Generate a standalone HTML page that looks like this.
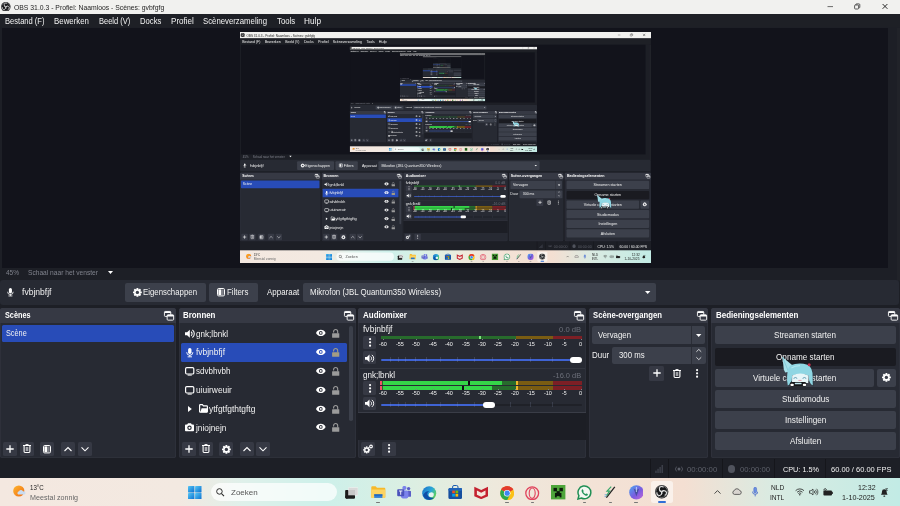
<!DOCTYPE html><html><head><meta charset="utf-8"><title>OBS</title><style>html,body{margin:0;padding:0;background:#1d1f26;overflow:hidden}body{width:900px;height:506px;position:relative;font-family:"Liberation Sans",sans-serif}.scr{position:absolute;left:0;top:0;width:900px;height:506px;overflow:hidden;will-change:transform}.nest{position:absolute;left:0;top:0;width:900px;height:506px;transform-origin:0 0;transform:scale(0.45667);overflow:hidden}.t{position:absolute;white-space:nowrap;line-height:1;transform-origin:0 50%;display:block;font-family:"Liberation Sans",sans-serif}</style></head><body><div class="scr"><div style="position:absolute;left:0px;top:0px;width:900px;height:506px;background:#1d1f26;"></div><div style="position:absolute;left:0px;top:0px;width:900px;height:13.6px;background:#f1f1ef;"></div><svg style="position:absolute;left:1.2px;top:1.8px;width:9.6px;height:9.6px" viewBox="-10 -10 20 20"><circle r="10" fill="#18181a"/><circle r="8.7" fill="none" stroke="#cfcfcf" stroke-width="0.7"/><circle cx="0" cy="-4.1" r="3.5" fill="none" stroke="#e4e4e4" stroke-width="1.5" stroke-dasharray="15.5 30" stroke-dashoffset="-2" transform="rotate(0)"/><circle cx="0" cy="-4.1" r="3.5" fill="none" stroke="#e4e4e4" stroke-width="1.5" stroke-dasharray="15.5 30" stroke-dashoffset="-2" transform="rotate(120)"/><circle cx="0" cy="-4.1" r="3.5" fill="none" stroke="#e4e4e4" stroke-width="1.5" stroke-dasharray="15.5 30" stroke-dashoffset="-2" transform="rotate(240)"/></svg><span class="t" style="left:13.80px;top:3.52px;font-size:7.9px;color:#1e1e1e;transform:scaleX(0.8648);">OBS 31.0.3 - Profiel: Naamloos - Scènes: gvbfgfg</span><svg style="position:absolute;left:826px;top:2px;width:64px;height:10px;overflow:visible" viewBox="0 0 64 10"><path d="M1.5 4.6 H7" stroke="#333" stroke-width="0.7"/><rect x="28.6" y="3" width="4" height="4" rx="0.8" fill="none" stroke="#333" stroke-width="0.8"/><path d="M29.8 3 V2.6 Q29.8 1.9 30.5 1.9 H33 Q33.8 1.9 33.8 2.7 V5.2 Q33.8 5.9 33.1 5.9" fill="none" stroke="#333" stroke-width="0.8"/><path d="M56.6 2 L61.4 6.8 M61.4 2 L56.6 6.8" stroke="#222" stroke-width="0.95"/></svg><div style="position:absolute;left:0px;top:13.6px;width:900px;height:13.9px;background:#1e2026;"></div><span class="t" style="left:5.00px;top:17.02px;font-size:8.6px;color:#f2f2f2;transform:scaleX(0.8796);">Bestand (F)</span><span class="t" style="left:54.00px;top:17.02px;font-size:8.6px;color:#f2f2f2;transform:scaleX(0.9158);">Bewerken</span><span class="t" style="left:98.70px;top:17.02px;font-size:8.6px;color:#f2f2f2;transform:scaleX(0.8736);">Beeld (V)</span><span class="t" style="left:139.70px;top:17.02px;font-size:8.6px;color:#f2f2f2;transform:scaleX(0.8916);">Docks</span><span class="t" style="left:170.60px;top:17.02px;font-size:8.6px;color:#f2f2f2;transform:scaleX(0.9401);">Profiel</span><span class="t" style="left:202.50px;top:17.02px;font-size:8.6px;color:#f2f2f2;transform:scaleX(0.9052);">Scèneverzameling</span><span class="t" style="left:276.50px;top:17.02px;font-size:8.6px;color:#f2f2f2;transform:scaleX(0.9022);">Tools</span><span class="t" style="left:304.00px;top:17.02px;font-size:8.6px;color:#f2f2f2;transform:scaleX(0.9611);">Hulp</span><div style="position:absolute;left:2px;top:27.5px;width:886px;height:240px;background:#12131b;"></div><div style="position:absolute;left:897.4px;top:27.5px;width:2.6px;height:253px;background:#212329;"></div><div style="position:absolute;left:240px;top:32px;width:411px;height:231px;overflow:hidden;background:#15161d"><div class="nest"><div style="position:absolute;left:0px;top:0px;width:900px;height:506px;background:#1d1f26;"></div><div style="position:absolute;left:0px;top:0px;width:900px;height:13.6px;background:#f1f1ef;"></div><svg style="position:absolute;left:1.2px;top:1.8px;width:9.6px;height:9.6px" viewBox="-10 -10 20 20"><circle r="10" fill="#18181a"/><circle r="8.7" fill="none" stroke="#cfcfcf" stroke-width="0.7"/><circle cx="0" cy="-4.1" r="3.5" fill="none" stroke="#e4e4e4" stroke-width="1.5" stroke-dasharray="15.5 30" stroke-dashoffset="-2" transform="rotate(0)"/><circle cx="0" cy="-4.1" r="3.5" fill="none" stroke="#e4e4e4" stroke-width="1.5" stroke-dasharray="15.5 30" stroke-dashoffset="-2" transform="rotate(120)"/><circle cx="0" cy="-4.1" r="3.5" fill="none" stroke="#e4e4e4" stroke-width="1.5" stroke-dasharray="15.5 30" stroke-dashoffset="-2" transform="rotate(240)"/></svg><span class="t" style="left:13.80px;top:3.52px;font-size:7.9px;color:#1e1e1e;transform:scaleX(0.8648);">OBS 31.0.3 - Profiel: Naamloos - Scènes: gvbfgfg</span><svg style="position:absolute;left:826px;top:2px;width:64px;height:10px;overflow:visible" viewBox="0 0 64 10"><path d="M1.5 4.6 H7" stroke="#333" stroke-width="0.7"/><rect x="28.6" y="3" width="4" height="4" rx="0.8" fill="none" stroke="#333" stroke-width="0.8"/><path d="M29.8 3 V2.6 Q29.8 1.9 30.5 1.9 H33 Q33.8 1.9 33.8 2.7 V5.2 Q33.8 5.9 33.1 5.9" fill="none" stroke="#333" stroke-width="0.8"/><path d="M56.6 2 L61.4 6.8 M61.4 2 L56.6 6.8" stroke="#222" stroke-width="0.95"/></svg><div style="position:absolute;left:0px;top:13.6px;width:900px;height:13.9px;background:#1e2026;"></div><span class="t" style="left:5.00px;top:17.02px;font-size:8.6px;color:#f2f2f2;transform:scaleX(0.8796);">Bestand (F)</span><span class="t" style="left:54.00px;top:17.02px;font-size:8.6px;color:#f2f2f2;transform:scaleX(0.9158);">Bewerken</span><span class="t" style="left:98.70px;top:17.02px;font-size:8.6px;color:#f2f2f2;transform:scaleX(0.8736);">Beeld (V)</span><span class="t" style="left:139.70px;top:17.02px;font-size:8.6px;color:#f2f2f2;transform:scaleX(0.8916);">Docks</span><span class="t" style="left:170.60px;top:17.02px;font-size:8.6px;color:#f2f2f2;transform:scaleX(0.9401);">Profiel</span><span class="t" style="left:202.50px;top:17.02px;font-size:8.6px;color:#f2f2f2;transform:scaleX(0.9052);">Scèneverzameling</span><span class="t" style="left:276.50px;top:17.02px;font-size:8.6px;color:#f2f2f2;transform:scaleX(0.9022);">Tools</span><span class="t" style="left:304.00px;top:17.02px;font-size:8.6px;color:#f2f2f2;transform:scaleX(0.9611);">Hulp</span><div style="position:absolute;left:2px;top:27.5px;width:886px;height:240px;background:#12131b;"></div><div style="position:absolute;left:897.4px;top:27.5px;width:2.6px;height:253px;background:#212329;"></div><div style="position:absolute;left:240px;top:32px;width:411px;height:231px;overflow:hidden;background:#15161d"><div class="nest"><div style="position:absolute;left:0px;top:0px;width:900px;height:506px;background:#1d1f26;"></div><div style="position:absolute;left:0px;top:0px;width:900px;height:13.6px;background:#f1f1ef;"></div><svg style="position:absolute;left:1.2px;top:1.8px;width:9.6px;height:9.6px" viewBox="-10 -10 20 20"><circle r="10" fill="#18181a"/><circle r="8.7" fill="none" stroke="#cfcfcf" stroke-width="0.7"/><circle cx="0" cy="-4.1" r="3.5" fill="none" stroke="#e4e4e4" stroke-width="1.5" stroke-dasharray="15.5 30" stroke-dashoffset="-2" transform="rotate(0)"/><circle cx="0" cy="-4.1" r="3.5" fill="none" stroke="#e4e4e4" stroke-width="1.5" stroke-dasharray="15.5 30" stroke-dashoffset="-2" transform="rotate(120)"/><circle cx="0" cy="-4.1" r="3.5" fill="none" stroke="#e4e4e4" stroke-width="1.5" stroke-dasharray="15.5 30" stroke-dashoffset="-2" transform="rotate(240)"/></svg><span class="t" style="left:13.80px;top:3.52px;font-size:7.9px;color:#1e1e1e;transform:scaleX(0.8648);">OBS 31.0.3 - Profiel: Naamloos - Scènes: gvbfgfg</span><svg style="position:absolute;left:826px;top:2px;width:64px;height:10px;overflow:visible" viewBox="0 0 64 10"><path d="M1.5 4.6 H7" stroke="#333" stroke-width="0.7"/><rect x="28.6" y="3" width="4" height="4" rx="0.8" fill="none" stroke="#333" stroke-width="0.8"/><path d="M29.8 3 V2.6 Q29.8 1.9 30.5 1.9 H33 Q33.8 1.9 33.8 2.7 V5.2 Q33.8 5.9 33.1 5.9" fill="none" stroke="#333" stroke-width="0.8"/><path d="M56.6 2 L61.4 6.8 M61.4 2 L56.6 6.8" stroke="#222" stroke-width="0.95"/></svg><div style="position:absolute;left:0px;top:13.6px;width:900px;height:13.9px;background:#1e2026;"></div><span class="t" style="left:5.00px;top:17.02px;font-size:8.6px;color:#f2f2f2;transform:scaleX(0.8796);">Bestand (F)</span><span class="t" style="left:54.00px;top:17.02px;font-size:8.6px;color:#f2f2f2;transform:scaleX(0.9158);">Bewerken</span><span class="t" style="left:98.70px;top:17.02px;font-size:8.6px;color:#f2f2f2;transform:scaleX(0.8736);">Beeld (V)</span><span class="t" style="left:139.70px;top:17.02px;font-size:8.6px;color:#f2f2f2;transform:scaleX(0.8916);">Docks</span><span class="t" style="left:170.60px;top:17.02px;font-size:8.6px;color:#f2f2f2;transform:scaleX(0.9401);">Profiel</span><span class="t" style="left:202.50px;top:17.02px;font-size:8.6px;color:#f2f2f2;transform:scaleX(0.9052);">Scèneverzameling</span><span class="t" style="left:276.50px;top:17.02px;font-size:8.6px;color:#f2f2f2;transform:scaleX(0.9022);">Tools</span><span class="t" style="left:304.00px;top:17.02px;font-size:8.6px;color:#f2f2f2;transform:scaleX(0.9611);">Hulp</span><div style="position:absolute;left:2px;top:27.5px;width:886px;height:240px;background:#12131b;"></div><div style="position:absolute;left:897.4px;top:27.5px;width:2.6px;height:253px;background:#212329;"></div><div style="position:absolute;left:240px;top:32px;width:411px;height:231px;overflow:hidden;background:#15161d"><div class="nest"><div style="position:absolute;left:0px;top:0px;width:900px;height:506px;background:#1d1f26;"></div><div style="position:absolute;left:0px;top:0px;width:900px;height:13.6px;background:#f1f1ef;"></div><svg style="position:absolute;left:1.2px;top:1.8px;width:9.6px;height:9.6px" viewBox="-10 -10 20 20"><circle r="10" fill="#18181a"/><circle r="8.7" fill="none" stroke="#cfcfcf" stroke-width="0.7"/><circle cx="0" cy="-4.1" r="3.5" fill="none" stroke="#e4e4e4" stroke-width="1.5" stroke-dasharray="15.5 30" stroke-dashoffset="-2" transform="rotate(0)"/><circle cx="0" cy="-4.1" r="3.5" fill="none" stroke="#e4e4e4" stroke-width="1.5" stroke-dasharray="15.5 30" stroke-dashoffset="-2" transform="rotate(120)"/><circle cx="0" cy="-4.1" r="3.5" fill="none" stroke="#e4e4e4" stroke-width="1.5" stroke-dasharray="15.5 30" stroke-dashoffset="-2" transform="rotate(240)"/></svg><span class="t" style="left:13.80px;top:3.52px;font-size:7.9px;color:#1e1e1e;transform:scaleX(0.8648);">OBS 31.0.3 - Profiel: Naamloos - Scènes: gvbfgfg</span><svg style="position:absolute;left:826px;top:2px;width:64px;height:10px;overflow:visible" viewBox="0 0 64 10"><path d="M1.5 4.6 H7" stroke="#333" stroke-width="0.7"/><rect x="28.6" y="3" width="4" height="4" rx="0.8" fill="none" stroke="#333" stroke-width="0.8"/><path d="M29.8 3 V2.6 Q29.8 1.9 30.5 1.9 H33 Q33.8 1.9 33.8 2.7 V5.2 Q33.8 5.9 33.1 5.9" fill="none" stroke="#333" stroke-width="0.8"/><path d="M56.6 2 L61.4 6.8 M61.4 2 L56.6 6.8" stroke="#222" stroke-width="0.95"/></svg><div style="position:absolute;left:0px;top:13.6px;width:900px;height:13.9px;background:#1e2026;"></div><span class="t" style="left:5.00px;top:17.02px;font-size:8.6px;color:#f2f2f2;transform:scaleX(0.8796);">Bestand (F)</span><span class="t" style="left:54.00px;top:17.02px;font-size:8.6px;color:#f2f2f2;transform:scaleX(0.9158);">Bewerken</span><span class="t" style="left:98.70px;top:17.02px;font-size:8.6px;color:#f2f2f2;transform:scaleX(0.8736);">Beeld (V)</span><span class="t" style="left:139.70px;top:17.02px;font-size:8.6px;color:#f2f2f2;transform:scaleX(0.8916);">Docks</span><span class="t" style="left:170.60px;top:17.02px;font-size:8.6px;color:#f2f2f2;transform:scaleX(0.9401);">Profiel</span><span class="t" style="left:202.50px;top:17.02px;font-size:8.6px;color:#f2f2f2;transform:scaleX(0.9052);">Scèneverzameling</span><span class="t" style="left:276.50px;top:17.02px;font-size:8.6px;color:#f2f2f2;transform:scaleX(0.9022);">Tools</span><span class="t" style="left:304.00px;top:17.02px;font-size:8.6px;color:#f2f2f2;transform:scaleX(0.9611);">Hulp</span><div style="position:absolute;left:2px;top:27.5px;width:886px;height:240px;background:#12131b;"></div><div style="position:absolute;left:897.4px;top:27.5px;width:2.6px;height:253px;background:#212329;"></div><div style="position:absolute;left:240px;top:32px;width:411px;height:231px;overflow:hidden;background:#15161d"><div class="nest"><div style="position:absolute;left:0px;top:0px;width:900px;height:506px;background:#1d1f26;"></div><div style="position:absolute;left:0px;top:0px;width:900px;height:13.6px;background:#f1f1ef;"></div><div style="position:absolute;left:0px;top:13.6px;width:900px;height:13.9px;background:#1e2026;"></div><div style="position:absolute;left:5px;top:18px;width:315px;height:6px;background:#8a8c92;"></div><div style="position:absolute;left:2px;top:27.5px;width:886px;height:240px;background:#12131b;"></div><div style="position:absolute;left:240px;top:32px;width:411px;height:231px;overflow:hidden;background:#15161d"><div class="nest"><div style="position:absolute;left:0px;top:0px;width:900px;height:506px;background:#1d1f26;"></div><div style="position:absolute;left:0px;top:0px;width:900px;height:13.6px;background:#f1f1ef;"></div><div style="position:absolute;left:0px;top:13.6px;width:900px;height:13.9px;background:#1e2026;"></div><div style="position:absolute;left:5px;top:18px;width:315px;height:6px;background:#8a8c92;"></div><div style="position:absolute;left:2px;top:27.5px;width:886px;height:240px;background:#12131b;"></div><div style="position:absolute;left:240px;top:32px;width:411px;height:231px;overflow:hidden;background:#15161d"></div><div style="position:absolute;left:0px;top:280px;width:898.6px;height:25px;background:#272a33;border-radius:3px;"></div><div style="position:absolute;left:125px;top:282.8px;width:81px;height:19px;background:#3c404b;border-radius:2px;"></div><div style="position:absolute;left:209.3px;top:282.8px;width:48.4px;height:19px;background:#3c404b;border-radius:2px;"></div><div style="position:absolute;left:302.7px;top:282.8px;width:353px;height:19px;background:#3c404b;border-radius:2px;"></div><div style="position:absolute;left:0px;top:308px;width:176px;height:150.4px;background:#272a33;border-radius:2.5px;"></div><div style="position:absolute;left:0px;top:308px;width:176px;height:14.8px;background:#363944;"></div><div style="position:absolute;left:179px;top:308px;width:176.5px;height:150.4px;background:#272a33;border-radius:2.5px;"></div><div style="position:absolute;left:179px;top:308px;width:176.5px;height:14.8px;background:#363944;"></div><div style="position:absolute;left:358.3px;top:308px;width:227.7px;height:150.4px;background:#272a33;border-radius:2.5px;"></div><div style="position:absolute;left:358.3px;top:308px;width:227.7px;height:14.8px;background:#363944;"></div><div style="position:absolute;left:589.3px;top:308px;width:118.90000000000009px;height:150.4px;background:#272a33;border-radius:2.5px;"></div><div style="position:absolute;left:589.3px;top:308px;width:118.90000000000009px;height:14.8px;background:#363944;"></div><div style="position:absolute;left:710.7px;top:308px;width:187.29999999999995px;height:150.4px;background:#272a33;border-radius:2.5px;"></div><div style="position:absolute;left:710.7px;top:308px;width:187.29999999999995px;height:14.8px;background:#363944;"></div><div style="position:absolute;left:2px;top:324.6px;width:172px;height:17.2px;background:#284cb8;"></div><div style="position:absolute;left:180.7px;top:342.9px;width:166.5px;height:18.8px;background:#284cb8;"></div><div style="position:absolute;left:185px;top:330.5px;width:40px;height:6px;background:#b8bac0;"></div><div style="position:absolute;left:316px;top:330.5px;width:9px;height:6px;background:#d0d0d0;"></div><div style="position:absolute;left:331px;top:329.5px;width:8px;height:8px;background:#8a8a8a;"></div><div style="position:absolute;left:185px;top:349.3px;width:40px;height:6px;background:#b8bac0;"></div><div style="position:absolute;left:316px;top:349.3px;width:9px;height:6px;background:#d0d0d0;"></div><div style="position:absolute;left:331px;top:348.3px;width:8px;height:8px;background:#8a8a8a;"></div><div style="position:absolute;left:185px;top:368.1px;width:40px;height:6px;background:#b8bac0;"></div><div style="position:absolute;left:316px;top:368.1px;width:9px;height:6px;background:#d0d0d0;"></div><div style="position:absolute;left:331px;top:367.1px;width:8px;height:8px;background:#8a8a8a;"></div><div style="position:absolute;left:185px;top:387px;width:40px;height:6px;background:#b8bac0;"></div><div style="position:absolute;left:316px;top:387px;width:9px;height:6px;background:#d0d0d0;"></div><div style="position:absolute;left:331px;top:386px;width:8px;height:8px;background:#8a8a8a;"></div><div style="position:absolute;left:185px;top:405.8px;width:40px;height:6px;background:#b8bac0;"></div><div style="position:absolute;left:316px;top:405.8px;width:9px;height:6px;background:#d0d0d0;"></div><div style="position:absolute;left:331px;top:404.8px;width:8px;height:8px;background:#8a8a8a;"></div><div style="position:absolute;left:185px;top:424.5px;width:40px;height:6px;background:#b8bac0;"></div><div style="position:absolute;left:316px;top:424.5px;width:9px;height:6px;background:#d0d0d0;"></div><div style="position:absolute;left:331px;top:423.5px;width:8px;height:8px;background:#8a8a8a;"></div><div style="position:absolute;left:380.5px;top:336px;width:135.3px;height:3.4px;background:#276b2c;"></div><div style="position:absolute;left:515.8px;top:336px;width:37px;height:3.4px;background:#7a5c12;"></div><div style="position:absolute;left:552.8px;top:336px;width:29.2px;height:3.4px;background:#7c1f25;"></div><div style="position:absolute;left:380.5px;top:358.5px;width:195px;height:2px;background:#3f63d4;"></div><div style="position:absolute;left:570px;top:356.6px;width:12.2px;height:6.2px;background:#fff;border-radius:3px;"></div><div style="position:absolute;left:380.5px;top:380.5px;width:135.3px;height:9px;background:#276b2c;"></div><div style="position:absolute;left:515.8px;top:380.5px;width:37px;height:9px;background:#7a5c12;"></div><div style="position:absolute;left:552.8px;top:380.5px;width:29.2px;height:9px;background:#7c1f25;"></div><div style="position:absolute;left:383px;top:380.5px;width:115px;height:9px;background:#35d648;"></div><div style="position:absolute;left:380.5px;top:403.8px;width:105px;height:2px;background:#3f63d4;"></div><div style="position:absolute;left:482.8px;top:401.8px;width:11.8px;height:6.2px;background:#fff;border-radius:3px;"></div><div style="position:absolute;left:358.3px;top:412.6px;width:227.7px;height:27.6px;background:#1c1e25;"></div><div style="position:absolute;left:592.2px;top:326.2px;width:113.3px;height:17.8px;background:#3c404b;border-radius:2px;"></div><div style="position:absolute;left:612px;top:346.7px;width:93.5px;height:17.4px;background:#3c404b;border-radius:2px;"></div><div style="position:absolute;left:715px;top:326.2px;width:181px;height:18px;background:#3c404b;border-radius:2px;"></div><div style="position:absolute;left:715px;top:347.6px;width:181px;height:18px;background:#1a1b21;border-radius:2px;"></div><div style="position:absolute;left:715px;top:368.8px;width:181px;height:18px;background:#3c404b;border-radius:2px;"></div><div style="position:absolute;left:715px;top:390px;width:181px;height:18px;background:#3c404b;border-radius:2px;"></div><div style="position:absolute;left:715px;top:411.2px;width:181px;height:18px;background:#3c404b;border-radius:2px;"></div><div style="position:absolute;left:715px;top:432.4px;width:181px;height:18px;background:#3c404b;border-radius:2px;"></div><div style="position:absolute;left:0;top:477.5px;width:900px;height:28.5px;background:linear-gradient(90deg,#f4e8e0 0%,#f3e9e1 20%,#dff0ea 27%,#cdf0ea 36%,#dcefe2 46%,#eee9dc 55%,#f3e2d6 66%,#f4dfd2 76%,#d9ebe2 86%,#c2ebe5 100%)"></div><div style="position:absolute;left:188px;top:485.6px;width:13.6px;height:13.6px;background:#2a8ae0;"></div><div style="position:absolute;left:210.6px;top:483px;width:126.6px;height:18.2px;background:rgba(255,255,255,0.72);border-radius:9px;"></div><div style="position:absolute;left:345px;top:485.6px;width:14px;height:14px;background:#333;border-radius:5px;"></div><div style="position:absolute;left:371px;top:485.6px;width:14px;height:14px;background:#f7c33a;border-radius:5px;"></div><div style="position:absolute;left:397px;top:485.6px;width:14px;height:14px;background:#6a70d8;border-radius:5px;"></div><div style="position:absolute;left:422px;top:485.6px;width:14px;height:14px;background:#2a8ad0;border-radius:5px;"></div><div style="position:absolute;left:448px;top:485.6px;width:14px;height:14px;background:#1b64b9;border-radius:5px;"></div><div style="position:absolute;left:474px;top:485.6px;width:14px;height:14px;background:#c8202f;border-radius:5px;"></div><div style="position:absolute;left:500px;top:485.6px;width:14px;height:14px;background:#e8a030;border-radius:5px;"></div><div style="position:absolute;left:525px;top:485.6px;width:14px;height:14px;background:#e0435c;border-radius:5px;"></div><div style="position:absolute;left:551px;top:485.6px;width:14px;height:14px;background:#4ea53a;border-radius:5px;"></div><div style="position:absolute;left:577px;top:485.6px;width:14px;height:14px;background:#24955c;border-radius:5px;"></div><div style="position:absolute;left:604px;top:485.6px;width:14px;height:14px;background:#444;border-radius:5px;"></div><div style="position:absolute;left:629px;top:485.6px;width:14px;height:14px;background:#7a5be0;border-radius:5px;"></div><div style="position:absolute;left:655px;top:485.6px;width:14px;height:14px;background:#1b1b1d;border-radius:5px;"></div></div></div><div style="position:absolute;left:0px;top:280px;width:898.6px;height:25px;background:#272a33;border-radius:3px;"></div><div style="position:absolute;left:125px;top:282.8px;width:81px;height:19px;background:#3c404b;border-radius:2px;"></div><div style="position:absolute;left:209.3px;top:282.8px;width:48.4px;height:19px;background:#3c404b;border-radius:2px;"></div><div style="position:absolute;left:302.7px;top:282.8px;width:353px;height:19px;background:#3c404b;border-radius:2px;"></div><div style="position:absolute;left:0px;top:308px;width:176px;height:150.4px;background:#272a33;border-radius:2.5px;"></div><div style="position:absolute;left:0px;top:308px;width:176px;height:14.8px;background:#363944;"></div><div style="position:absolute;left:179px;top:308px;width:176.5px;height:150.4px;background:#272a33;border-radius:2.5px;"></div><div style="position:absolute;left:179px;top:308px;width:176.5px;height:14.8px;background:#363944;"></div><div style="position:absolute;left:358.3px;top:308px;width:227.7px;height:150.4px;background:#272a33;border-radius:2.5px;"></div><div style="position:absolute;left:358.3px;top:308px;width:227.7px;height:14.8px;background:#363944;"></div><div style="position:absolute;left:589.3px;top:308px;width:118.90000000000009px;height:150.4px;background:#272a33;border-radius:2.5px;"></div><div style="position:absolute;left:589.3px;top:308px;width:118.90000000000009px;height:14.8px;background:#363944;"></div><div style="position:absolute;left:710.7px;top:308px;width:187.29999999999995px;height:150.4px;background:#272a33;border-radius:2.5px;"></div><div style="position:absolute;left:710.7px;top:308px;width:187.29999999999995px;height:14.8px;background:#363944;"></div><div style="position:absolute;left:2px;top:324.6px;width:172px;height:17.2px;background:#284cb8;"></div><div style="position:absolute;left:180.7px;top:342.9px;width:166.5px;height:18.8px;background:#284cb8;"></div><div style="position:absolute;left:185px;top:330.5px;width:40px;height:6px;background:#b8bac0;"></div><div style="position:absolute;left:316px;top:330.5px;width:9px;height:6px;background:#d0d0d0;"></div><div style="position:absolute;left:331px;top:329.5px;width:8px;height:8px;background:#8a8a8a;"></div><div style="position:absolute;left:185px;top:349.3px;width:40px;height:6px;background:#b8bac0;"></div><div style="position:absolute;left:316px;top:349.3px;width:9px;height:6px;background:#d0d0d0;"></div><div style="position:absolute;left:331px;top:348.3px;width:8px;height:8px;background:#8a8a8a;"></div><div style="position:absolute;left:185px;top:368.1px;width:40px;height:6px;background:#b8bac0;"></div><div style="position:absolute;left:316px;top:368.1px;width:9px;height:6px;background:#d0d0d0;"></div><div style="position:absolute;left:331px;top:367.1px;width:8px;height:8px;background:#8a8a8a;"></div><div style="position:absolute;left:185px;top:387px;width:40px;height:6px;background:#b8bac0;"></div><div style="position:absolute;left:316px;top:387px;width:9px;height:6px;background:#d0d0d0;"></div><div style="position:absolute;left:331px;top:386px;width:8px;height:8px;background:#8a8a8a;"></div><div style="position:absolute;left:185px;top:405.8px;width:40px;height:6px;background:#b8bac0;"></div><div style="position:absolute;left:316px;top:405.8px;width:9px;height:6px;background:#d0d0d0;"></div><div style="position:absolute;left:331px;top:404.8px;width:8px;height:8px;background:#8a8a8a;"></div><div style="position:absolute;left:185px;top:424.5px;width:40px;height:6px;background:#b8bac0;"></div><div style="position:absolute;left:316px;top:424.5px;width:9px;height:6px;background:#d0d0d0;"></div><div style="position:absolute;left:331px;top:423.5px;width:8px;height:8px;background:#8a8a8a;"></div><div style="position:absolute;left:380.5px;top:336px;width:135.3px;height:3.4px;background:#276b2c;"></div><div style="position:absolute;left:515.8px;top:336px;width:37px;height:3.4px;background:#7a5c12;"></div><div style="position:absolute;left:552.8px;top:336px;width:29.2px;height:3.4px;background:#7c1f25;"></div><div style="position:absolute;left:380.5px;top:358.5px;width:195px;height:2px;background:#3f63d4;"></div><div style="position:absolute;left:570px;top:356.6px;width:12.2px;height:6.2px;background:#fff;border-radius:3px;"></div><div style="position:absolute;left:380.5px;top:380.5px;width:135.3px;height:9px;background:#276b2c;"></div><div style="position:absolute;left:515.8px;top:380.5px;width:37px;height:9px;background:#7a5c12;"></div><div style="position:absolute;left:552.8px;top:380.5px;width:29.2px;height:9px;background:#7c1f25;"></div><div style="position:absolute;left:383px;top:380.5px;width:115px;height:9px;background:#35d648;"></div><div style="position:absolute;left:380.5px;top:403.8px;width:105px;height:2px;background:#3f63d4;"></div><div style="position:absolute;left:482.8px;top:401.8px;width:11.8px;height:6.2px;background:#fff;border-radius:3px;"></div><div style="position:absolute;left:358.3px;top:412.6px;width:227.7px;height:27.6px;background:#1c1e25;"></div><div style="position:absolute;left:592.2px;top:326.2px;width:113.3px;height:17.8px;background:#3c404b;border-radius:2px;"></div><div style="position:absolute;left:612px;top:346.7px;width:93.5px;height:17.4px;background:#3c404b;border-radius:2px;"></div><div style="position:absolute;left:715px;top:326.2px;width:181px;height:18px;background:#3c404b;border-radius:2px;"></div><div style="position:absolute;left:715px;top:347.6px;width:181px;height:18px;background:#1a1b21;border-radius:2px;"></div><div style="position:absolute;left:715px;top:368.8px;width:181px;height:18px;background:#3c404b;border-radius:2px;"></div><div style="position:absolute;left:715px;top:390px;width:181px;height:18px;background:#3c404b;border-radius:2px;"></div><div style="position:absolute;left:715px;top:411.2px;width:181px;height:18px;background:#3c404b;border-radius:2px;"></div><div style="position:absolute;left:715px;top:432.4px;width:181px;height:18px;background:#3c404b;border-radius:2px;"></div><div style="position:absolute;left:0;top:477.5px;width:900px;height:28.5px;background:linear-gradient(90deg,#f4e8e0 0%,#f3e9e1 20%,#dff0ea 27%,#cdf0ea 36%,#dcefe2 46%,#eee9dc 55%,#f3e2d6 66%,#f4dfd2 76%,#d9ebe2 86%,#c2ebe5 100%)"></div><div style="position:absolute;left:188px;top:485.6px;width:13.6px;height:13.6px;background:#2a8ae0;"></div><div style="position:absolute;left:210.6px;top:483px;width:126.6px;height:18.2px;background:rgba(255,255,255,0.72);border-radius:9px;"></div><div style="position:absolute;left:345px;top:485.6px;width:14px;height:14px;background:#333;border-radius:5px;"></div><div style="position:absolute;left:371px;top:485.6px;width:14px;height:14px;background:#f7c33a;border-radius:5px;"></div><div style="position:absolute;left:397px;top:485.6px;width:14px;height:14px;background:#6a70d8;border-radius:5px;"></div><div style="position:absolute;left:422px;top:485.6px;width:14px;height:14px;background:#2a8ad0;border-radius:5px;"></div><div style="position:absolute;left:448px;top:485.6px;width:14px;height:14px;background:#1b64b9;border-radius:5px;"></div><div style="position:absolute;left:474px;top:485.6px;width:14px;height:14px;background:#c8202f;border-radius:5px;"></div><div style="position:absolute;left:500px;top:485.6px;width:14px;height:14px;background:#e8a030;border-radius:5px;"></div><div style="position:absolute;left:525px;top:485.6px;width:14px;height:14px;background:#e0435c;border-radius:5px;"></div><div style="position:absolute;left:551px;top:485.6px;width:14px;height:14px;background:#4ea53a;border-radius:5px;"></div><div style="position:absolute;left:577px;top:485.6px;width:14px;height:14px;background:#24955c;border-radius:5px;"></div><div style="position:absolute;left:604px;top:485.6px;width:14px;height:14px;background:#444;border-radius:5px;"></div><div style="position:absolute;left:629px;top:485.6px;width:14px;height:14px;background:#7a5be0;border-radius:5px;"></div><div style="position:absolute;left:655px;top:485.6px;width:14px;height:14px;background:#1b1b1d;border-radius:5px;"></div></div></div><span class="t" style="left:6.30px;top:268.83px;font-size:7.2px;color:#80838d;transform:scaleX(0.9034);">45%</span><span class="t" style="left:28.00px;top:268.83px;font-size:7.2px;color:#80838d;transform:scaleX(0.9220);">Schaal naar het venster</span><svg style="position:absolute;left:108px;top:270.9px;width:5px;height:3px;overflow:visible" viewBox="0 0 5 3" ><path d="M0 0 H5 L2.5 3 Z" fill="#fff"/></svg><div style="position:absolute;left:0px;top:280px;width:898.6px;height:25px;background:#272a33;border-radius:3px;"></div><svg style="position:absolute;left:7.2px;top:288px;width:6.84px;height:8.46px;overflow:visible" viewBox="0 0 7.6 9.4" ><rect x="2.1" y="0" width="3.4" height="6" rx="1.7" fill="#fff"/><path d="M0.7 4.2 A3.1 3.1 0 0 0 6.9 4.2" fill="none" stroke="#fff" stroke-width="0.9"/><rect x="3.3" y="7" width="1" height="1.6" fill="#fff"/><rect x="1.6" y="8.4" width="4.4" height="0.9" fill="#fff"/></svg><span class="t" style="left:22.00px;top:289.19px;font-size:8.2px;color:#f2f2f2;transform:scaleX(1.0454);">fvbjnbfjf</span><div style="position:absolute;left:125px;top:282.8px;width:81px;height:19px;background:#3c404b;border-radius:2px;"></div><svg style="position:absolute;left:132.6px;top:288px;width:8.8px;height:8.8px;overflow:visible" viewBox="0 0 10 10" ><g transform="translate(5 5)"><rect x="-1.1" y="-5" width="2.2" height="2.4" rx="0.4" transform="rotate(0)" fill="#fff"/><rect x="-1.1" y="-5" width="2.2" height="2.4" rx="0.4" transform="rotate(45)" fill="#fff"/><rect x="-1.1" y="-5" width="2.2" height="2.4" rx="0.4" transform="rotate(90)" fill="#fff"/><rect x="-1.1" y="-5" width="2.2" height="2.4" rx="0.4" transform="rotate(135)" fill="#fff"/><rect x="-1.1" y="-5" width="2.2" height="2.4" rx="0.4" transform="rotate(180)" fill="#fff"/><rect x="-1.1" y="-5" width="2.2" height="2.4" rx="0.4" transform="rotate(225)" fill="#fff"/><rect x="-1.1" y="-5" width="2.2" height="2.4" rx="0.4" transform="rotate(270)" fill="#fff"/><rect x="-1.1" y="-5" width="2.2" height="2.4" rx="0.4" transform="rotate(315)" fill="#fff"/><circle r="3.7" fill="#fff"/><circle r="1.9" fill="#3c404b"/></g></svg><span class="t" style="left:142.70px;top:288.99px;font-size:8.2px;color:#f2f2f2;transform:scaleX(0.9565);">Eigenschappen</span><div style="position:absolute;left:209.3px;top:282.8px;width:48.4px;height:19px;background:#3c404b;border-radius:2px;"></div><svg style="position:absolute;left:217.2px;top:288.3px;width:8px;height:8.4px;overflow:visible" viewBox="0 0 8 8.4" ><rect x="0.5" y="0.5" width="7" height="7.4" rx="1.2" fill="none" stroke="#fff" stroke-width="1"/><rect x="1.4" y="1.4" width="2.6" height="5.6" fill="#fff"/><rect x="4" y="1.4" width="2.6" height="5.6" fill="#fff" opacity="0.35"/></svg><span class="t" style="left:227.30px;top:288.99px;font-size:8.2px;color:#f2f2f2;transform:scaleX(0.9598);">Filters</span><span class="t" style="left:266.70px;top:288.99px;font-size:8.2px;color:#f2f2f2;transform:scaleX(0.9719);">Apparaat</span><div style="position:absolute;left:302.7px;top:282.8px;width:353px;height:19px;background:#3c404b;border-radius:2px;"></div><span class="t" style="left:309.50px;top:288.99px;font-size:8.2px;color:#f2f2f2;transform:scaleX(0.9618);">Mikrofon (JBL Quantum350 Wireless)</span><svg style="position:absolute;left:645.2px;top:291.4px;width:5.4px;height:3px;overflow:visible" viewBox="0 0 5.4 3" ><path d="M0 0 H5.4 L2.7 3 Z" fill="#fff"/></svg><div style="position:absolute;left:0px;top:308px;width:176px;height:150.4px;background:#272a33;border-radius:2.5px;box-shadow:inset 0 0 0 0.8px #30333d;"></div><div style="position:absolute;left:0px;top:308px;width:176px;height:14.8px;background:#363944;border-radius:2.5px;border-bottom-left-radius:0;border-bottom-right-radius:0;"></div><span class="t" style="left:4.50px;top:312.49px;font-size:8.2px;color:#fff;transform:scaleX(0.8889);font-weight:bold;">Scènes</span><svg style="position:absolute;left:164.4px;top:310.5px;width:10.1px;height:9.6px;overflow:visible" viewBox="0 0 10.1 9.6" ><rect x="0.45" y="0.45" width="6.3" height="5" rx="0.9" fill="none" stroke="#fff" stroke-width="0.9"/><rect x="0.45" y="0.45" width="6.3" height="1.5" rx="0.5" fill="#fff"/><rect x="3.15" y="3.85" width="6.5" height="5.3" rx="0.9" fill="#363944" stroke="#fff" stroke-width="0.9"/><rect x="3.15" y="3.85" width="6.5" height="1.6" rx="0.5" fill="#fff"/></svg><div style="position:absolute;left:179px;top:308px;width:176.5px;height:150.4px;background:#272a33;border-radius:2.5px;box-shadow:inset 0 0 0 0.8px #30333d;"></div><div style="position:absolute;left:179px;top:308px;width:176.5px;height:14.8px;background:#363944;border-radius:2.5px;border-bottom-left-radius:0;border-bottom-right-radius:0;"></div><span class="t" style="left:183.40px;top:312.49px;font-size:8.2px;color:#fff;transform:scaleX(0.9622);font-weight:bold;">Bronnen</span><svg style="position:absolute;left:343.9px;top:310.5px;width:10.1px;height:9.6px;overflow:visible" viewBox="0 0 10.1 9.6" ><rect x="0.45" y="0.45" width="6.3" height="5" rx="0.9" fill="none" stroke="#fff" stroke-width="0.9"/><rect x="0.45" y="0.45" width="6.3" height="1.5" rx="0.5" fill="#fff"/><rect x="3.15" y="3.85" width="6.5" height="5.3" rx="0.9" fill="#363944" stroke="#fff" stroke-width="0.9"/><rect x="3.15" y="3.85" width="6.5" height="1.6" rx="0.5" fill="#fff"/></svg><div style="position:absolute;left:358.3px;top:308px;width:227.7px;height:150.4px;background:#272a33;border-radius:2.5px;box-shadow:inset 0 0 0 0.8px #30333d;"></div><div style="position:absolute;left:358.3px;top:308px;width:227.7px;height:14.8px;background:#363944;border-radius:2.5px;border-bottom-left-radius:0;border-bottom-right-radius:0;"></div><span class="t" style="left:362.50px;top:312.49px;font-size:8.2px;color:#fff;transform:scaleX(0.9745);font-weight:bold;">Audiomixer</span><svg style="position:absolute;left:574.4px;top:310.5px;width:10.1px;height:9.6px;overflow:visible" viewBox="0 0 10.1 9.6" ><rect x="0.45" y="0.45" width="6.3" height="5" rx="0.9" fill="none" stroke="#fff" stroke-width="0.9"/><rect x="0.45" y="0.45" width="6.3" height="1.5" rx="0.5" fill="#fff"/><rect x="3.15" y="3.85" width="6.5" height="5.3" rx="0.9" fill="#363944" stroke="#fff" stroke-width="0.9"/><rect x="3.15" y="3.85" width="6.5" height="1.6" rx="0.5" fill="#fff"/></svg><div style="position:absolute;left:589.3px;top:308px;width:118.90000000000009px;height:150.4px;background:#272a33;border-radius:2.5px;box-shadow:inset 0 0 0 0.8px #30333d;"></div><div style="position:absolute;left:589.3px;top:308px;width:118.90000000000009px;height:14.8px;background:#363944;border-radius:2.5px;border-bottom-left-radius:0;border-bottom-right-radius:0;"></div><span class="t" style="left:593.30px;top:312.49px;font-size:8.2px;color:#fff;transform:scaleX(0.9404);font-weight:bold;">Scène-overgangen</span><svg style="position:absolute;left:696.6px;top:310.5px;width:10.1px;height:9.6px;overflow:visible" viewBox="0 0 10.1 9.6" ><rect x="0.45" y="0.45" width="6.3" height="5" rx="0.9" fill="none" stroke="#fff" stroke-width="0.9"/><rect x="0.45" y="0.45" width="6.3" height="1.5" rx="0.5" fill="#fff"/><rect x="3.15" y="3.85" width="6.5" height="5.3" rx="0.9" fill="#363944" stroke="#fff" stroke-width="0.9"/><rect x="3.15" y="3.85" width="6.5" height="1.6" rx="0.5" fill="#fff"/></svg><div style="position:absolute;left:710.7px;top:308px;width:189.29999999999995px;height:150.4px;background:#272a33;border-radius:2.5px;box-shadow:inset 0 0 0 0.8px #30333d;"></div><div style="position:absolute;left:710.7px;top:308px;width:189.29999999999995px;height:14.8px;background:#363944;border-radius:2.5px;border-bottom-left-radius:0;border-bottom-right-radius:0;"></div><span class="t" style="left:715.50px;top:312.49px;font-size:8.2px;color:#fff;transform:scaleX(0.9723);font-weight:bold;">Bedieningselementen</span><svg style="position:absolute;left:887.8px;top:310.5px;width:10.1px;height:9.6px;overflow:visible" viewBox="0 0 10.1 9.6" ><rect x="0.45" y="0.45" width="6.3" height="5" rx="0.9" fill="none" stroke="#fff" stroke-width="0.9"/><rect x="0.45" y="0.45" width="6.3" height="1.5" rx="0.5" fill="#fff"/><rect x="3.15" y="3.85" width="6.5" height="5.3" rx="0.9" fill="#363944" stroke="#fff" stroke-width="0.9"/><rect x="3.15" y="3.85" width="6.5" height="1.6" rx="0.5" fill="#fff"/></svg><div style="position:absolute;left:2px;top:324.6px;width:172px;height:17.2px;background:#284cb8;border-radius:1.5px;"></div><span class="t" style="left:6.30px;top:329.99px;font-size:8.2px;color:#f2f2f2;transform:scaleX(0.8915);">Scène</span><div style="position:absolute;left:3.1px;top:442px;width:14.2px;height:13.8px;background:#363944;border-radius:1.5px;"></div><div style="position:absolute;left:20.2px;top:442px;width:14.2px;height:13.8px;background:#363944;border-radius:1.5px;"></div><div style="position:absolute;left:40.1px;top:442px;width:14.2px;height:13.8px;background:#363944;border-radius:1.5px;"></div><div style="position:absolute;left:61px;top:442px;width:14.2px;height:13.8px;background:#363944;border-radius:1.5px;"></div><div style="position:absolute;left:77.8px;top:442px;width:14.2px;height:13.8px;background:#363944;border-radius:1.5px;"></div><svg style="position:absolute;left:6.2px;top:445px;width:8px;height:8px;overflow:visible" viewBox="0 0 8 8" ><path d="M4 0.3 V7.7 M0.3 4 H7.7" stroke="#fff" stroke-width="1.3" fill="none"/></svg><svg style="position:absolute;left:23.3px;top:444.4px;width:8px;height:9px;overflow:visible" viewBox="0 0 8 9" ><path d="M0 1.5 H8" stroke="#fff" stroke-width="1"/><path d="M2.8 1.3 V0.5 H5.2 V1.3" stroke="#fff" stroke-width="0.9" fill="none"/><path d="M1.1 2 V7.6 Q1.1 8.5 2 8.5 H6 Q6.9 8.5 6.9 7.6 V2" stroke="#fff" stroke-width="1.1" fill="none"/><rect x="2.7" y="3" width="2.6" height="4" fill="#fff" opacity="0.55"/></svg><svg style="position:absolute;left:43.3px;top:444.8px;width:8px;height:8.4px;overflow:visible" viewBox="0 0 8 8.4" ><rect x="0.5" y="0.5" width="7" height="7.4" rx="1.2" fill="none" stroke="#fff" stroke-width="1"/><rect x="1.4" y="1.4" width="2.6" height="5.6" fill="#fff"/><rect x="4" y="1.4" width="2.6" height="5.6" fill="#fff" opacity="0.35"/></svg><svg style="position:absolute;left:64.1px;top:446.8px;width:8px;height:4.4px;overflow:visible" viewBox="0 0 8 4.4" ><path d="M0.5 4 L4 0.6 L7.5 4" stroke="#fff" stroke-width="1.1" fill="none"/></svg><svg style="position:absolute;left:80.9px;top:447px;width:8px;height:4.4px;overflow:visible" viewBox="0 0 8 4.4" ><path d="M0.5 0.4 L4 3.8 L7.5 0.4" stroke="#fff" stroke-width="1.1" fill="none"/></svg><div style="position:absolute;left:180.7px;top:342.9px;width:166.5px;height:18.8px;background:#284cb8;border-radius:1.5px;"></div><svg style="position:absolute;left:185px;top:328.8px;width:9.975px;height:9.450000000000001px;overflow:visible" viewBox="0 0 9.5 9" ><path d="M0 3 H2 L4.6 0.6 V8.4 L2 6 H0 Z" fill="#fff"/><path d="M5.8 2.6 A2.4 2.4 0 0 1 5.8 6.4" fill="none" stroke="#fff" stroke-width="1"/><path d="M7 0.9 A4.4 4.4 0 0 1 7 8.1" fill="none" stroke="#fff" stroke-width="1"/></svg><span class="t" style="left:195.60px;top:330.69px;font-size:8.2px;color:#f2f2f2;transform:scaleX(0.9929);">gnk;lbnkl</span><svg style="position:absolute;left:315.6px;top:329.3px;width:9.6px;height:7.8px;overflow:visible" viewBox="0 0 9.6 7.8" ><path d="M0 3.9 C1.6 -0.2 8 -0.2 9.6 3.9 C8 8 1.6 8 0 3.9 Z" fill="#fff"/><circle cx="4.8" cy="3.9" r="1.85" fill="#272a33"/><circle cx="4.8" cy="3.9" r="0.95" fill="#fff"/></svg><svg style="position:absolute;left:331.6px;top:329.3px;width:7.4px;height:8.7px;overflow:visible" viewBox="0 0 7.4 8.7" ><path d="M1.6 3.4 V2.5 A2 2 0 0 1 5.7 2.5 V4.4" fill="none" stroke="#9b9b9b" stroke-width="1.1"/><rect x="0.1" y="4.3" width="7.2" height="4.4" rx="0.5" fill="#9b9b9b"/></svg><svg style="position:absolute;left:186.2px;top:347.5px;width:7.6px;height:9.4px;overflow:visible" viewBox="0 0 7.6 9.4" ><rect x="2.1" y="0" width="3.4" height="6" rx="1.7" fill="#fff"/><path d="M0.7 4.2 A3.1 3.1 0 0 0 6.9 4.2" fill="none" stroke="#fff" stroke-width="0.9"/><rect x="3.3" y="7" width="1" height="1.6" fill="#fff"/><rect x="1.6" y="8.4" width="4.4" height="0.9" fill="#fff"/></svg><span class="t" style="left:195.60px;top:349.49px;font-size:8.2px;color:#f2f2f2;transform:scaleX(1.0277);">fvbjnbfjf</span><svg style="position:absolute;left:315.6px;top:348.1px;width:9.6px;height:7.8px;overflow:visible" viewBox="0 0 9.6 7.8" ><path d="M0 3.9 C1.6 -0.2 8 -0.2 9.6 3.9 C8 8 1.6 8 0 3.9 Z" fill="#fff"/><circle cx="4.8" cy="3.9" r="1.85" fill="#284cb8"/><circle cx="4.8" cy="3.9" r="0.95" fill="#fff"/></svg><svg style="position:absolute;left:331.6px;top:348.1px;width:7.4px;height:8.7px;overflow:visible" viewBox="0 0 7.4 8.7" ><path d="M1.6 3.4 V2.5 A2 2 0 0 1 5.7 2.5 V4.4" fill="none" stroke="#a39c84" stroke-width="1.1"/><rect x="0.1" y="4.3" width="7.2" height="4.4" rx="0.5" fill="#a39c84"/></svg><svg style="position:absolute;left:185.2px;top:366.70000000000005px;width:9.4px;height:8.8px;overflow:visible" viewBox="0 0 9.4 8.8" ><rect x="0.6" y="0.6" width="8.2" height="6.4" rx="1.2" fill="none" stroke="#fff" stroke-width="1.2"/><rect x="2.6" y="7.6" width="4.2" height="1" fill="#fff"/></svg><span class="t" style="left:195.60px;top:368.29px;font-size:8.2px;color:#f2f2f2;transform:scaleX(0.9811);">sdvbhvbh</span><svg style="position:absolute;left:315.6px;top:366.90000000000003px;width:9.6px;height:7.8px;overflow:visible" viewBox="0 0 9.6 7.8" ><path d="M0 3.9 C1.6 -0.2 8 -0.2 9.6 3.9 C8 8 1.6 8 0 3.9 Z" fill="#fff"/><circle cx="4.8" cy="3.9" r="1.85" fill="#272a33"/><circle cx="4.8" cy="3.9" r="0.95" fill="#fff"/></svg><svg style="position:absolute;left:331.6px;top:366.90000000000003px;width:7.4px;height:8.7px;overflow:visible" viewBox="0 0 7.4 8.7" ><path d="M1.6 3.4 V2.5 A2 2 0 0 1 5.7 2.5 V4.4" fill="none" stroke="#9b9b9b" stroke-width="1.1"/><rect x="0.1" y="4.3" width="7.2" height="4.4" rx="0.5" fill="#9b9b9b"/></svg><svg style="position:absolute;left:185.2px;top:385.6px;width:9.4px;height:8.8px;overflow:visible" viewBox="0 0 9.4 8.8" ><rect x="0.6" y="0.6" width="8.2" height="6.4" rx="1.2" fill="none" stroke="#fff" stroke-width="1.2"/><rect x="2.6" y="7.6" width="4.2" height="1" fill="#fff"/></svg><span class="t" style="left:195.60px;top:387.19px;font-size:8.2px;color:#f2f2f2;transform:scaleX(1.0243);">uiuirweuir</span><svg style="position:absolute;left:315.6px;top:385.8px;width:9.6px;height:7.8px;overflow:visible" viewBox="0 0 9.6 7.8" ><path d="M0 3.9 C1.6 -0.2 8 -0.2 9.6 3.9 C8 8 1.6 8 0 3.9 Z" fill="#fff"/><circle cx="4.8" cy="3.9" r="1.85" fill="#272a33"/><circle cx="4.8" cy="3.9" r="0.95" fill="#fff"/></svg><svg style="position:absolute;left:331.6px;top:385.8px;width:7.4px;height:8.7px;overflow:visible" viewBox="0 0 7.4 8.7" ><path d="M1.6 3.4 V2.5 A2 2 0 0 1 5.7 2.5 V4.4" fill="none" stroke="#9b9b9b" stroke-width="1.1"/><rect x="0.1" y="4.3" width="7.2" height="4.4" rx="0.5" fill="#9b9b9b"/></svg><svg style="position:absolute;left:187.8px;top:405.8px;width:3.8px;height:6px;overflow:visible" viewBox="0 0 3.8 6" ><path d="M0 0 L3.8 3 L0 6 Z" fill="#fff"/></svg><svg style="position:absolute;left:199px;top:404.2px;width:9.4px;height:8.8px;overflow:visible" viewBox="0 0 9.4 8.8" ><path d="M0.6 1.4 Q0.6 0.6 1.4 0.6 H3.4 L4.4 1.8 H7.6 Q8.4 1.8 8.4 2.6 V7.4 Q8.4 8.2 7.6 8.2 H1.4 Q0.6 8.2 0.6 7.4 Z" fill="none" stroke="#fff" stroke-width="1.2"/><path d="M2.6 4.2 H9.2 L8 8.2 H1.4 Z" fill="#fff"/></svg><span class="t" style="left:209.00px;top:405.99px;font-size:8.2px;color:#f2f2f2;transform:scaleX(1.0297);">ytfgtfgthtgftg</span><svg style="position:absolute;left:315.6px;top:404.6px;width:9.6px;height:7.8px;overflow:visible" viewBox="0 0 9.6 7.8" ><path d="M0 3.9 C1.6 -0.2 8 -0.2 9.6 3.9 C8 8 1.6 8 0 3.9 Z" fill="#fff"/><circle cx="4.8" cy="3.9" r="1.85" fill="#272a33"/><circle cx="4.8" cy="3.9" r="0.95" fill="#fff"/></svg><svg style="position:absolute;left:331.6px;top:404.6px;width:7.4px;height:8.7px;overflow:visible" viewBox="0 0 7.4 8.7" ><path d="M1.6 3.4 V2.5 A2 2 0 0 1 5.7 2.5 V4.4" fill="none" stroke="#9b9b9b" stroke-width="1.1"/><rect x="0.1" y="4.3" width="7.2" height="4.4" rx="0.5" fill="#9b9b9b"/></svg><svg style="position:absolute;left:185.2px;top:423.1px;width:9px;height:8.4px;overflow:visible" viewBox="0 0 9 8.4" ><path d="M0 2.4 Q0 1.6 0.8 1.6 H2.2 L3 0.3 H6 L6.8 1.6 H8.2 Q9 1.6 9 2.4 V7.4 Q9 8.2 8.2 8.2 H0.8 Q0 8.2 0 7.4 Z" fill="#fff"/><circle cx="4.5" cy="4.8" r="2.2" fill="#272a33"/><circle cx="4.5" cy="4.8" r="1.1" fill="#fff"/></svg><span class="t" style="left:195.60px;top:424.69px;font-size:8.2px;color:#f2f2f2;transform:scaleX(1.0118);">jniojnejn</span><svg style="position:absolute;left:315.6px;top:423.3px;width:9.6px;height:7.8px;overflow:visible" viewBox="0 0 9.6 7.8" ><path d="M0 3.9 C1.6 -0.2 8 -0.2 9.6 3.9 C8 8 1.6 8 0 3.9 Z" fill="#fff"/><circle cx="4.8" cy="3.9" r="1.85" fill="#272a33"/><circle cx="4.8" cy="3.9" r="0.95" fill="#fff"/></svg><svg style="position:absolute;left:331.6px;top:423.3px;width:7.4px;height:8.7px;overflow:visible" viewBox="0 0 7.4 8.7" ><path d="M1.6 3.4 V2.5 A2 2 0 0 1 5.7 2.5 V4.4" fill="none" stroke="#9b9b9b" stroke-width="1.1"/><rect x="0.1" y="4.3" width="7.2" height="4.4" rx="0.5" fill="#9b9b9b"/></svg><div style="position:absolute;left:349px;top:325.5px;width:3.6px;height:95px;background:#3c404b;border-radius:1.8px;"></div><div style="position:absolute;left:182px;top:442px;width:14.2px;height:13.8px;background:#363944;border-radius:1.5px;"></div><div style="position:absolute;left:199px;top:442px;width:14.2px;height:13.8px;background:#363944;border-radius:1.5px;"></div><div style="position:absolute;left:219.3px;top:442px;width:14.2px;height:13.8px;background:#363944;border-radius:1.5px;"></div><div style="position:absolute;left:239.5px;top:442px;width:14.2px;height:13.8px;background:#363944;border-radius:1.5px;"></div><div style="position:absolute;left:256.2px;top:442px;width:14.2px;height:13.8px;background:#363944;border-radius:1.5px;"></div><svg style="position:absolute;left:185.1px;top:445px;width:8px;height:8px;overflow:visible" viewBox="0 0 8 8" ><path d="M4 0.3 V7.7 M0.3 4 H7.7" stroke="#fff" stroke-width="1.3" fill="none"/></svg><svg style="position:absolute;left:202.1px;top:444.4px;width:8px;height:9px;overflow:visible" viewBox="0 0 8 9" ><path d="M0 1.5 H8" stroke="#fff" stroke-width="1"/><path d="M2.8 1.3 V0.5 H5.2 V1.3" stroke="#fff" stroke-width="0.9" fill="none"/><path d="M1.1 2 V7.6 Q1.1 8.5 2 8.5 H6 Q6.9 8.5 6.9 7.6 V2" stroke="#fff" stroke-width="1.1" fill="none"/><rect x="2.7" y="3" width="2.6" height="4" fill="#fff" opacity="0.55"/></svg><svg style="position:absolute;left:222px;top:444.5px;width:8.8px;height:8.8px;overflow:visible" viewBox="0 0 10 10" ><g transform="translate(5 5)"><rect x="-1.1" y="-5" width="2.2" height="2.4" rx="0.4" transform="rotate(0)" fill="#fff"/><rect x="-1.1" y="-5" width="2.2" height="2.4" rx="0.4" transform="rotate(45)" fill="#fff"/><rect x="-1.1" y="-5" width="2.2" height="2.4" rx="0.4" transform="rotate(90)" fill="#fff"/><rect x="-1.1" y="-5" width="2.2" height="2.4" rx="0.4" transform="rotate(135)" fill="#fff"/><rect x="-1.1" y="-5" width="2.2" height="2.4" rx="0.4" transform="rotate(180)" fill="#fff"/><rect x="-1.1" y="-5" width="2.2" height="2.4" rx="0.4" transform="rotate(225)" fill="#fff"/><rect x="-1.1" y="-5" width="2.2" height="2.4" rx="0.4" transform="rotate(270)" fill="#fff"/><rect x="-1.1" y="-5" width="2.2" height="2.4" rx="0.4" transform="rotate(315)" fill="#fff"/><circle r="3.7" fill="#fff"/><circle r="1.9" fill="#363944"/></g></svg><svg style="position:absolute;left:242.6px;top:446.8px;width:8px;height:4.4px;overflow:visible" viewBox="0 0 8 4.4" ><path d="M0.5 4 L4 0.6 L7.5 4" stroke="#fff" stroke-width="1.1" fill="none"/></svg><svg style="position:absolute;left:259.3px;top:447px;width:8px;height:4.4px;overflow:visible" viewBox="0 0 8 4.4" ><path d="M0.5 0.4 L4 3.8 L7.5 0.4" stroke="#fff" stroke-width="1.1" fill="none"/></svg><span class="t" style="left:362.60px;top:326.19px;font-size:8.2px;color:#f2f2f2;transform:scaleX(1.0419);">fvbjnbfjf</span><span class="t" style="left:559.00px;top:325.97px;font-size:7.8px;color:#6d707b;transform:scaleX(0.9846);">0.0 dB</span><div style="position:absolute;left:380.5px;top:336px;width:135.3px;height:3.4px;background:#276b2c;"></div><div style="position:absolute;left:515.8px;top:336px;width:37px;height:3.4px;background:#7a5c12;"></div><div style="position:absolute;left:552.8px;top:336px;width:29.2px;height:3.4px;background:#7c1f25;"></div><div style="position:absolute;left:479.4px;top:336px;width:1.3px;height:3.4px;background:#7ee57e;"></div><span class="t" style="left:379.35px;top:340.62px;font-size:6.1px;color:#f0f0f0;transform:scaleX(0.8965);">-60</span><div style="position:absolute;left:383.35px;top:338.90000000000003px;width:0.5px;height:1.5px;background:#7d7f88;"></div><span class="t" style="left:395.78px;top:340.62px;font-size:6.1px;color:#f0f0f0;transform:scaleX(0.8965);">-55</span><div style="position:absolute;left:399.78000000000003px;top:338.90000000000003px;width:0.5px;height:1.5px;background:#7d7f88;"></div><span class="t" style="left:412.21px;top:340.62px;font-size:6.1px;color:#f0f0f0;transform:scaleX(0.8965);">-50</span><div style="position:absolute;left:416.21000000000004px;top:338.90000000000003px;width:0.5px;height:1.5px;background:#7d7f88;"></div><span class="t" style="left:428.64px;top:340.62px;font-size:6.1px;color:#f0f0f0;transform:scaleX(0.8965);">-45</span><div style="position:absolute;left:432.64000000000004px;top:338.90000000000003px;width:0.5px;height:1.5px;background:#7d7f88;"></div><span class="t" style="left:445.07px;top:340.62px;font-size:6.1px;color:#f0f0f0;transform:scaleX(0.8965);">-40</span><div style="position:absolute;left:449.07000000000005px;top:338.90000000000003px;width:0.5px;height:1.5px;background:#7d7f88;"></div><span class="t" style="left:461.50px;top:340.62px;font-size:6.1px;color:#f0f0f0;transform:scaleX(0.8965);">-35</span><div style="position:absolute;left:465.5px;top:338.90000000000003px;width:0.5px;height:1.5px;background:#7d7f88;"></div><span class="t" style="left:477.93px;top:340.62px;font-size:6.1px;color:#f0f0f0;transform:scaleX(0.8965);">-30</span><div style="position:absolute;left:481.93px;top:338.90000000000003px;width:0.5px;height:1.5px;background:#7d7f88;"></div><span class="t" style="left:494.36px;top:340.62px;font-size:6.1px;color:#f0f0f0;transform:scaleX(0.8965);">-25</span><div style="position:absolute;left:498.36px;top:338.90000000000003px;width:0.5px;height:1.5px;background:#7d7f88;"></div><span class="t" style="left:510.79px;top:340.62px;font-size:6.1px;color:#f0f0f0;transform:scaleX(0.8965);">-20</span><div style="position:absolute;left:514.79px;top:338.90000000000003px;width:0.5px;height:1.5px;background:#7d7f88;"></div><span class="t" style="left:527.22px;top:340.62px;font-size:6.1px;color:#f0f0f0;transform:scaleX(0.8965);">-15</span><div style="position:absolute;left:531.22px;top:338.90000000000003px;width:0.5px;height:1.5px;background:#7d7f88;"></div><span class="t" style="left:543.65px;top:340.62px;font-size:6.1px;color:#f0f0f0;transform:scaleX(0.8965);">-10</span><div style="position:absolute;left:547.6500000000001px;top:338.90000000000003px;width:0.5px;height:1.5px;background:#7d7f88;"></div><span class="t" style="left:561.73px;top:340.62px;font-size:6.1px;color:#f0f0f0;transform:scaleX(0.8484);">-5</span><div style="position:absolute;left:564.08px;top:338.90000000000003px;width:0.5px;height:1.5px;background:#7d7f88;"></div><span class="t" style="left:578.90px;top:340.62px;font-size:6.1px;color:#f0f0f0;transform:scaleX(0.9143);">0</span><div style="position:absolute;left:580.51px;top:338.90000000000003px;width:0.5px;height:1.5px;background:#7d7f88;"></div><div style="position:absolute;left:363px;top:336px;width:13.4px;height:13.4px;background:#363944;border-radius:1.5px;"></div><svg style="position:absolute;left:368.62px;top:338.17px;width:2.16px;height:8.76px;overflow:visible" viewBox="0 0 2.16 8.76" ><circle cx="1.08" cy="1.08" r="1.08" fill="#fff"/><circle cx="1.08" cy="4.38" r="1.08" fill="#fff"/><circle cx="1.08" cy="7.68" r="1.08" fill="#fff"/></svg><div style="position:absolute;left:363px;top:351.4px;width:13.4px;height:13px;background:#363944;border-radius:1.5px;"></div><svg style="position:absolute;left:365px;top:353.6px;width:9.31px;height:8.82px;overflow:visible" viewBox="0 0 9.5 9" ><path d="M0 3 H2 L4.6 0.6 V8.4 L2 6 H0 Z" fill="#fff"/><path d="M5.8 2.6 A2.4 2.4 0 0 1 5.8 6.4" fill="none" stroke="#fff" stroke-width="1"/><path d="M7 0.9 A4.4 4.4 0 0 1 7 8.1" fill="none" stroke="#fff" stroke-width="1"/></svg><div style="position:absolute;left:380.5px;top:358.5px;width:195px;height:2px;background:#3f63d4;border-radius:1px;"></div><div style="position:absolute;left:389.6px;top:356.9px;width:0.5px;height:5.2px;background:rgba(150,160,200,0.22);"></div><div style="position:absolute;left:397.5px;top:356.9px;width:0.5px;height:5.2px;background:rgba(150,160,200,0.22);"></div><div style="position:absolute;left:405.4px;top:356.9px;width:0.5px;height:5.2px;background:rgba(150,160,200,0.22);"></div><div style="position:absolute;left:414.8px;top:356.9px;width:0.5px;height:5.2px;background:rgba(150,160,200,0.22);"></div><div style="position:absolute;left:426px;top:356.9px;width:0.5px;height:5.2px;background:rgba(150,160,200,0.22);"></div><div style="position:absolute;left:439.7px;top:356.9px;width:0.5px;height:5.2px;background:rgba(150,160,200,0.22);"></div><div style="position:absolute;left:457px;top:356.9px;width:0.5px;height:5.2px;background:rgba(150,160,200,0.22);"></div><div style="position:absolute;left:474px;top:356.9px;width:0.5px;height:5.2px;background:rgba(150,160,200,0.22);"></div><div style="position:absolute;left:492px;top:356.9px;width:0.5px;height:5.2px;background:rgba(150,160,200,0.22);"></div><div style="position:absolute;left:510px;top:356.9px;width:0.5px;height:5.2px;background:rgba(150,160,200,0.22);"></div><div style="position:absolute;left:530px;top:356.9px;width:0.5px;height:5.2px;background:rgba(150,160,200,0.22);"></div><div style="position:absolute;left:552px;top:356.9px;width:0.5px;height:5.2px;background:rgba(150,160,200,0.22);"></div><div style="position:absolute;left:570px;top:356.6px;width:12.2px;height:6.2px;background:#fff;border-radius:3.1px;"></div><div style="position:absolute;left:360px;top:367.6px;width:224.5px;height:0.6px;background:#33363f;"></div><span class="t" style="left:362.60px;top:371.79px;font-size:8.2px;color:#f2f2f2;transform:scaleX(0.9899);">gnk;lbnkl</span><span class="t" style="left:553.00px;top:371.57px;font-size:7.8px;color:#6d707b;transform:scaleX(0.9564);">-16.0 dB</span><div style="position:absolute;left:380.5px;top:380.5px;width:135.3px;height:4px;background:#276b2c;"></div><div style="position:absolute;left:515.8px;top:380.5px;width:37px;height:4px;background:#7a5c12;"></div><div style="position:absolute;left:552.8px;top:380.5px;width:29.2px;height:4px;background:#7c1f25;"></div><div style="position:absolute;left:383px;top:380.5px;width:85px;height:4px;background:#35d648;"></div><div style="position:absolute;left:468px;top:380.5px;width:2.1999999999999886px;height:4px;background:#0c0d10;"></div><div style="position:absolute;left:470.2px;top:380.5px;width:32.10000000000002px;height:4px;background:#35d648;"></div><div style="position:absolute;left:516px;top:380.5px;width:1.6px;height:4px;background:#f0b52a;"></div><div style="position:absolute;left:380.2px;top:380.5px;width:1.8px;height:4px;background:#f0506a;"></div><div style="position:absolute;left:380.5px;top:385.5px;width:135.3px;height:4px;background:#276b2c;"></div><div style="position:absolute;left:515.8px;top:385.5px;width:37px;height:4px;background:#7a5c12;"></div><div style="position:absolute;left:552.8px;top:385.5px;width:29.2px;height:4px;background:#7c1f25;"></div><div style="position:absolute;left:383px;top:385.5px;width:79px;height:4px;background:#35d648;"></div><div style="position:absolute;left:462px;top:385.5px;width:2px;height:4px;background:#0c0d10;"></div><div style="position:absolute;left:464px;top:385.5px;width:27.80000000000001px;height:4px;background:#35d648;"></div><div style="position:absolute;left:516px;top:385.5px;width:1.6px;height:4px;background:#f0b52a;"></div><div style="position:absolute;left:380.2px;top:385.5px;width:1.8px;height:4px;background:#f0506a;"></div><span class="t" style="left:379.35px;top:390.22px;font-size:6.1px;color:#f0f0f0;transform:scaleX(0.8965);">-60</span><div style="position:absolute;left:383.35px;top:388.5px;width:0.5px;height:1.5px;background:#7d7f88;"></div><span class="t" style="left:395.78px;top:390.22px;font-size:6.1px;color:#f0f0f0;transform:scaleX(0.8965);">-55</span><div style="position:absolute;left:399.78000000000003px;top:388.5px;width:0.5px;height:1.5px;background:#7d7f88;"></div><span class="t" style="left:412.21px;top:390.22px;font-size:6.1px;color:#f0f0f0;transform:scaleX(0.8965);">-50</span><div style="position:absolute;left:416.21000000000004px;top:388.5px;width:0.5px;height:1.5px;background:#7d7f88;"></div><span class="t" style="left:428.64px;top:390.22px;font-size:6.1px;color:#f0f0f0;transform:scaleX(0.8965);">-45</span><div style="position:absolute;left:432.64000000000004px;top:388.5px;width:0.5px;height:1.5px;background:#7d7f88;"></div><span class="t" style="left:445.07px;top:390.22px;font-size:6.1px;color:#f0f0f0;transform:scaleX(0.8965);">-40</span><div style="position:absolute;left:449.07000000000005px;top:388.5px;width:0.5px;height:1.5px;background:#7d7f88;"></div><span class="t" style="left:461.50px;top:390.22px;font-size:6.1px;color:#f0f0f0;transform:scaleX(0.8965);">-35</span><div style="position:absolute;left:465.5px;top:388.5px;width:0.5px;height:1.5px;background:#7d7f88;"></div><span class="t" style="left:477.93px;top:390.22px;font-size:6.1px;color:#f0f0f0;transform:scaleX(0.8965);">-30</span><div style="position:absolute;left:481.93px;top:388.5px;width:0.5px;height:1.5px;background:#7d7f88;"></div><span class="t" style="left:494.36px;top:390.22px;font-size:6.1px;color:#f0f0f0;transform:scaleX(0.8965);">-25</span><div style="position:absolute;left:498.36px;top:388.5px;width:0.5px;height:1.5px;background:#7d7f88;"></div><span class="t" style="left:510.79px;top:390.22px;font-size:6.1px;color:#f0f0f0;transform:scaleX(0.8965);">-20</span><div style="position:absolute;left:514.79px;top:388.5px;width:0.5px;height:1.5px;background:#7d7f88;"></div><span class="t" style="left:527.22px;top:390.22px;font-size:6.1px;color:#f0f0f0;transform:scaleX(0.8965);">-15</span><div style="position:absolute;left:531.22px;top:388.5px;width:0.5px;height:1.5px;background:#7d7f88;"></div><span class="t" style="left:543.65px;top:390.22px;font-size:6.1px;color:#f0f0f0;transform:scaleX(0.8965);">-10</span><div style="position:absolute;left:547.6500000000001px;top:388.5px;width:0.5px;height:1.5px;background:#7d7f88;"></div><span class="t" style="left:561.73px;top:390.22px;font-size:6.1px;color:#f0f0f0;transform:scaleX(0.8484);">-5</span><div style="position:absolute;left:564.08px;top:388.5px;width:0.5px;height:1.5px;background:#7d7f88;"></div><span class="t" style="left:578.90px;top:390.22px;font-size:6.1px;color:#f0f0f0;transform:scaleX(0.9143);">0</span><div style="position:absolute;left:580.51px;top:388.5px;width:0.5px;height:1.5px;background:#7d7f88;"></div><div style="position:absolute;left:363px;top:381.4px;width:13.4px;height:13.4px;background:#363944;border-radius:1.5px;"></div><svg style="position:absolute;left:368.62px;top:383.57px;width:2.16px;height:8.76px;overflow:visible" viewBox="0 0 2.16 8.76" ><circle cx="1.08" cy="1.08" r="1.08" fill="#fff"/><circle cx="1.08" cy="4.38" r="1.08" fill="#fff"/><circle cx="1.08" cy="7.68" r="1.08" fill="#fff"/></svg><div style="position:absolute;left:363px;top:396.8px;width:13.4px;height:13px;background:#363944;border-radius:1.5px;"></div><svg style="position:absolute;left:365px;top:399px;width:9.31px;height:8.82px;overflow:visible" viewBox="0 0 9.5 9" ><path d="M0 3 H2 L4.6 0.6 V8.4 L2 6 H0 Z" fill="#fff"/><path d="M5.8 2.6 A2.4 2.4 0 0 1 5.8 6.4" fill="none" stroke="#fff" stroke-width="1"/><path d="M7 0.9 A4.4 4.4 0 0 1 7 8.1" fill="none" stroke="#fff" stroke-width="1"/></svg><div style="position:absolute;left:380.5px;top:403.8px;width:201px;height:2px;background:#1f2128;border-radius:1px;"></div><div style="position:absolute;left:380.5px;top:403.8px;width:105px;height:2px;background:#3f63d4;border-radius:1px;"></div><div style="position:absolute;left:389.6px;top:402.2px;width:0.5px;height:5.2px;background:rgba(150,160,200,0.18);"></div><div style="position:absolute;left:397.5px;top:402.2px;width:0.5px;height:5.2px;background:rgba(150,160,200,0.18);"></div><div style="position:absolute;left:405.4px;top:402.2px;width:0.5px;height:5.2px;background:rgba(150,160,200,0.18);"></div><div style="position:absolute;left:414.8px;top:402.2px;width:0.5px;height:5.2px;background:rgba(150,160,200,0.18);"></div><div style="position:absolute;left:426px;top:402.2px;width:0.5px;height:5.2px;background:rgba(150,160,200,0.18);"></div><div style="position:absolute;left:439.7px;top:402.2px;width:0.5px;height:5.2px;background:rgba(150,160,200,0.18);"></div><div style="position:absolute;left:457px;top:402.2px;width:0.5px;height:5.2px;background:rgba(150,160,200,0.18);"></div><div style="position:absolute;left:474px;top:402.2px;width:0.5px;height:5.2px;background:rgba(150,160,200,0.18);"></div><div style="position:absolute;left:492px;top:402.2px;width:0.5px;height:5.2px;background:rgba(150,160,200,0.18);"></div><div style="position:absolute;left:510px;top:402.2px;width:0.5px;height:5.2px;background:rgba(150,160,200,0.18);"></div><div style="position:absolute;left:530px;top:402.2px;width:0.5px;height:5.2px;background:rgba(150,160,200,0.18);"></div><div style="position:absolute;left:552px;top:402.2px;width:0.5px;height:5.2px;background:rgba(150,160,200,0.18);"></div><div style="position:absolute;left:482.8px;top:401.8px;width:11.8px;height:6.2px;background:#fff;border-radius:3.1px;"></div><div style="position:absolute;left:358.3px;top:412.6px;width:227.7px;height:27.6px;background:#1c1e25;"></div><div style="position:absolute;left:358.3px;top:412.3px;width:227.7px;height:0.6px;background:#3a3d47;"></div><div style="position:absolute;left:361px;top:442px;width:14.4px;height:13.6px;background:#363944;border-radius:1.5px;"></div><svg style="position:absolute;left:363.2px;top:444.2px;width:10px;height:9.6px;overflow:visible" viewBox="0 0 10 9.6" ><g transform="translate(3.7 5.9)"><rect x="-0.75" y="-3.50" width="1.50" height="1.30" transform="rotate(0.0)" fill="#fff"/><rect x="-0.75" y="-3.50" width="1.50" height="1.30" transform="rotate(45.0)" fill="#fff"/><rect x="-0.75" y="-3.50" width="1.50" height="1.30" transform="rotate(90.0)" fill="#fff"/><rect x="-0.75" y="-3.50" width="1.50" height="1.30" transform="rotate(135.0)" fill="#fff"/><rect x="-0.75" y="-3.50" width="1.50" height="1.30" transform="rotate(180.0)" fill="#fff"/><rect x="-0.75" y="-3.50" width="1.50" height="1.30" transform="rotate(225.0)" fill="#fff"/><rect x="-0.75" y="-3.50" width="1.50" height="1.30" transform="rotate(270.0)" fill="#fff"/><rect x="-0.75" y="-3.50" width="1.50" height="1.30" transform="rotate(315.0)" fill="#fff"/><circle r="2.6" fill="#fff"/><circle r="1.25" fill="#363944"/></g><circle cx="8" cy="2.5" r="1.35" fill="none" stroke="#fff" stroke-width="1.1"/></svg><div style="position:absolute;left:382px;top:442px;width:14px;height:13.6px;background:#363944;border-radius:1.5px;"></div><svg style="position:absolute;left:387.92px;top:444.37px;width:2.16px;height:8.76px;overflow:visible" viewBox="0 0 2.16 8.76" ><circle cx="1.08" cy="1.08" r="1.08" fill="#fff"/><circle cx="1.08" cy="4.38" r="1.08" fill="#fff"/><circle cx="1.08" cy="7.68" r="1.08" fill="#fff"/></svg><div style="position:absolute;left:592.2px;top:326.2px;width:113.3px;height:17.8px;background:#3c404b;border-radius:2px;"></div><div style="position:absolute;left:690.6px;top:326.2px;width:0.5px;height:17.8px;background:#2b2e37;"></div><span class="t" style="left:598.00px;top:331.79px;font-size:8.2px;color:#f2f2f2;transform:scaleX(0.9535);">Vervagen</span><svg style="position:absolute;left:696px;top:334.3px;width:5.4px;height:3px;overflow:visible" viewBox="0 0 5.4 3" ><path d="M0 0 H5.4 L2.7 3 Z" fill="#fff"/></svg><span class="t" style="left:591.80px;top:351.79px;font-size:8.2px;color:#f2f2f2;transform:scaleX(0.9690);">Duur</span><div style="position:absolute;left:612px;top:346.7px;width:93.5px;height:17.4px;background:#3c404b;border-radius:2px;"></div><div style="position:absolute;left:690.6px;top:346.7px;width:0.5px;height:17.4px;background:#2b2e37;"></div><span class="t" style="left:618.80px;top:351.79px;font-size:8.2px;color:#f2f2f2;transform:scaleX(0.9531);">300 ms</span><svg style="position:absolute;left:695.6px;top:349.4px;width:5.6px;height:3.08px;overflow:visible" viewBox="0 0 8 4.4" ><path d="M0.5 4 L4 0.6 L7.5 4" stroke="#fff" stroke-width="1.1" fill="none"/></svg><svg style="position:absolute;left:695.6px;top:357.4px;width:5.6px;height:3.08px;overflow:visible" viewBox="0 0 8 4.4" ><path d="M0.5 0.4 L4 3.8 L7.5 0.4" stroke="#fff" stroke-width="1.1" fill="none"/></svg><div style="position:absolute;left:649.3px;top:365.8px;width:15px;height:15px;background:#363944;border-radius:1.5px;"></div><svg style="position:absolute;left:652.8px;top:369.3px;width:8px;height:8px;overflow:visible" viewBox="0 0 8 8" ><path d="M4 0.3 V7.7 M0.3 4 H7.7" stroke="#fff" stroke-width="1.3" fill="none"/></svg><svg style="position:absolute;left:673px;top:369px;width:8px;height:9px;overflow:visible" viewBox="0 0 8 9" ><path d="M0 1.5 H8" stroke="#fff" stroke-width="1"/><path d="M2.8 1.3 V0.5 H5.2 V1.3" stroke="#fff" stroke-width="0.9" fill="none"/><path d="M1.1 2 V7.6 Q1.1 8.5 2 8.5 H6 Q6.9 8.5 6.9 7.6 V2" stroke="#fff" stroke-width="1.1" fill="none"/><rect x="2.7" y="3" width="2.6" height="4" fill="#fff" opacity="0.55"/></svg><svg style="position:absolute;left:695.57px;top:368.97px;width:2.16px;height:8.76px;overflow:visible" viewBox="0 0 2.16 8.76" ><circle cx="1.08" cy="1.08" r="1.08" fill="#fff"/><circle cx="1.08" cy="4.38" r="1.08" fill="#fff"/><circle cx="1.08" cy="7.68" r="1.08" fill="#fff"/></svg><div style="position:absolute;left:715px;top:326.2px;width:181px;height:18px;background:#3c404b;border-radius:2px;"></div><span class="t" style="left:773.60px;top:332.39px;font-size:8.2px;color:#f2f2f2;transform:scaleX(0.9871);">Streamen starten</span><div style="position:absolute;left:715px;top:347.6px;width:181px;height:18px;background:#1a1b21;border-radius:2px;"></div><span class="t" style="left:776.00px;top:354.19px;font-size:8.2px;color:#f2f2f2;transform:scaleX(0.9963);">Opname starten</span><div style="position:absolute;left:715px;top:368.8px;width:159.4px;height:18px;background:#3c404b;border-radius:2px;"></div><span class="t" style="left:752.50px;top:375.39px;font-size:8.2px;color:#f2f2f2;transform:scaleX(0.9858);">Virtuele camera starten</span><div style="position:absolute;left:715px;top:390px;width:181px;height:18px;background:#3c404b;border-radius:2px;"></div><span class="t" style="left:781.60px;top:395.69px;font-size:8.2px;color:#f2f2f2;transform:scaleX(0.9917);">Studiomodus</span><div style="position:absolute;left:715px;top:411.2px;width:181px;height:18px;background:#3c404b;border-radius:2px;"></div><span class="t" style="left:784.60px;top:416.89px;font-size:8.2px;color:#f2f2f2;transform:scaleX(0.9995);">Instellingen</span><div style="position:absolute;left:715px;top:432.4px;width:181px;height:18px;background:#3c404b;border-radius:2px;"></div><span class="t" style="left:789.80px;top:438.09px;font-size:8.2px;color:#f2f2f2;transform:scaleX(0.9934);">Afsluiten</span><div style="position:absolute;left:877.3px;top:368.8px;width:18.7px;height:18px;background:#3c404b;border-radius:2px;"></div><svg style="position:absolute;left:882.3px;top:373.4px;width:8.8px;height:8.8px;overflow:visible" viewBox="0 0 10 10" ><g transform="translate(5 5)"><rect x="-1.1" y="-5" width="2.2" height="2.4" rx="0.4" transform="rotate(0)" fill="#fff"/><rect x="-1.1" y="-5" width="2.2" height="2.4" rx="0.4" transform="rotate(45)" fill="#fff"/><rect x="-1.1" y="-5" width="2.2" height="2.4" rx="0.4" transform="rotate(90)" fill="#fff"/><rect x="-1.1" y="-5" width="2.2" height="2.4" rx="0.4" transform="rotate(135)" fill="#fff"/><rect x="-1.1" y="-5" width="2.2" height="2.4" rx="0.4" transform="rotate(180)" fill="#fff"/><rect x="-1.1" y="-5" width="2.2" height="2.4" rx="0.4" transform="rotate(225)" fill="#fff"/><rect x="-1.1" y="-5" width="2.2" height="2.4" rx="0.4" transform="rotate(270)" fill="#fff"/><rect x="-1.1" y="-5" width="2.2" height="2.4" rx="0.4" transform="rotate(315)" fill="#fff"/><circle r="3.7" fill="#fff"/><circle r="1.9" fill="#3c404b"/></g></svg><div style="position:absolute;left:649.7px;top:458.5px;width:0.7px;height:19px;background:#15161b;"></div><div style="position:absolute;left:668.3px;top:458.5px;width:0.7px;height:19px;background:#15161b;"></div><div style="position:absolute;left:722.2px;top:458.5px;width:0.7px;height:19px;background:#15161b;"></div><div style="position:absolute;left:773.6px;top:458.5px;width:0.7px;height:19px;background:#15161b;"></div><div style="position:absolute;left:825.4px;top:458.5px;width:0.7px;height:19px;background:#15161b;"></div><svg style="position:absolute;left:654.6px;top:465.4px;width:8.4px;height:8px" viewBox="0 0 8 8"><g fill="#3c3f49"><rect x="0" y="5.6" width="1.5" height="2.4"/><rect x="2.1" y="3.8" width="1.5" height="4.2"/><rect x="4.2" y="2" width="1.5" height="6"/><rect x="6.3" y="0" width="1.5" height="8"/></g></svg><svg style="position:absolute;left:674.5px;top:466px;width:8px;height:6px" viewBox="0 0 8 6"><circle cx="4" cy="3" r="1.5" fill="#5d606a"/><path d="M1.6 0.6 A3.4 3.4 0 0 0 1.6 5.4 M6.4 0.6 A3.4 3.4 0 0 1 6.4 5.4" stroke="#5d606a" stroke-width="0.8" fill="none"/></svg><span class="t" style="left:686.80px;top:466.07px;font-size:7.8px;color:#5d606a;transform:scaleX(0.9948);">00:00:00</span><div style="position:absolute;left:727.6px;top:465.2px;width:7.6px;height:7.6px;background:#50535d;border-radius:3.8px;"></div><span class="t" style="left:740.00px;top:466.07px;font-size:7.8px;color:#5d606a;transform:scaleX(0.9882);">00:00:00</span><span class="t" style="left:782.60px;top:466.07px;font-size:7.8px;color:#f2f2f2;transform:scaleX(0.9332);">CPU: 1.5%</span><span class="t" style="left:830.80px;top:466.07px;font-size:7.8px;color:#f2f2f2;transform:scaleX(0.9609);">60.00 / 60.00 FPS</span><div style="position:absolute;left:0;top:477.5px;width:900px;height:28.5px;background:linear-gradient(90deg,#f4e8e0 0%,#f3e9e1 20%,#dff0ea 27%,#cdf0ea 36%,#dcefe2 46%,#eee9dc 55%,#f3e2d6 66%,#f4dfd2 76%,#d9ebe2 86%,#c2ebe5 100%)"></div><svg style="position:absolute;left:13.2px;top:485.4px;width:13px;height:12px" viewBox="0 0 13 12"><defs><linearGradient id="sun0" x1="0" y1="0" x2="1" y2="1"><stop offset="0" stop-color="#ffb62e"/><stop offset="1" stop-color="#ee6a12"/></linearGradient></defs><circle cx="5.8" cy="6" r="5.6" fill="url(#sun0)"/><path d="M5.2 9.6 A1.9 1.9 0 0 1 6 6.2 A2.3 2.3 0 0 1 10.2 6.4 A1.7 1.7 0 0 1 11.4 9.6 Z" fill="#c9dcf2"/></svg><span class="t" style="left:30.00px;top:484.16px;font-size:7.6px;color:#1c1c1c;transform:scaleX(0.8074);">13°C</span><span class="t" style="left:30.00px;top:493.56px;font-size:7.6px;color:#666;transform:scaleX(0.9397);">Meestal zonnig</span><svg style="position:absolute;left:188px;top:485.6px;width:13.6px;height:13.6px" viewBox="0 0 14 14"><defs><linearGradient id="wl0" x1="0" y1="0" x2="1" y2="1"><stop offset="0" stop-color="#55c6f5"/><stop offset="1" stop-color="#0a6fd0"/></linearGradient></defs><g fill="url(#wl0)"><rect x="0" y="0" width="6.6" height="6.6" rx="0.4"/><rect x="7.3" y="0" width="6.6" height="6.6" rx="0.4"/><rect x="0" y="7.3" width="6.6" height="6.6" rx="0.4"/><rect x="7.3" y="7.3" width="6.6" height="6.6" rx="0.4"/></g></svg><div style="position:absolute;left:210.6px;top:483px;width:126.6px;height:18.2px;background:rgba(255,255,255,0.72);border-radius:9.1px;"></div><svg style="position:absolute;left:216.2px;top:488px;width:8.6px;height:8.6px" viewBox="0 0 9 9"><circle cx="3.6" cy="3.6" r="2.9" fill="none" stroke="#222" stroke-width="1"/><path d="M5.8 5.8 L8.4 8.4" stroke="#222" stroke-width="1.1"/></svg><span class="t" style="left:230.80px;top:488.88px;font-size:8px;color:#555;transform:scaleX(1.0005);">Zoeken</span><svg style="position:absolute;left:344.6px;top:486.6px;width:13.4px;height:12px" viewBox="0 0 13.4 12"><rect x="3.4" y="0.4" width="9.6" height="8" rx="1" fill="#d9d9d9" stroke="#f4f4f4" stroke-width="0.6"/><rect x="0.4" y="3" width="9.6" height="8.4" rx="1" fill="#1c1c1c"/><rect x="3" y="3" width="7" height="5.6" fill="#c8c8c8"/><rect x="0.4" y="3" width="2.8" height="8.4" rx="0.8" fill="#1c1c1c"/><rect x="0.4" y="8.4" width="9.6" height="3" rx="0.8" fill="#1c1c1c"/></svg><svg style="position:absolute;left:371px;top:485.6px;width:14.6px;height:12.6px" viewBox="0 0 14.6 12.6"><path d="M0.3 1.2 Q0.3 0.3 1.2 0.3 H4.6 L6 1.8 H13.4 Q14.3 1.8 14.3 2.7 V11 Q14.3 11.9 13.4 11.9 H1.2 Q0.3 11.9 0.3 11 Z" fill="#f7b92a"/><path d="M0.3 3.4 H14.3 V11 Q14.3 11.9 13.4 11.9 H1.2 Q0.3 11.9 0.3 11 Z" fill="#fcd462"/><rect x="3.2" y="8.4" width="8.2" height="3.5" fill="#2f7fd8"/><rect x="3.2" y="8.4" width="8.2" height="1.2" fill="#1a5fb4"/></svg><div style="position:absolute;left:376.4px;top:501.6px;width:3.4px;height:1px;border-radius:1px;background:#777"></div><svg style="position:absolute;left:396.6px;top:486px;width:14.6px;height:13px" viewBox="0 0 14.6 13"><circle cx="11.6" cy="2.6" r="1.7" fill="#5b5fc7"/><rect x="9.2" y="4.8" width="5.2" height="6" rx="1.6" fill="#5b5fc7"/><circle cx="7.4" cy="2" r="2.1" fill="#7b83eb"/><rect x="4" y="4.6" width="7.4" height="7.8" rx="1.8" fill="#7b83eb"/><rect x="0.2" y="3.2" width="7" height="7" rx="0.9" fill="#4b53bc"/><path d="M2 5 H5.4 M3.7 5 V8.8" stroke="#fff" stroke-width="0.9"/></svg><svg style="position:absolute;left:422.2px;top:485.6px;width:14.4px;height:14.4px" viewBox="0 0 14.4 14.4"><defs><linearGradient id="eg0" x1="0" y1="0" x2="1" y2="0.6"><stop offset="0" stop-color="#1b6ec9"/><stop offset="0.6" stop-color="#2aa7d8"/><stop offset="1" stop-color="#5fd35a"/></linearGradient></defs><circle cx="7.2" cy="7.2" r="7" fill="url(#eg0)"/><path d="M1 9 A6.4 6.4 0 0 0 12.6 11 A4.6 4.6 0 0 1 5.4 8.4 Q5 6 7.4 5.6 Q4 4 1 9 Z" fill="#0f4fa8"/><path d="M6.6 8.4 A2.6 2.6 0 0 0 11.8 8.4 Q12 6.4 9.2 6.2 Q6.8 6.4 6.6 8.4 Z" fill="#e6f4f1"/></svg><svg style="position:absolute;left:447.8px;top:485.4px;width:14.6px;height:14.4px" viewBox="0 0 14.6 14.4"><path d="M4.6 3.4 V2 Q4.6 0.5 6 0.5 H8.6 Q10 0.5 10 2 V3.4" fill="none" stroke="#1c5cb0" stroke-width="1"/><rect x="0.4" y="3" width="13.8" height="11" rx="1.6" fill="#174f9e"/><rect x="0.4" y="3" width="13.8" height="3" rx="1.6" fill="#1f62b8"/><rect x="4.2" y="5.6" width="2.7" height="2.7" fill="#f25022"/><rect x="7.5" y="5.6" width="2.7" height="2.7" fill="#7fba00"/><rect x="4.2" y="8.9" width="2.7" height="2.7" fill="#00a4ef"/><rect x="7.5" y="8.9" width="2.7" height="2.7" fill="#ffb900"/></svg><svg style="position:absolute;left:473.8px;top:486px;width:14.4px;height:13.4px" viewBox="0 0 14.4 13.4"><path d="M0.3 0.8 L7.2 4 L14.1 0.8 V10.2 L7.2 13.2 L0.3 10.2 Z" fill="#c4212f"/><path d="M2.9 4.6 L7.2 6.7 L11.5 4.6 V8.8 L7.2 10.8 L2.9 8.8 Z" fill="#f3e6dc"/></svg><svg style="position:absolute;left:499.6px;top:485.6px;width:14.4px;height:14.4px" viewBox="-7.2 -7.2 14.4 14.4"><circle r="7" fill="#fbc116"/><path d="M0 0 L-6.06 -3.5 A7 7 0 0 1 6.06 -3.5 Z" fill="#e33b2e"/><path d="M0 0 L-6.06 -3.5 A7 7 0 0 0 0 7 L3 1 Z" fill="#2da94f"/><path d="M-6.06 -3.5 A7 7 0 0 1 6.06 -3.5 H0 Z" fill="#e33b2e"/><circle r="3.3" fill="#fff"/><circle r="2.6" fill="#3f86f4"/></svg><div style="position:absolute;left:505.2px;top:501.6px;width:3.4px;height:1px;border-radius:1px;background:#777"></div><svg style="position:absolute;left:525.2px;top:485.6px;width:14.4px;height:14.4px" viewBox="-7.2 -7.2 14.4 14.4"><circle r="6.4" fill="none" stroke="#e0435c" stroke-width="1.3"/><ellipse rx="3" ry="5.2" fill="none" stroke="#e0435c" stroke-width="1.1"/></svg><div style="position:absolute;left:530.8px;top:501.6px;width:3.4px;height:1px;border-radius:1px;background:#777"></div><svg style="position:absolute;left:551.2px;top:485.4px;width:14.4px;height:14.4px" viewBox="0 0 8 8"><rect width="8" height="8" fill="#4ea53a"/><rect x="1.4" y="1.6" width="1.9" height="1.9" fill="#0c1a0a"/><rect x="4.7" y="1.6" width="1.9" height="1.9" fill="#0c1a0a"/><rect x="3.1" y="3.4" width="1.8" height="2.6" fill="#0c1a0a"/><rect x="2.2" y="4.4" width="3.6" height="1.8" fill="#0c1a0a"/><rect x="2.2" y="6" width="1" height="0.9" fill="#0c1a0a"/><rect x="4.8" y="6" width="1" height="0.9" fill="#0c1a0a"/></svg><svg style="position:absolute;left:576.8px;top:485.4px;width:14.8px;height:14.8px" viewBox="0 0 14.8 14.8"><path d="M1 14 L1.9 10.6 A6.4 6.4 0 1 1 4.4 13 Z" fill="#f4f7f2" stroke="#1f8f54" stroke-width="1.5"/><path d="M5 4.6 Q5.8 4 6.2 5 L6.6 6 Q6.7 6.4 6.2 6.9 Q7 8.4 8.6 9 Q9.2 8.3 9.6 8.5 L10.6 9 Q11.2 9.4 10.6 10.2 Q9.6 11.2 7.8 10.2 Q5.6 9 4.8 7 Q4.2 5.4 5 4.6 Z" fill="#24955c"/></svg><div style="position:absolute;left:582.6px;top:501.6px;width:3.4px;height:1px;border-radius:1px;background:#777"></div><svg style="position:absolute;left:604.4px;top:486px;width:12.4px;height:13px" viewBox="0 0 12.4 13"><path d="M10.8 0.8 L2.4 11.6" stroke="#222" stroke-width="1.3"/><path d="M7.2 0.6 L3 5.2 H5.6 L2.6 9.6" stroke="#39a86a" stroke-width="1.2" fill="none"/><path d="M0.6 8.8 H3 M0.6 10.6 H2.2" stroke="#5aa0d8" stroke-width="0.8"/></svg><div style="position:absolute;left:608.6px;top:501.6px;width:3.4px;height:1px;border-radius:1px;background:#777"></div><svg style="position:absolute;left:628.6px;top:485px;width:14.8px;height:14.8px" viewBox="0 0 14.8 14.8"><defs><linearGradient id="orb0" x1="0" y1="0" x2="1" y2="1"><stop offset="0" stop-color="#4aa8f0"/><stop offset="0.55" stop-color="#7a5be0"/><stop offset="1" stop-color="#c66ad8"/></linearGradient></defs><circle cx="7.4" cy="7.4" r="7.2" fill="url(#orb0)"/><path d="M4.6 3.6 L7.4 11.4 L10.2 3.6 Q7.4 6 4.6 3.6 Z" fill="#3a4a8a" opacity="0.75"/><path d="M7.4 2 V7" stroke="#cfe0ff" stroke-width="0.8"/></svg><div style="position:absolute;left:634.4px;top:501.6px;width:3.4px;height:1px;border-radius:1px;background:#777"></div><div style="position:absolute;left:651px;top:481.4px;width:22px;height:22px;border-radius:2.5px;background:rgba(255,255,255,0.55)"></div><svg style="position:absolute;left:655.4px;top:485.2px;width:13.4px;height:13.4px" viewBox="-10 -10 20 20"><circle r="10" fill="#18181a"/><circle r="8.7" fill="none" stroke="#cfcfcf" stroke-width="0.7"/><circle cx="0" cy="-4.1" r="3.5" fill="none" stroke="#e4e4e4" stroke-width="1.5" stroke-dasharray="15.5 30" stroke-dashoffset="-2" transform="rotate(0)"/><circle cx="0" cy="-4.1" r="3.5" fill="none" stroke="#e4e4e4" stroke-width="1.5" stroke-dasharray="15.5 30" stroke-dashoffset="-2" transform="rotate(120)"/><circle cx="0" cy="-4.1" r="3.5" fill="none" stroke="#e4e4e4" stroke-width="1.5" stroke-dasharray="15.5 30" stroke-dashoffset="-2" transform="rotate(240)"/></svg><div style="position:absolute;left:658px;top:501.2px;width:8.4px;height:1.4px;border-radius:1px;background:#2f6fd6"></div><svg style="position:absolute;left:713.5px;top:489.6px;width:7px;height:4px" viewBox="0 0 7 4"><path d="M0.5 3.6 L3.5 0.6 L6.5 3.6" stroke="#222" stroke-width="0.8" fill="none"/></svg><svg style="position:absolute;left:731.6px;top:488.2px;width:10px;height:7px" viewBox="0 0 10 7"><path d="M2.4 6.4 A1.9 1.9 0 0 1 2.2 2.7 A2.9 2.9 0 0 1 7.6 2.5 A2 2 0 0 1 7.8 6.4 Z" fill="#d8d4cf" stroke="#444" stroke-width="0.8"/></svg><svg style="position:absolute;left:751.6px;top:487px;width:6.4px;height:10px" viewBox="0 0 6.4 10"><rect x="1.8" y="0.3" width="2.8" height="5.6" rx="1.4" fill="#6c8fe0" stroke="#3c62c8" stroke-width="0.5"/><path d="M0.5 4.6 A2.7 2.7 0 0 0 5.9 4.6 M3.2 7.4 V9.4" stroke="#3c62c8" stroke-width="0.8" fill="none"/></svg><span class="t" style="left:770.60px;top:484.34px;font-size:7.4px;color:#222;transform:scaleX(0.8921);">NLD</span><span class="t" style="left:770.40px;top:494.14px;font-size:7.4px;color:#222;transform:scaleX(0.8866);">INTL</span><svg style="position:absolute;left:795.4px;top:488px;width:9.6px;height:7.6px" viewBox="0 0 10 8"><g fill="none" stroke="#222" stroke-width="0.85"><path d="M0.6 2.8 A6.2 6.2 0 0 1 9.4 2.8"/><path d="M2.1 4.4 A4.1 4.1 0 0 1 7.9 4.4"/><path d="M3.5 5.9 A2.1 2.1 0 0 1 6.5 5.9"/></g><circle cx="5" cy="7.1" r="0.7" fill="#222"/></svg><svg style="position:absolute;left:809px;top:488px;width:10px;height:8px" viewBox="0 0 10 8"><path d="M0.5 2.8 H2 L4 1 V7 L2 5.2 H0.5 Z" fill="none" stroke="#222" stroke-width="0.7"/><g fill="none" stroke="#222" stroke-width="0.7"><path d="M5.2 2.8 A1.8 1.8 0 0 1 5.2 5.2"/><path d="M6.4 1.8 A3.2 3.2 0 0 1 6.4 6.2"/><path d="M7.6 0.8 A4.6 4.6 0 0 1 7.6 7.2"/></g></svg><svg style="position:absolute;left:823px;top:487.6px;width:10.4px;height:8.4px" viewBox="0 0 10.4 8.4"><rect x="0.4" y="2.4" width="8.6" height="5" rx="1" fill="#222"/><rect x="9.2" y="3.8" width="1" height="2.2" fill="#222"/><path d="M1 2.6 V1 H2.6 M2.2 0.4 L3.6 1.6 L2.2 2.6" stroke="#222" stroke-width="0.7" fill="none"/></svg><span class="t" style="left:857.60px;top:484.06px;font-size:7.6px;color:#222;transform:scaleX(0.9256);">12:32</span><span class="t" style="left:842.40px;top:493.86px;font-size:7.6px;color:#222;transform:scaleX(0.9473);">1-10-2025</span><svg style="position:absolute;left:880px;top:487.6px;width:8.6px;height:9.6px" viewBox="0 0 8.6 9.6"><path d="M1 6.8 Q2 5.6 2 3.6 A2.3 2.3 0 0 1 6.6 3.6 Q6.6 5.6 7.6 6.8 Z" fill="#222"/><rect x="3.4" y="7.4" width="1.8" height="1.4" rx="0.6" fill="#222"/><path d="M5.4 0.6 H7.6 L5.6 2.4 H7.8" stroke="#222" stroke-width="0.6" fill="none"/></svg><svg style="position:absolute;left:781px;top:355px;width:34px;height:34px;overflow:visible" viewBox="0 0 34 34"><path d="M6 20 Q5.4 9.6 14 8.9 Q20 7.4 26.6 9.6 Q32.6 12.6 32 22 L32.2 30.6 Q29.6 30 28.4 26 L10.6 26 Q9.6 30 6.6 30.8 Q5.6 26 6 20 Z" fill="#23323c" opacity="0.55" transform="translate(0.4 0.8)"/><path d="M1.4 1.9 L12.6 11.2 L9.4 16.4 L4.2 17.4 L2.8 14.6 Z" fill="#a6e0e9"/><path d="M1.4 1.9 L7.4 16.4" stroke="#7cc6d4" stroke-width="0.8" fill="none"/><path d="M6.2 20 Q5.6 9.8 14 9 Q20 7.6 26.4 9.8 Q32 12.6 31.6 22 L31.8 30.2 Q29.4 29.4 28.2 25.4 L27.4 20.4 Q19 17.4 11.2 20.6 L10.6 25.6 Q9.6 29.6 6.8 30.4 Q5.8 26 6.2 20 Z" fill="#8fd6e3"/><path d="M10.4 13 Q14 10.6 19 10.6" stroke="#b9ebf2" stroke-width="1.2" fill="none" opacity="0.8"/><path d="M11.2 20.6 Q19 16.6 27.4 20.4 L27.2 28 H11 Z" fill="#e6f5f8"/><path d="M12.6 23.4 Q14.4 21.6 16.2 23.4 M21.6 23.4 Q23.4 21.6 25.2 23.4" stroke="#4f8ea8" stroke-width="0.9" fill="none"/><path d="M17.4 25.4 H20.6" stroke="#e48a9a" stroke-width="0.8"/><rect x="8.8" y="27" width="16.6" height="4.6" rx="1.6" fill="#15161a"/><rect x="9.4" y="28.8" width="3.4" height="2.2" rx="1" fill="#fff"/><rect x="21.8" y="28.8" width="3.4" height="2.2" rx="1" fill="#fff"/><rect x="13.8" y="27.8" width="6.8" height="1.5" rx="0.6" fill="#bfe6ee"/><circle cx="28.2" cy="9.8" r="1.5" fill="#c0304c"/></svg></div></div><span class="t" style="left:6.30px;top:268.83px;font-size:7.2px;color:#80838d;transform:scaleX(0.9034);">45%</span><span class="t" style="left:28.00px;top:268.83px;font-size:7.2px;color:#80838d;transform:scaleX(0.9220);">Schaal naar het venster</span><svg style="position:absolute;left:108px;top:270.9px;width:5px;height:3px;overflow:visible" viewBox="0 0 5 3" ><path d="M0 0 H5 L2.5 3 Z" fill="#fff"/></svg><div style="position:absolute;left:0px;top:280px;width:898.6px;height:25px;background:#272a33;border-radius:3px;"></div><svg style="position:absolute;left:7.2px;top:288px;width:6.84px;height:8.46px;overflow:visible" viewBox="0 0 7.6 9.4" ><rect x="2.1" y="0" width="3.4" height="6" rx="1.7" fill="#fff"/><path d="M0.7 4.2 A3.1 3.1 0 0 0 6.9 4.2" fill="none" stroke="#fff" stroke-width="0.9"/><rect x="3.3" y="7" width="1" height="1.6" fill="#fff"/><rect x="1.6" y="8.4" width="4.4" height="0.9" fill="#fff"/></svg><span class="t" style="left:22.00px;top:289.19px;font-size:8.2px;color:#f2f2f2;transform:scaleX(1.0454);">fvbjnbfjf</span><div style="position:absolute;left:125px;top:282.8px;width:81px;height:19px;background:#3c404b;border-radius:2px;"></div><svg style="position:absolute;left:132.6px;top:288px;width:8.8px;height:8.8px;overflow:visible" viewBox="0 0 10 10" ><g transform="translate(5 5)"><rect x="-1.1" y="-5" width="2.2" height="2.4" rx="0.4" transform="rotate(0)" fill="#fff"/><rect x="-1.1" y="-5" width="2.2" height="2.4" rx="0.4" transform="rotate(45)" fill="#fff"/><rect x="-1.1" y="-5" width="2.2" height="2.4" rx="0.4" transform="rotate(90)" fill="#fff"/><rect x="-1.1" y="-5" width="2.2" height="2.4" rx="0.4" transform="rotate(135)" fill="#fff"/><rect x="-1.1" y="-5" width="2.2" height="2.4" rx="0.4" transform="rotate(180)" fill="#fff"/><rect x="-1.1" y="-5" width="2.2" height="2.4" rx="0.4" transform="rotate(225)" fill="#fff"/><rect x="-1.1" y="-5" width="2.2" height="2.4" rx="0.4" transform="rotate(270)" fill="#fff"/><rect x="-1.1" y="-5" width="2.2" height="2.4" rx="0.4" transform="rotate(315)" fill="#fff"/><circle r="3.7" fill="#fff"/><circle r="1.9" fill="#3c404b"/></g></svg><span class="t" style="left:142.70px;top:288.99px;font-size:8.2px;color:#f2f2f2;transform:scaleX(0.9565);">Eigenschappen</span><div style="position:absolute;left:209.3px;top:282.8px;width:48.4px;height:19px;background:#3c404b;border-radius:2px;"></div><svg style="position:absolute;left:217.2px;top:288.3px;width:8px;height:8.4px;overflow:visible" viewBox="0 0 8 8.4" ><rect x="0.5" y="0.5" width="7" height="7.4" rx="1.2" fill="none" stroke="#fff" stroke-width="1"/><rect x="1.4" y="1.4" width="2.6" height="5.6" fill="#fff"/><rect x="4" y="1.4" width="2.6" height="5.6" fill="#fff" opacity="0.35"/></svg><span class="t" style="left:227.30px;top:288.99px;font-size:8.2px;color:#f2f2f2;transform:scaleX(0.9598);">Filters</span><span class="t" style="left:266.70px;top:288.99px;font-size:8.2px;color:#f2f2f2;transform:scaleX(0.9719);">Apparaat</span><div style="position:absolute;left:302.7px;top:282.8px;width:353px;height:19px;background:#3c404b;border-radius:2px;"></div><span class="t" style="left:309.50px;top:288.99px;font-size:8.2px;color:#f2f2f2;transform:scaleX(0.9618);">Mikrofon (JBL Quantum350 Wireless)</span><svg style="position:absolute;left:645.2px;top:291.4px;width:5.4px;height:3px;overflow:visible" viewBox="0 0 5.4 3" ><path d="M0 0 H5.4 L2.7 3 Z" fill="#fff"/></svg><div style="position:absolute;left:0px;top:308px;width:176px;height:150.4px;background:#272a33;border-radius:2.5px;box-shadow:inset 0 0 0 0.8px #30333d;"></div><div style="position:absolute;left:0px;top:308px;width:176px;height:14.8px;background:#363944;border-radius:2.5px;border-bottom-left-radius:0;border-bottom-right-radius:0;"></div><span class="t" style="left:4.50px;top:312.49px;font-size:8.2px;color:#fff;transform:scaleX(0.8889);font-weight:bold;">Scènes</span><svg style="position:absolute;left:164.4px;top:310.5px;width:10.1px;height:9.6px;overflow:visible" viewBox="0 0 10.1 9.6" ><rect x="0.45" y="0.45" width="6.3" height="5" rx="0.9" fill="none" stroke="#fff" stroke-width="0.9"/><rect x="0.45" y="0.45" width="6.3" height="1.5" rx="0.5" fill="#fff"/><rect x="3.15" y="3.85" width="6.5" height="5.3" rx="0.9" fill="#363944" stroke="#fff" stroke-width="0.9"/><rect x="3.15" y="3.85" width="6.5" height="1.6" rx="0.5" fill="#fff"/></svg><div style="position:absolute;left:179px;top:308px;width:176.5px;height:150.4px;background:#272a33;border-radius:2.5px;box-shadow:inset 0 0 0 0.8px #30333d;"></div><div style="position:absolute;left:179px;top:308px;width:176.5px;height:14.8px;background:#363944;border-radius:2.5px;border-bottom-left-radius:0;border-bottom-right-radius:0;"></div><span class="t" style="left:183.40px;top:312.49px;font-size:8.2px;color:#fff;transform:scaleX(0.9622);font-weight:bold;">Bronnen</span><svg style="position:absolute;left:343.9px;top:310.5px;width:10.1px;height:9.6px;overflow:visible" viewBox="0 0 10.1 9.6" ><rect x="0.45" y="0.45" width="6.3" height="5" rx="0.9" fill="none" stroke="#fff" stroke-width="0.9"/><rect x="0.45" y="0.45" width="6.3" height="1.5" rx="0.5" fill="#fff"/><rect x="3.15" y="3.85" width="6.5" height="5.3" rx="0.9" fill="#363944" stroke="#fff" stroke-width="0.9"/><rect x="3.15" y="3.85" width="6.5" height="1.6" rx="0.5" fill="#fff"/></svg><div style="position:absolute;left:358.3px;top:308px;width:227.7px;height:150.4px;background:#272a33;border-radius:2.5px;box-shadow:inset 0 0 0 0.8px #30333d;"></div><div style="position:absolute;left:358.3px;top:308px;width:227.7px;height:14.8px;background:#363944;border-radius:2.5px;border-bottom-left-radius:0;border-bottom-right-radius:0;"></div><span class="t" style="left:362.50px;top:312.49px;font-size:8.2px;color:#fff;transform:scaleX(0.9745);font-weight:bold;">Audiomixer</span><svg style="position:absolute;left:574.4px;top:310.5px;width:10.1px;height:9.6px;overflow:visible" viewBox="0 0 10.1 9.6" ><rect x="0.45" y="0.45" width="6.3" height="5" rx="0.9" fill="none" stroke="#fff" stroke-width="0.9"/><rect x="0.45" y="0.45" width="6.3" height="1.5" rx="0.5" fill="#fff"/><rect x="3.15" y="3.85" width="6.5" height="5.3" rx="0.9" fill="#363944" stroke="#fff" stroke-width="0.9"/><rect x="3.15" y="3.85" width="6.5" height="1.6" rx="0.5" fill="#fff"/></svg><div style="position:absolute;left:589.3px;top:308px;width:118.90000000000009px;height:150.4px;background:#272a33;border-radius:2.5px;box-shadow:inset 0 0 0 0.8px #30333d;"></div><div style="position:absolute;left:589.3px;top:308px;width:118.90000000000009px;height:14.8px;background:#363944;border-radius:2.5px;border-bottom-left-radius:0;border-bottom-right-radius:0;"></div><span class="t" style="left:593.30px;top:312.49px;font-size:8.2px;color:#fff;transform:scaleX(0.9404);font-weight:bold;">Scène-overgangen</span><svg style="position:absolute;left:696.6px;top:310.5px;width:10.1px;height:9.6px;overflow:visible" viewBox="0 0 10.1 9.6" ><rect x="0.45" y="0.45" width="6.3" height="5" rx="0.9" fill="none" stroke="#fff" stroke-width="0.9"/><rect x="0.45" y="0.45" width="6.3" height="1.5" rx="0.5" fill="#fff"/><rect x="3.15" y="3.85" width="6.5" height="5.3" rx="0.9" fill="#363944" stroke="#fff" stroke-width="0.9"/><rect x="3.15" y="3.85" width="6.5" height="1.6" rx="0.5" fill="#fff"/></svg><div style="position:absolute;left:710.7px;top:308px;width:189.29999999999995px;height:150.4px;background:#272a33;border-radius:2.5px;box-shadow:inset 0 0 0 0.8px #30333d;"></div><div style="position:absolute;left:710.7px;top:308px;width:189.29999999999995px;height:14.8px;background:#363944;border-radius:2.5px;border-bottom-left-radius:0;border-bottom-right-radius:0;"></div><span class="t" style="left:715.50px;top:312.49px;font-size:8.2px;color:#fff;transform:scaleX(0.9723);font-weight:bold;">Bedieningselementen</span><svg style="position:absolute;left:887.8px;top:310.5px;width:10.1px;height:9.6px;overflow:visible" viewBox="0 0 10.1 9.6" ><rect x="0.45" y="0.45" width="6.3" height="5" rx="0.9" fill="none" stroke="#fff" stroke-width="0.9"/><rect x="0.45" y="0.45" width="6.3" height="1.5" rx="0.5" fill="#fff"/><rect x="3.15" y="3.85" width="6.5" height="5.3" rx="0.9" fill="#363944" stroke="#fff" stroke-width="0.9"/><rect x="3.15" y="3.85" width="6.5" height="1.6" rx="0.5" fill="#fff"/></svg><div style="position:absolute;left:2px;top:324.6px;width:172px;height:17.2px;background:#284cb8;border-radius:1.5px;"></div><span class="t" style="left:6.30px;top:329.99px;font-size:8.2px;color:#f2f2f2;transform:scaleX(0.8915);">Scène</span><div style="position:absolute;left:3.1px;top:442px;width:14.2px;height:13.8px;background:#363944;border-radius:1.5px;"></div><div style="position:absolute;left:20.2px;top:442px;width:14.2px;height:13.8px;background:#363944;border-radius:1.5px;"></div><div style="position:absolute;left:40.1px;top:442px;width:14.2px;height:13.8px;background:#363944;border-radius:1.5px;"></div><div style="position:absolute;left:61px;top:442px;width:14.2px;height:13.8px;background:#363944;border-radius:1.5px;"></div><div style="position:absolute;left:77.8px;top:442px;width:14.2px;height:13.8px;background:#363944;border-radius:1.5px;"></div><svg style="position:absolute;left:6.2px;top:445px;width:8px;height:8px;overflow:visible" viewBox="0 0 8 8" ><path d="M4 0.3 V7.7 M0.3 4 H7.7" stroke="#fff" stroke-width="1.3" fill="none"/></svg><svg style="position:absolute;left:23.3px;top:444.4px;width:8px;height:9px;overflow:visible" viewBox="0 0 8 9" ><path d="M0 1.5 H8" stroke="#fff" stroke-width="1"/><path d="M2.8 1.3 V0.5 H5.2 V1.3" stroke="#fff" stroke-width="0.9" fill="none"/><path d="M1.1 2 V7.6 Q1.1 8.5 2 8.5 H6 Q6.9 8.5 6.9 7.6 V2" stroke="#fff" stroke-width="1.1" fill="none"/><rect x="2.7" y="3" width="2.6" height="4" fill="#fff" opacity="0.55"/></svg><svg style="position:absolute;left:43.3px;top:444.8px;width:8px;height:8.4px;overflow:visible" viewBox="0 0 8 8.4" ><rect x="0.5" y="0.5" width="7" height="7.4" rx="1.2" fill="none" stroke="#fff" stroke-width="1"/><rect x="1.4" y="1.4" width="2.6" height="5.6" fill="#fff"/><rect x="4" y="1.4" width="2.6" height="5.6" fill="#fff" opacity="0.35"/></svg><svg style="position:absolute;left:64.1px;top:446.8px;width:8px;height:4.4px;overflow:visible" viewBox="0 0 8 4.4" ><path d="M0.5 4 L4 0.6 L7.5 4" stroke="#fff" stroke-width="1.1" fill="none"/></svg><svg style="position:absolute;left:80.9px;top:447px;width:8px;height:4.4px;overflow:visible" viewBox="0 0 8 4.4" ><path d="M0.5 0.4 L4 3.8 L7.5 0.4" stroke="#fff" stroke-width="1.1" fill="none"/></svg><div style="position:absolute;left:180.7px;top:342.9px;width:166.5px;height:18.8px;background:#284cb8;border-radius:1.5px;"></div><svg style="position:absolute;left:185px;top:328.8px;width:9.975px;height:9.450000000000001px;overflow:visible" viewBox="0 0 9.5 9" ><path d="M0 3 H2 L4.6 0.6 V8.4 L2 6 H0 Z" fill="#fff"/><path d="M5.8 2.6 A2.4 2.4 0 0 1 5.8 6.4" fill="none" stroke="#fff" stroke-width="1"/><path d="M7 0.9 A4.4 4.4 0 0 1 7 8.1" fill="none" stroke="#fff" stroke-width="1"/></svg><span class="t" style="left:195.60px;top:330.69px;font-size:8.2px;color:#f2f2f2;transform:scaleX(0.9929);">gnk;lbnkl</span><svg style="position:absolute;left:315.6px;top:329.3px;width:9.6px;height:7.8px;overflow:visible" viewBox="0 0 9.6 7.8" ><path d="M0 3.9 C1.6 -0.2 8 -0.2 9.6 3.9 C8 8 1.6 8 0 3.9 Z" fill="#fff"/><circle cx="4.8" cy="3.9" r="1.85" fill="#272a33"/><circle cx="4.8" cy="3.9" r="0.95" fill="#fff"/></svg><svg style="position:absolute;left:331.6px;top:329.3px;width:7.4px;height:8.7px;overflow:visible" viewBox="0 0 7.4 8.7" ><path d="M1.6 3.4 V2.5 A2 2 0 0 1 5.7 2.5 V4.4" fill="none" stroke="#9b9b9b" stroke-width="1.1"/><rect x="0.1" y="4.3" width="7.2" height="4.4" rx="0.5" fill="#9b9b9b"/></svg><svg style="position:absolute;left:186.2px;top:347.5px;width:7.6px;height:9.4px;overflow:visible" viewBox="0 0 7.6 9.4" ><rect x="2.1" y="0" width="3.4" height="6" rx="1.7" fill="#fff"/><path d="M0.7 4.2 A3.1 3.1 0 0 0 6.9 4.2" fill="none" stroke="#fff" stroke-width="0.9"/><rect x="3.3" y="7" width="1" height="1.6" fill="#fff"/><rect x="1.6" y="8.4" width="4.4" height="0.9" fill="#fff"/></svg><span class="t" style="left:195.60px;top:349.49px;font-size:8.2px;color:#f2f2f2;transform:scaleX(1.0277);">fvbjnbfjf</span><svg style="position:absolute;left:315.6px;top:348.1px;width:9.6px;height:7.8px;overflow:visible" viewBox="0 0 9.6 7.8" ><path d="M0 3.9 C1.6 -0.2 8 -0.2 9.6 3.9 C8 8 1.6 8 0 3.9 Z" fill="#fff"/><circle cx="4.8" cy="3.9" r="1.85" fill="#284cb8"/><circle cx="4.8" cy="3.9" r="0.95" fill="#fff"/></svg><svg style="position:absolute;left:331.6px;top:348.1px;width:7.4px;height:8.7px;overflow:visible" viewBox="0 0 7.4 8.7" ><path d="M1.6 3.4 V2.5 A2 2 0 0 1 5.7 2.5 V4.4" fill="none" stroke="#a39c84" stroke-width="1.1"/><rect x="0.1" y="4.3" width="7.2" height="4.4" rx="0.5" fill="#a39c84"/></svg><svg style="position:absolute;left:185.2px;top:366.70000000000005px;width:9.4px;height:8.8px;overflow:visible" viewBox="0 0 9.4 8.8" ><rect x="0.6" y="0.6" width="8.2" height="6.4" rx="1.2" fill="none" stroke="#fff" stroke-width="1.2"/><rect x="2.6" y="7.6" width="4.2" height="1" fill="#fff"/></svg><span class="t" style="left:195.60px;top:368.29px;font-size:8.2px;color:#f2f2f2;transform:scaleX(0.9811);">sdvbhvbh</span><svg style="position:absolute;left:315.6px;top:366.90000000000003px;width:9.6px;height:7.8px;overflow:visible" viewBox="0 0 9.6 7.8" ><path d="M0 3.9 C1.6 -0.2 8 -0.2 9.6 3.9 C8 8 1.6 8 0 3.9 Z" fill="#fff"/><circle cx="4.8" cy="3.9" r="1.85" fill="#272a33"/><circle cx="4.8" cy="3.9" r="0.95" fill="#fff"/></svg><svg style="position:absolute;left:331.6px;top:366.90000000000003px;width:7.4px;height:8.7px;overflow:visible" viewBox="0 0 7.4 8.7" ><path d="M1.6 3.4 V2.5 A2 2 0 0 1 5.7 2.5 V4.4" fill="none" stroke="#9b9b9b" stroke-width="1.1"/><rect x="0.1" y="4.3" width="7.2" height="4.4" rx="0.5" fill="#9b9b9b"/></svg><svg style="position:absolute;left:185.2px;top:385.6px;width:9.4px;height:8.8px;overflow:visible" viewBox="0 0 9.4 8.8" ><rect x="0.6" y="0.6" width="8.2" height="6.4" rx="1.2" fill="none" stroke="#fff" stroke-width="1.2"/><rect x="2.6" y="7.6" width="4.2" height="1" fill="#fff"/></svg><span class="t" style="left:195.60px;top:387.19px;font-size:8.2px;color:#f2f2f2;transform:scaleX(1.0243);">uiuirweuir</span><svg style="position:absolute;left:315.6px;top:385.8px;width:9.6px;height:7.8px;overflow:visible" viewBox="0 0 9.6 7.8" ><path d="M0 3.9 C1.6 -0.2 8 -0.2 9.6 3.9 C8 8 1.6 8 0 3.9 Z" fill="#fff"/><circle cx="4.8" cy="3.9" r="1.85" fill="#272a33"/><circle cx="4.8" cy="3.9" r="0.95" fill="#fff"/></svg><svg style="position:absolute;left:331.6px;top:385.8px;width:7.4px;height:8.7px;overflow:visible" viewBox="0 0 7.4 8.7" ><path d="M1.6 3.4 V2.5 A2 2 0 0 1 5.7 2.5 V4.4" fill="none" stroke="#9b9b9b" stroke-width="1.1"/><rect x="0.1" y="4.3" width="7.2" height="4.4" rx="0.5" fill="#9b9b9b"/></svg><svg style="position:absolute;left:187.8px;top:405.8px;width:3.8px;height:6px;overflow:visible" viewBox="0 0 3.8 6" ><path d="M0 0 L3.8 3 L0 6 Z" fill="#fff"/></svg><svg style="position:absolute;left:199px;top:404.2px;width:9.4px;height:8.8px;overflow:visible" viewBox="0 0 9.4 8.8" ><path d="M0.6 1.4 Q0.6 0.6 1.4 0.6 H3.4 L4.4 1.8 H7.6 Q8.4 1.8 8.4 2.6 V7.4 Q8.4 8.2 7.6 8.2 H1.4 Q0.6 8.2 0.6 7.4 Z" fill="none" stroke="#fff" stroke-width="1.2"/><path d="M2.6 4.2 H9.2 L8 8.2 H1.4 Z" fill="#fff"/></svg><span class="t" style="left:209.00px;top:405.99px;font-size:8.2px;color:#f2f2f2;transform:scaleX(1.0297);">ytfgtfgthtgftg</span><svg style="position:absolute;left:315.6px;top:404.6px;width:9.6px;height:7.8px;overflow:visible" viewBox="0 0 9.6 7.8" ><path d="M0 3.9 C1.6 -0.2 8 -0.2 9.6 3.9 C8 8 1.6 8 0 3.9 Z" fill="#fff"/><circle cx="4.8" cy="3.9" r="1.85" fill="#272a33"/><circle cx="4.8" cy="3.9" r="0.95" fill="#fff"/></svg><svg style="position:absolute;left:331.6px;top:404.6px;width:7.4px;height:8.7px;overflow:visible" viewBox="0 0 7.4 8.7" ><path d="M1.6 3.4 V2.5 A2 2 0 0 1 5.7 2.5 V4.4" fill="none" stroke="#9b9b9b" stroke-width="1.1"/><rect x="0.1" y="4.3" width="7.2" height="4.4" rx="0.5" fill="#9b9b9b"/></svg><svg style="position:absolute;left:185.2px;top:423.1px;width:9px;height:8.4px;overflow:visible" viewBox="0 0 9 8.4" ><path d="M0 2.4 Q0 1.6 0.8 1.6 H2.2 L3 0.3 H6 L6.8 1.6 H8.2 Q9 1.6 9 2.4 V7.4 Q9 8.2 8.2 8.2 H0.8 Q0 8.2 0 7.4 Z" fill="#fff"/><circle cx="4.5" cy="4.8" r="2.2" fill="#272a33"/><circle cx="4.5" cy="4.8" r="1.1" fill="#fff"/></svg><span class="t" style="left:195.60px;top:424.69px;font-size:8.2px;color:#f2f2f2;transform:scaleX(1.0118);">jniojnejn</span><svg style="position:absolute;left:315.6px;top:423.3px;width:9.6px;height:7.8px;overflow:visible" viewBox="0 0 9.6 7.8" ><path d="M0 3.9 C1.6 -0.2 8 -0.2 9.6 3.9 C8 8 1.6 8 0 3.9 Z" fill="#fff"/><circle cx="4.8" cy="3.9" r="1.85" fill="#272a33"/><circle cx="4.8" cy="3.9" r="0.95" fill="#fff"/></svg><svg style="position:absolute;left:331.6px;top:423.3px;width:7.4px;height:8.7px;overflow:visible" viewBox="0 0 7.4 8.7" ><path d="M1.6 3.4 V2.5 A2 2 0 0 1 5.7 2.5 V4.4" fill="none" stroke="#9b9b9b" stroke-width="1.1"/><rect x="0.1" y="4.3" width="7.2" height="4.4" rx="0.5" fill="#9b9b9b"/></svg><div style="position:absolute;left:349px;top:325.5px;width:3.6px;height:95px;background:#3c404b;border-radius:1.8px;"></div><div style="position:absolute;left:182px;top:442px;width:14.2px;height:13.8px;background:#363944;border-radius:1.5px;"></div><div style="position:absolute;left:199px;top:442px;width:14.2px;height:13.8px;background:#363944;border-radius:1.5px;"></div><div style="position:absolute;left:219.3px;top:442px;width:14.2px;height:13.8px;background:#363944;border-radius:1.5px;"></div><div style="position:absolute;left:239.5px;top:442px;width:14.2px;height:13.8px;background:#363944;border-radius:1.5px;"></div><div style="position:absolute;left:256.2px;top:442px;width:14.2px;height:13.8px;background:#363944;border-radius:1.5px;"></div><svg style="position:absolute;left:185.1px;top:445px;width:8px;height:8px;overflow:visible" viewBox="0 0 8 8" ><path d="M4 0.3 V7.7 M0.3 4 H7.7" stroke="#fff" stroke-width="1.3" fill="none"/></svg><svg style="position:absolute;left:202.1px;top:444.4px;width:8px;height:9px;overflow:visible" viewBox="0 0 8 9" ><path d="M0 1.5 H8" stroke="#fff" stroke-width="1"/><path d="M2.8 1.3 V0.5 H5.2 V1.3" stroke="#fff" stroke-width="0.9" fill="none"/><path d="M1.1 2 V7.6 Q1.1 8.5 2 8.5 H6 Q6.9 8.5 6.9 7.6 V2" stroke="#fff" stroke-width="1.1" fill="none"/><rect x="2.7" y="3" width="2.6" height="4" fill="#fff" opacity="0.55"/></svg><svg style="position:absolute;left:222px;top:444.5px;width:8.8px;height:8.8px;overflow:visible" viewBox="0 0 10 10" ><g transform="translate(5 5)"><rect x="-1.1" y="-5" width="2.2" height="2.4" rx="0.4" transform="rotate(0)" fill="#fff"/><rect x="-1.1" y="-5" width="2.2" height="2.4" rx="0.4" transform="rotate(45)" fill="#fff"/><rect x="-1.1" y="-5" width="2.2" height="2.4" rx="0.4" transform="rotate(90)" fill="#fff"/><rect x="-1.1" y="-5" width="2.2" height="2.4" rx="0.4" transform="rotate(135)" fill="#fff"/><rect x="-1.1" y="-5" width="2.2" height="2.4" rx="0.4" transform="rotate(180)" fill="#fff"/><rect x="-1.1" y="-5" width="2.2" height="2.4" rx="0.4" transform="rotate(225)" fill="#fff"/><rect x="-1.1" y="-5" width="2.2" height="2.4" rx="0.4" transform="rotate(270)" fill="#fff"/><rect x="-1.1" y="-5" width="2.2" height="2.4" rx="0.4" transform="rotate(315)" fill="#fff"/><circle r="3.7" fill="#fff"/><circle r="1.9" fill="#363944"/></g></svg><svg style="position:absolute;left:242.6px;top:446.8px;width:8px;height:4.4px;overflow:visible" viewBox="0 0 8 4.4" ><path d="M0.5 4 L4 0.6 L7.5 4" stroke="#fff" stroke-width="1.1" fill="none"/></svg><svg style="position:absolute;left:259.3px;top:447px;width:8px;height:4.4px;overflow:visible" viewBox="0 0 8 4.4" ><path d="M0.5 0.4 L4 3.8 L7.5 0.4" stroke="#fff" stroke-width="1.1" fill="none"/></svg><span class="t" style="left:362.60px;top:326.19px;font-size:8.2px;color:#f2f2f2;transform:scaleX(1.0419);">fvbjnbfjf</span><span class="t" style="left:559.00px;top:325.97px;font-size:7.8px;color:#6d707b;transform:scaleX(0.9846);">0.0 dB</span><div style="position:absolute;left:380.5px;top:336px;width:135.3px;height:3.4px;background:#276b2c;"></div><div style="position:absolute;left:515.8px;top:336px;width:37px;height:3.4px;background:#7a5c12;"></div><div style="position:absolute;left:552.8px;top:336px;width:29.2px;height:3.4px;background:#7c1f25;"></div><div style="position:absolute;left:479.4px;top:336px;width:1.3px;height:3.4px;background:#7ee57e;"></div><span class="t" style="left:379.35px;top:340.62px;font-size:6.1px;color:#f0f0f0;transform:scaleX(0.8965);">-60</span><div style="position:absolute;left:383.35px;top:338.90000000000003px;width:0.5px;height:1.5px;background:#7d7f88;"></div><span class="t" style="left:395.78px;top:340.62px;font-size:6.1px;color:#f0f0f0;transform:scaleX(0.8965);">-55</span><div style="position:absolute;left:399.78000000000003px;top:338.90000000000003px;width:0.5px;height:1.5px;background:#7d7f88;"></div><span class="t" style="left:412.21px;top:340.62px;font-size:6.1px;color:#f0f0f0;transform:scaleX(0.8965);">-50</span><div style="position:absolute;left:416.21000000000004px;top:338.90000000000003px;width:0.5px;height:1.5px;background:#7d7f88;"></div><span class="t" style="left:428.64px;top:340.62px;font-size:6.1px;color:#f0f0f0;transform:scaleX(0.8965);">-45</span><div style="position:absolute;left:432.64000000000004px;top:338.90000000000003px;width:0.5px;height:1.5px;background:#7d7f88;"></div><span class="t" style="left:445.07px;top:340.62px;font-size:6.1px;color:#f0f0f0;transform:scaleX(0.8965);">-40</span><div style="position:absolute;left:449.07000000000005px;top:338.90000000000003px;width:0.5px;height:1.5px;background:#7d7f88;"></div><span class="t" style="left:461.50px;top:340.62px;font-size:6.1px;color:#f0f0f0;transform:scaleX(0.8965);">-35</span><div style="position:absolute;left:465.5px;top:338.90000000000003px;width:0.5px;height:1.5px;background:#7d7f88;"></div><span class="t" style="left:477.93px;top:340.62px;font-size:6.1px;color:#f0f0f0;transform:scaleX(0.8965);">-30</span><div style="position:absolute;left:481.93px;top:338.90000000000003px;width:0.5px;height:1.5px;background:#7d7f88;"></div><span class="t" style="left:494.36px;top:340.62px;font-size:6.1px;color:#f0f0f0;transform:scaleX(0.8965);">-25</span><div style="position:absolute;left:498.36px;top:338.90000000000003px;width:0.5px;height:1.5px;background:#7d7f88;"></div><span class="t" style="left:510.79px;top:340.62px;font-size:6.1px;color:#f0f0f0;transform:scaleX(0.8965);">-20</span><div style="position:absolute;left:514.79px;top:338.90000000000003px;width:0.5px;height:1.5px;background:#7d7f88;"></div><span class="t" style="left:527.22px;top:340.62px;font-size:6.1px;color:#f0f0f0;transform:scaleX(0.8965);">-15</span><div style="position:absolute;left:531.22px;top:338.90000000000003px;width:0.5px;height:1.5px;background:#7d7f88;"></div><span class="t" style="left:543.65px;top:340.62px;font-size:6.1px;color:#f0f0f0;transform:scaleX(0.8965);">-10</span><div style="position:absolute;left:547.6500000000001px;top:338.90000000000003px;width:0.5px;height:1.5px;background:#7d7f88;"></div><span class="t" style="left:561.73px;top:340.62px;font-size:6.1px;color:#f0f0f0;transform:scaleX(0.8484);">-5</span><div style="position:absolute;left:564.08px;top:338.90000000000003px;width:0.5px;height:1.5px;background:#7d7f88;"></div><span class="t" style="left:578.90px;top:340.62px;font-size:6.1px;color:#f0f0f0;transform:scaleX(0.9143);">0</span><div style="position:absolute;left:580.51px;top:338.90000000000003px;width:0.5px;height:1.5px;background:#7d7f88;"></div><div style="position:absolute;left:363px;top:336px;width:13.4px;height:13.4px;background:#363944;border-radius:1.5px;"></div><svg style="position:absolute;left:368.62px;top:338.17px;width:2.16px;height:8.76px;overflow:visible" viewBox="0 0 2.16 8.76" ><circle cx="1.08" cy="1.08" r="1.08" fill="#fff"/><circle cx="1.08" cy="4.38" r="1.08" fill="#fff"/><circle cx="1.08" cy="7.68" r="1.08" fill="#fff"/></svg><div style="position:absolute;left:363px;top:351.4px;width:13.4px;height:13px;background:#363944;border-radius:1.5px;"></div><svg style="position:absolute;left:365px;top:353.6px;width:9.31px;height:8.82px;overflow:visible" viewBox="0 0 9.5 9" ><path d="M0 3 H2 L4.6 0.6 V8.4 L2 6 H0 Z" fill="#fff"/><path d="M5.8 2.6 A2.4 2.4 0 0 1 5.8 6.4" fill="none" stroke="#fff" stroke-width="1"/><path d="M7 0.9 A4.4 4.4 0 0 1 7 8.1" fill="none" stroke="#fff" stroke-width="1"/></svg><div style="position:absolute;left:380.5px;top:358.5px;width:195px;height:2px;background:#3f63d4;border-radius:1px;"></div><div style="position:absolute;left:389.6px;top:356.9px;width:0.5px;height:5.2px;background:rgba(150,160,200,0.22);"></div><div style="position:absolute;left:397.5px;top:356.9px;width:0.5px;height:5.2px;background:rgba(150,160,200,0.22);"></div><div style="position:absolute;left:405.4px;top:356.9px;width:0.5px;height:5.2px;background:rgba(150,160,200,0.22);"></div><div style="position:absolute;left:414.8px;top:356.9px;width:0.5px;height:5.2px;background:rgba(150,160,200,0.22);"></div><div style="position:absolute;left:426px;top:356.9px;width:0.5px;height:5.2px;background:rgba(150,160,200,0.22);"></div><div style="position:absolute;left:439.7px;top:356.9px;width:0.5px;height:5.2px;background:rgba(150,160,200,0.22);"></div><div style="position:absolute;left:457px;top:356.9px;width:0.5px;height:5.2px;background:rgba(150,160,200,0.22);"></div><div style="position:absolute;left:474px;top:356.9px;width:0.5px;height:5.2px;background:rgba(150,160,200,0.22);"></div><div style="position:absolute;left:492px;top:356.9px;width:0.5px;height:5.2px;background:rgba(150,160,200,0.22);"></div><div style="position:absolute;left:510px;top:356.9px;width:0.5px;height:5.2px;background:rgba(150,160,200,0.22);"></div><div style="position:absolute;left:530px;top:356.9px;width:0.5px;height:5.2px;background:rgba(150,160,200,0.22);"></div><div style="position:absolute;left:552px;top:356.9px;width:0.5px;height:5.2px;background:rgba(150,160,200,0.22);"></div><div style="position:absolute;left:570px;top:356.6px;width:12.2px;height:6.2px;background:#fff;border-radius:3.1px;"></div><div style="position:absolute;left:360px;top:367.6px;width:224.5px;height:0.6px;background:#33363f;"></div><span class="t" style="left:362.60px;top:371.79px;font-size:8.2px;color:#f2f2f2;transform:scaleX(0.9899);">gnk;lbnkl</span><span class="t" style="left:553.00px;top:371.57px;font-size:7.8px;color:#6d707b;transform:scaleX(0.9564);">-16.0 dB</span><div style="position:absolute;left:380.5px;top:380.5px;width:135.3px;height:4px;background:#276b2c;"></div><div style="position:absolute;left:515.8px;top:380.5px;width:37px;height:4px;background:#7a5c12;"></div><div style="position:absolute;left:552.8px;top:380.5px;width:29.2px;height:4px;background:#7c1f25;"></div><div style="position:absolute;left:383px;top:380.5px;width:85px;height:4px;background:#35d648;"></div><div style="position:absolute;left:468px;top:380.5px;width:2.1999999999999886px;height:4px;background:#0c0d10;"></div><div style="position:absolute;left:470.2px;top:380.5px;width:32.10000000000002px;height:4px;background:#35d648;"></div><div style="position:absolute;left:516px;top:380.5px;width:1.6px;height:4px;background:#f0b52a;"></div><div style="position:absolute;left:380.2px;top:380.5px;width:1.8px;height:4px;background:#f0506a;"></div><div style="position:absolute;left:380.5px;top:385.5px;width:135.3px;height:4px;background:#276b2c;"></div><div style="position:absolute;left:515.8px;top:385.5px;width:37px;height:4px;background:#7a5c12;"></div><div style="position:absolute;left:552.8px;top:385.5px;width:29.2px;height:4px;background:#7c1f25;"></div><div style="position:absolute;left:383px;top:385.5px;width:79px;height:4px;background:#35d648;"></div><div style="position:absolute;left:462px;top:385.5px;width:2px;height:4px;background:#0c0d10;"></div><div style="position:absolute;left:464px;top:385.5px;width:27.80000000000001px;height:4px;background:#35d648;"></div><div style="position:absolute;left:516px;top:385.5px;width:1.6px;height:4px;background:#f0b52a;"></div><div style="position:absolute;left:380.2px;top:385.5px;width:1.8px;height:4px;background:#f0506a;"></div><span class="t" style="left:379.35px;top:390.22px;font-size:6.1px;color:#f0f0f0;transform:scaleX(0.8965);">-60</span><div style="position:absolute;left:383.35px;top:388.5px;width:0.5px;height:1.5px;background:#7d7f88;"></div><span class="t" style="left:395.78px;top:390.22px;font-size:6.1px;color:#f0f0f0;transform:scaleX(0.8965);">-55</span><div style="position:absolute;left:399.78000000000003px;top:388.5px;width:0.5px;height:1.5px;background:#7d7f88;"></div><span class="t" style="left:412.21px;top:390.22px;font-size:6.1px;color:#f0f0f0;transform:scaleX(0.8965);">-50</span><div style="position:absolute;left:416.21000000000004px;top:388.5px;width:0.5px;height:1.5px;background:#7d7f88;"></div><span class="t" style="left:428.64px;top:390.22px;font-size:6.1px;color:#f0f0f0;transform:scaleX(0.8965);">-45</span><div style="position:absolute;left:432.64000000000004px;top:388.5px;width:0.5px;height:1.5px;background:#7d7f88;"></div><span class="t" style="left:445.07px;top:390.22px;font-size:6.1px;color:#f0f0f0;transform:scaleX(0.8965);">-40</span><div style="position:absolute;left:449.07000000000005px;top:388.5px;width:0.5px;height:1.5px;background:#7d7f88;"></div><span class="t" style="left:461.50px;top:390.22px;font-size:6.1px;color:#f0f0f0;transform:scaleX(0.8965);">-35</span><div style="position:absolute;left:465.5px;top:388.5px;width:0.5px;height:1.5px;background:#7d7f88;"></div><span class="t" style="left:477.93px;top:390.22px;font-size:6.1px;color:#f0f0f0;transform:scaleX(0.8965);">-30</span><div style="position:absolute;left:481.93px;top:388.5px;width:0.5px;height:1.5px;background:#7d7f88;"></div><span class="t" style="left:494.36px;top:390.22px;font-size:6.1px;color:#f0f0f0;transform:scaleX(0.8965);">-25</span><div style="position:absolute;left:498.36px;top:388.5px;width:0.5px;height:1.5px;background:#7d7f88;"></div><span class="t" style="left:510.79px;top:390.22px;font-size:6.1px;color:#f0f0f0;transform:scaleX(0.8965);">-20</span><div style="position:absolute;left:514.79px;top:388.5px;width:0.5px;height:1.5px;background:#7d7f88;"></div><span class="t" style="left:527.22px;top:390.22px;font-size:6.1px;color:#f0f0f0;transform:scaleX(0.8965);">-15</span><div style="position:absolute;left:531.22px;top:388.5px;width:0.5px;height:1.5px;background:#7d7f88;"></div><span class="t" style="left:543.65px;top:390.22px;font-size:6.1px;color:#f0f0f0;transform:scaleX(0.8965);">-10</span><div style="position:absolute;left:547.6500000000001px;top:388.5px;width:0.5px;height:1.5px;background:#7d7f88;"></div><span class="t" style="left:561.73px;top:390.22px;font-size:6.1px;color:#f0f0f0;transform:scaleX(0.8484);">-5</span><div style="position:absolute;left:564.08px;top:388.5px;width:0.5px;height:1.5px;background:#7d7f88;"></div><span class="t" style="left:578.90px;top:390.22px;font-size:6.1px;color:#f0f0f0;transform:scaleX(0.9143);">0</span><div style="position:absolute;left:580.51px;top:388.5px;width:0.5px;height:1.5px;background:#7d7f88;"></div><div style="position:absolute;left:363px;top:381.4px;width:13.4px;height:13.4px;background:#363944;border-radius:1.5px;"></div><svg style="position:absolute;left:368.62px;top:383.57px;width:2.16px;height:8.76px;overflow:visible" viewBox="0 0 2.16 8.76" ><circle cx="1.08" cy="1.08" r="1.08" fill="#fff"/><circle cx="1.08" cy="4.38" r="1.08" fill="#fff"/><circle cx="1.08" cy="7.68" r="1.08" fill="#fff"/></svg><div style="position:absolute;left:363px;top:396.8px;width:13.4px;height:13px;background:#363944;border-radius:1.5px;"></div><svg style="position:absolute;left:365px;top:399px;width:9.31px;height:8.82px;overflow:visible" viewBox="0 0 9.5 9" ><path d="M0 3 H2 L4.6 0.6 V8.4 L2 6 H0 Z" fill="#fff"/><path d="M5.8 2.6 A2.4 2.4 0 0 1 5.8 6.4" fill="none" stroke="#fff" stroke-width="1"/><path d="M7 0.9 A4.4 4.4 0 0 1 7 8.1" fill="none" stroke="#fff" stroke-width="1"/></svg><div style="position:absolute;left:380.5px;top:403.8px;width:201px;height:2px;background:#1f2128;border-radius:1px;"></div><div style="position:absolute;left:380.5px;top:403.8px;width:105px;height:2px;background:#3f63d4;border-radius:1px;"></div><div style="position:absolute;left:389.6px;top:402.2px;width:0.5px;height:5.2px;background:rgba(150,160,200,0.18);"></div><div style="position:absolute;left:397.5px;top:402.2px;width:0.5px;height:5.2px;background:rgba(150,160,200,0.18);"></div><div style="position:absolute;left:405.4px;top:402.2px;width:0.5px;height:5.2px;background:rgba(150,160,200,0.18);"></div><div style="position:absolute;left:414.8px;top:402.2px;width:0.5px;height:5.2px;background:rgba(150,160,200,0.18);"></div><div style="position:absolute;left:426px;top:402.2px;width:0.5px;height:5.2px;background:rgba(150,160,200,0.18);"></div><div style="position:absolute;left:439.7px;top:402.2px;width:0.5px;height:5.2px;background:rgba(150,160,200,0.18);"></div><div style="position:absolute;left:457px;top:402.2px;width:0.5px;height:5.2px;background:rgba(150,160,200,0.18);"></div><div style="position:absolute;left:474px;top:402.2px;width:0.5px;height:5.2px;background:rgba(150,160,200,0.18);"></div><div style="position:absolute;left:492px;top:402.2px;width:0.5px;height:5.2px;background:rgba(150,160,200,0.18);"></div><div style="position:absolute;left:510px;top:402.2px;width:0.5px;height:5.2px;background:rgba(150,160,200,0.18);"></div><div style="position:absolute;left:530px;top:402.2px;width:0.5px;height:5.2px;background:rgba(150,160,200,0.18);"></div><div style="position:absolute;left:552px;top:402.2px;width:0.5px;height:5.2px;background:rgba(150,160,200,0.18);"></div><div style="position:absolute;left:482.8px;top:401.8px;width:11.8px;height:6.2px;background:#fff;border-radius:3.1px;"></div><div style="position:absolute;left:358.3px;top:412.6px;width:227.7px;height:27.6px;background:#1c1e25;"></div><div style="position:absolute;left:358.3px;top:412.3px;width:227.7px;height:0.6px;background:#3a3d47;"></div><div style="position:absolute;left:361px;top:442px;width:14.4px;height:13.6px;background:#363944;border-radius:1.5px;"></div><svg style="position:absolute;left:363.2px;top:444.2px;width:10px;height:9.6px;overflow:visible" viewBox="0 0 10 9.6" ><g transform="translate(3.7 5.9)"><rect x="-0.75" y="-3.50" width="1.50" height="1.30" transform="rotate(0.0)" fill="#fff"/><rect x="-0.75" y="-3.50" width="1.50" height="1.30" transform="rotate(45.0)" fill="#fff"/><rect x="-0.75" y="-3.50" width="1.50" height="1.30" transform="rotate(90.0)" fill="#fff"/><rect x="-0.75" y="-3.50" width="1.50" height="1.30" transform="rotate(135.0)" fill="#fff"/><rect x="-0.75" y="-3.50" width="1.50" height="1.30" transform="rotate(180.0)" fill="#fff"/><rect x="-0.75" y="-3.50" width="1.50" height="1.30" transform="rotate(225.0)" fill="#fff"/><rect x="-0.75" y="-3.50" width="1.50" height="1.30" transform="rotate(270.0)" fill="#fff"/><rect x="-0.75" y="-3.50" width="1.50" height="1.30" transform="rotate(315.0)" fill="#fff"/><circle r="2.6" fill="#fff"/><circle r="1.25" fill="#363944"/></g><circle cx="8" cy="2.5" r="1.35" fill="none" stroke="#fff" stroke-width="1.1"/></svg><div style="position:absolute;left:382px;top:442px;width:14px;height:13.6px;background:#363944;border-radius:1.5px;"></div><svg style="position:absolute;left:387.92px;top:444.37px;width:2.16px;height:8.76px;overflow:visible" viewBox="0 0 2.16 8.76" ><circle cx="1.08" cy="1.08" r="1.08" fill="#fff"/><circle cx="1.08" cy="4.38" r="1.08" fill="#fff"/><circle cx="1.08" cy="7.68" r="1.08" fill="#fff"/></svg><div style="position:absolute;left:592.2px;top:326.2px;width:113.3px;height:17.8px;background:#3c404b;border-radius:2px;"></div><div style="position:absolute;left:690.6px;top:326.2px;width:0.5px;height:17.8px;background:#2b2e37;"></div><span class="t" style="left:598.00px;top:331.79px;font-size:8.2px;color:#f2f2f2;transform:scaleX(0.9535);">Vervagen</span><svg style="position:absolute;left:696px;top:334.3px;width:5.4px;height:3px;overflow:visible" viewBox="0 0 5.4 3" ><path d="M0 0 H5.4 L2.7 3 Z" fill="#fff"/></svg><span class="t" style="left:591.80px;top:351.79px;font-size:8.2px;color:#f2f2f2;transform:scaleX(0.9690);">Duur</span><div style="position:absolute;left:612px;top:346.7px;width:93.5px;height:17.4px;background:#3c404b;border-radius:2px;"></div><div style="position:absolute;left:690.6px;top:346.7px;width:0.5px;height:17.4px;background:#2b2e37;"></div><span class="t" style="left:618.80px;top:351.79px;font-size:8.2px;color:#f2f2f2;transform:scaleX(0.9531);">300 ms</span><svg style="position:absolute;left:695.6px;top:349.4px;width:5.6px;height:3.08px;overflow:visible" viewBox="0 0 8 4.4" ><path d="M0.5 4 L4 0.6 L7.5 4" stroke="#fff" stroke-width="1.1" fill="none"/></svg><svg style="position:absolute;left:695.6px;top:357.4px;width:5.6px;height:3.08px;overflow:visible" viewBox="0 0 8 4.4" ><path d="M0.5 0.4 L4 3.8 L7.5 0.4" stroke="#fff" stroke-width="1.1" fill="none"/></svg><div style="position:absolute;left:649.3px;top:365.8px;width:15px;height:15px;background:#363944;border-radius:1.5px;"></div><svg style="position:absolute;left:652.8px;top:369.3px;width:8px;height:8px;overflow:visible" viewBox="0 0 8 8" ><path d="M4 0.3 V7.7 M0.3 4 H7.7" stroke="#fff" stroke-width="1.3" fill="none"/></svg><svg style="position:absolute;left:673px;top:369px;width:8px;height:9px;overflow:visible" viewBox="0 0 8 9" ><path d="M0 1.5 H8" stroke="#fff" stroke-width="1"/><path d="M2.8 1.3 V0.5 H5.2 V1.3" stroke="#fff" stroke-width="0.9" fill="none"/><path d="M1.1 2 V7.6 Q1.1 8.5 2 8.5 H6 Q6.9 8.5 6.9 7.6 V2" stroke="#fff" stroke-width="1.1" fill="none"/><rect x="2.7" y="3" width="2.6" height="4" fill="#fff" opacity="0.55"/></svg><svg style="position:absolute;left:695.57px;top:368.97px;width:2.16px;height:8.76px;overflow:visible" viewBox="0 0 2.16 8.76" ><circle cx="1.08" cy="1.08" r="1.08" fill="#fff"/><circle cx="1.08" cy="4.38" r="1.08" fill="#fff"/><circle cx="1.08" cy="7.68" r="1.08" fill="#fff"/></svg><div style="position:absolute;left:715px;top:326.2px;width:181px;height:18px;background:#3c404b;border-radius:2px;"></div><span class="t" style="left:773.60px;top:332.39px;font-size:8.2px;color:#f2f2f2;transform:scaleX(0.9871);">Streamen starten</span><div style="position:absolute;left:715px;top:347.6px;width:181px;height:18px;background:#1a1b21;border-radius:2px;"></div><span class="t" style="left:776.00px;top:354.19px;font-size:8.2px;color:#f2f2f2;transform:scaleX(0.9963);">Opname starten</span><div style="position:absolute;left:715px;top:368.8px;width:159.4px;height:18px;background:#3c404b;border-radius:2px;"></div><span class="t" style="left:752.50px;top:375.39px;font-size:8.2px;color:#f2f2f2;transform:scaleX(0.9858);">Virtuele camera starten</span><div style="position:absolute;left:715px;top:390px;width:181px;height:18px;background:#3c404b;border-radius:2px;"></div><span class="t" style="left:781.60px;top:395.69px;font-size:8.2px;color:#f2f2f2;transform:scaleX(0.9917);">Studiomodus</span><div style="position:absolute;left:715px;top:411.2px;width:181px;height:18px;background:#3c404b;border-radius:2px;"></div><span class="t" style="left:784.60px;top:416.89px;font-size:8.2px;color:#f2f2f2;transform:scaleX(0.9995);">Instellingen</span><div style="position:absolute;left:715px;top:432.4px;width:181px;height:18px;background:#3c404b;border-radius:2px;"></div><span class="t" style="left:789.80px;top:438.09px;font-size:8.2px;color:#f2f2f2;transform:scaleX(0.9934);">Afsluiten</span><div style="position:absolute;left:877.3px;top:368.8px;width:18.7px;height:18px;background:#3c404b;border-radius:2px;"></div><svg style="position:absolute;left:882.3px;top:373.4px;width:8.8px;height:8.8px;overflow:visible" viewBox="0 0 10 10" ><g transform="translate(5 5)"><rect x="-1.1" y="-5" width="2.2" height="2.4" rx="0.4" transform="rotate(0)" fill="#fff"/><rect x="-1.1" y="-5" width="2.2" height="2.4" rx="0.4" transform="rotate(45)" fill="#fff"/><rect x="-1.1" y="-5" width="2.2" height="2.4" rx="0.4" transform="rotate(90)" fill="#fff"/><rect x="-1.1" y="-5" width="2.2" height="2.4" rx="0.4" transform="rotate(135)" fill="#fff"/><rect x="-1.1" y="-5" width="2.2" height="2.4" rx="0.4" transform="rotate(180)" fill="#fff"/><rect x="-1.1" y="-5" width="2.2" height="2.4" rx="0.4" transform="rotate(225)" fill="#fff"/><rect x="-1.1" y="-5" width="2.2" height="2.4" rx="0.4" transform="rotate(270)" fill="#fff"/><rect x="-1.1" y="-5" width="2.2" height="2.4" rx="0.4" transform="rotate(315)" fill="#fff"/><circle r="3.7" fill="#fff"/><circle r="1.9" fill="#3c404b"/></g></svg><div style="position:absolute;left:649.7px;top:458.5px;width:0.7px;height:19px;background:#15161b;"></div><div style="position:absolute;left:668.3px;top:458.5px;width:0.7px;height:19px;background:#15161b;"></div><div style="position:absolute;left:722.2px;top:458.5px;width:0.7px;height:19px;background:#15161b;"></div><div style="position:absolute;left:773.6px;top:458.5px;width:0.7px;height:19px;background:#15161b;"></div><div style="position:absolute;left:825.4px;top:458.5px;width:0.7px;height:19px;background:#15161b;"></div><svg style="position:absolute;left:654.6px;top:465.4px;width:8.4px;height:8px" viewBox="0 0 8 8"><g fill="#3c3f49"><rect x="0" y="5.6" width="1.5" height="2.4"/><rect x="2.1" y="3.8" width="1.5" height="4.2"/><rect x="4.2" y="2" width="1.5" height="6"/><rect x="6.3" y="0" width="1.5" height="8"/></g></svg><svg style="position:absolute;left:674.5px;top:466px;width:8px;height:6px" viewBox="0 0 8 6"><circle cx="4" cy="3" r="1.5" fill="#5d606a"/><path d="M1.6 0.6 A3.4 3.4 0 0 0 1.6 5.4 M6.4 0.6 A3.4 3.4 0 0 1 6.4 5.4" stroke="#5d606a" stroke-width="0.8" fill="none"/></svg><span class="t" style="left:686.80px;top:466.07px;font-size:7.8px;color:#5d606a;transform:scaleX(0.9948);">00:00:00</span><div style="position:absolute;left:727.6px;top:465.2px;width:7.6px;height:7.6px;background:#50535d;border-radius:3.8px;"></div><span class="t" style="left:740.00px;top:466.07px;font-size:7.8px;color:#5d606a;transform:scaleX(0.9882);">00:00:00</span><span class="t" style="left:782.60px;top:466.07px;font-size:7.8px;color:#f2f2f2;transform:scaleX(0.9332);">CPU: 1.5%</span><span class="t" style="left:830.80px;top:466.07px;font-size:7.8px;color:#f2f2f2;transform:scaleX(0.9609);">60.00 / 60.00 FPS</span><div style="position:absolute;left:0;top:477.5px;width:900px;height:28.5px;background:linear-gradient(90deg,#f4e8e0 0%,#f3e9e1 20%,#dff0ea 27%,#cdf0ea 36%,#dcefe2 46%,#eee9dc 55%,#f3e2d6 66%,#f4dfd2 76%,#d9ebe2 86%,#c2ebe5 100%)"></div><svg style="position:absolute;left:13.2px;top:485.4px;width:13px;height:12px" viewBox="0 0 13 12"><defs><linearGradient id="sun1" x1="0" y1="0" x2="1" y2="1"><stop offset="0" stop-color="#ffb62e"/><stop offset="1" stop-color="#ee6a12"/></linearGradient></defs><circle cx="5.8" cy="6" r="5.6" fill="url(#sun1)"/><path d="M5.2 9.6 A1.9 1.9 0 0 1 6 6.2 A2.3 2.3 0 0 1 10.2 6.4 A1.7 1.7 0 0 1 11.4 9.6 Z" fill="#c9dcf2"/></svg><span class="t" style="left:30.00px;top:484.16px;font-size:7.6px;color:#1c1c1c;transform:scaleX(0.8074);">13°C</span><span class="t" style="left:30.00px;top:493.56px;font-size:7.6px;color:#666;transform:scaleX(0.9397);">Meestal zonnig</span><svg style="position:absolute;left:188px;top:485.6px;width:13.6px;height:13.6px" viewBox="0 0 14 14"><defs><linearGradient id="wl1" x1="0" y1="0" x2="1" y2="1"><stop offset="0" stop-color="#55c6f5"/><stop offset="1" stop-color="#0a6fd0"/></linearGradient></defs><g fill="url(#wl1)"><rect x="0" y="0" width="6.6" height="6.6" rx="0.4"/><rect x="7.3" y="0" width="6.6" height="6.6" rx="0.4"/><rect x="0" y="7.3" width="6.6" height="6.6" rx="0.4"/><rect x="7.3" y="7.3" width="6.6" height="6.6" rx="0.4"/></g></svg><div style="position:absolute;left:210.6px;top:483px;width:126.6px;height:18.2px;background:rgba(255,255,255,0.72);border-radius:9.1px;"></div><svg style="position:absolute;left:216.2px;top:488px;width:8.6px;height:8.6px" viewBox="0 0 9 9"><circle cx="3.6" cy="3.6" r="2.9" fill="none" stroke="#222" stroke-width="1"/><path d="M5.8 5.8 L8.4 8.4" stroke="#222" stroke-width="1.1"/></svg><span class="t" style="left:230.80px;top:488.88px;font-size:8px;color:#555;transform:scaleX(1.0005);">Zoeken</span><svg style="position:absolute;left:344.6px;top:486.6px;width:13.4px;height:12px" viewBox="0 0 13.4 12"><rect x="3.4" y="0.4" width="9.6" height="8" rx="1" fill="#d9d9d9" stroke="#f4f4f4" stroke-width="0.6"/><rect x="0.4" y="3" width="9.6" height="8.4" rx="1" fill="#1c1c1c"/><rect x="3" y="3" width="7" height="5.6" fill="#c8c8c8"/><rect x="0.4" y="3" width="2.8" height="8.4" rx="0.8" fill="#1c1c1c"/><rect x="0.4" y="8.4" width="9.6" height="3" rx="0.8" fill="#1c1c1c"/></svg><svg style="position:absolute;left:371px;top:485.6px;width:14.6px;height:12.6px" viewBox="0 0 14.6 12.6"><path d="M0.3 1.2 Q0.3 0.3 1.2 0.3 H4.6 L6 1.8 H13.4 Q14.3 1.8 14.3 2.7 V11 Q14.3 11.9 13.4 11.9 H1.2 Q0.3 11.9 0.3 11 Z" fill="#f7b92a"/><path d="M0.3 3.4 H14.3 V11 Q14.3 11.9 13.4 11.9 H1.2 Q0.3 11.9 0.3 11 Z" fill="#fcd462"/><rect x="3.2" y="8.4" width="8.2" height="3.5" fill="#2f7fd8"/><rect x="3.2" y="8.4" width="8.2" height="1.2" fill="#1a5fb4"/></svg><div style="position:absolute;left:376.4px;top:501.6px;width:3.4px;height:1px;border-radius:1px;background:#777"></div><svg style="position:absolute;left:396.6px;top:486px;width:14.6px;height:13px" viewBox="0 0 14.6 13"><circle cx="11.6" cy="2.6" r="1.7" fill="#5b5fc7"/><rect x="9.2" y="4.8" width="5.2" height="6" rx="1.6" fill="#5b5fc7"/><circle cx="7.4" cy="2" r="2.1" fill="#7b83eb"/><rect x="4" y="4.6" width="7.4" height="7.8" rx="1.8" fill="#7b83eb"/><rect x="0.2" y="3.2" width="7" height="7" rx="0.9" fill="#4b53bc"/><path d="M2 5 H5.4 M3.7 5 V8.8" stroke="#fff" stroke-width="0.9"/></svg><svg style="position:absolute;left:422.2px;top:485.6px;width:14.4px;height:14.4px" viewBox="0 0 14.4 14.4"><defs><linearGradient id="eg1" x1="0" y1="0" x2="1" y2="0.6"><stop offset="0" stop-color="#1b6ec9"/><stop offset="0.6" stop-color="#2aa7d8"/><stop offset="1" stop-color="#5fd35a"/></linearGradient></defs><circle cx="7.2" cy="7.2" r="7" fill="url(#eg1)"/><path d="M1 9 A6.4 6.4 0 0 0 12.6 11 A4.6 4.6 0 0 1 5.4 8.4 Q5 6 7.4 5.6 Q4 4 1 9 Z" fill="#0f4fa8"/><path d="M6.6 8.4 A2.6 2.6 0 0 0 11.8 8.4 Q12 6.4 9.2 6.2 Q6.8 6.4 6.6 8.4 Z" fill="#e6f4f1"/></svg><svg style="position:absolute;left:447.8px;top:485.4px;width:14.6px;height:14.4px" viewBox="0 0 14.6 14.4"><path d="M4.6 3.4 V2 Q4.6 0.5 6 0.5 H8.6 Q10 0.5 10 2 V3.4" fill="none" stroke="#1c5cb0" stroke-width="1"/><rect x="0.4" y="3" width="13.8" height="11" rx="1.6" fill="#174f9e"/><rect x="0.4" y="3" width="13.8" height="3" rx="1.6" fill="#1f62b8"/><rect x="4.2" y="5.6" width="2.7" height="2.7" fill="#f25022"/><rect x="7.5" y="5.6" width="2.7" height="2.7" fill="#7fba00"/><rect x="4.2" y="8.9" width="2.7" height="2.7" fill="#00a4ef"/><rect x="7.5" y="8.9" width="2.7" height="2.7" fill="#ffb900"/></svg><svg style="position:absolute;left:473.8px;top:486px;width:14.4px;height:13.4px" viewBox="0 0 14.4 13.4"><path d="M0.3 0.8 L7.2 4 L14.1 0.8 V10.2 L7.2 13.2 L0.3 10.2 Z" fill="#c4212f"/><path d="M2.9 4.6 L7.2 6.7 L11.5 4.6 V8.8 L7.2 10.8 L2.9 8.8 Z" fill="#f3e6dc"/></svg><svg style="position:absolute;left:499.6px;top:485.6px;width:14.4px;height:14.4px" viewBox="-7.2 -7.2 14.4 14.4"><circle r="7" fill="#fbc116"/><path d="M0 0 L-6.06 -3.5 A7 7 0 0 1 6.06 -3.5 Z" fill="#e33b2e"/><path d="M0 0 L-6.06 -3.5 A7 7 0 0 0 0 7 L3 1 Z" fill="#2da94f"/><path d="M-6.06 -3.5 A7 7 0 0 1 6.06 -3.5 H0 Z" fill="#e33b2e"/><circle r="3.3" fill="#fff"/><circle r="2.6" fill="#3f86f4"/></svg><div style="position:absolute;left:505.2px;top:501.6px;width:3.4px;height:1px;border-radius:1px;background:#777"></div><svg style="position:absolute;left:525.2px;top:485.6px;width:14.4px;height:14.4px" viewBox="-7.2 -7.2 14.4 14.4"><circle r="6.4" fill="none" stroke="#e0435c" stroke-width="1.3"/><ellipse rx="3" ry="5.2" fill="none" stroke="#e0435c" stroke-width="1.1"/></svg><div style="position:absolute;left:530.8px;top:501.6px;width:3.4px;height:1px;border-radius:1px;background:#777"></div><svg style="position:absolute;left:551.2px;top:485.4px;width:14.4px;height:14.4px" viewBox="0 0 8 8"><rect width="8" height="8" fill="#4ea53a"/><rect x="1.4" y="1.6" width="1.9" height="1.9" fill="#0c1a0a"/><rect x="4.7" y="1.6" width="1.9" height="1.9" fill="#0c1a0a"/><rect x="3.1" y="3.4" width="1.8" height="2.6" fill="#0c1a0a"/><rect x="2.2" y="4.4" width="3.6" height="1.8" fill="#0c1a0a"/><rect x="2.2" y="6" width="1" height="0.9" fill="#0c1a0a"/><rect x="4.8" y="6" width="1" height="0.9" fill="#0c1a0a"/></svg><svg style="position:absolute;left:576.8px;top:485.4px;width:14.8px;height:14.8px" viewBox="0 0 14.8 14.8"><path d="M1 14 L1.9 10.6 A6.4 6.4 0 1 1 4.4 13 Z" fill="#f4f7f2" stroke="#1f8f54" stroke-width="1.5"/><path d="M5 4.6 Q5.8 4 6.2 5 L6.6 6 Q6.7 6.4 6.2 6.9 Q7 8.4 8.6 9 Q9.2 8.3 9.6 8.5 L10.6 9 Q11.2 9.4 10.6 10.2 Q9.6 11.2 7.8 10.2 Q5.6 9 4.8 7 Q4.2 5.4 5 4.6 Z" fill="#24955c"/></svg><div style="position:absolute;left:582.6px;top:501.6px;width:3.4px;height:1px;border-radius:1px;background:#777"></div><svg style="position:absolute;left:604.4px;top:486px;width:12.4px;height:13px" viewBox="0 0 12.4 13"><path d="M10.8 0.8 L2.4 11.6" stroke="#222" stroke-width="1.3"/><path d="M7.2 0.6 L3 5.2 H5.6 L2.6 9.6" stroke="#39a86a" stroke-width="1.2" fill="none"/><path d="M0.6 8.8 H3 M0.6 10.6 H2.2" stroke="#5aa0d8" stroke-width="0.8"/></svg><div style="position:absolute;left:608.6px;top:501.6px;width:3.4px;height:1px;border-radius:1px;background:#777"></div><svg style="position:absolute;left:628.6px;top:485px;width:14.8px;height:14.8px" viewBox="0 0 14.8 14.8"><defs><linearGradient id="orb1" x1="0" y1="0" x2="1" y2="1"><stop offset="0" stop-color="#4aa8f0"/><stop offset="0.55" stop-color="#7a5be0"/><stop offset="1" stop-color="#c66ad8"/></linearGradient></defs><circle cx="7.4" cy="7.4" r="7.2" fill="url(#orb1)"/><path d="M4.6 3.6 L7.4 11.4 L10.2 3.6 Q7.4 6 4.6 3.6 Z" fill="#3a4a8a" opacity="0.75"/><path d="M7.4 2 V7" stroke="#cfe0ff" stroke-width="0.8"/></svg><div style="position:absolute;left:634.4px;top:501.6px;width:3.4px;height:1px;border-radius:1px;background:#777"></div><div style="position:absolute;left:651px;top:481.4px;width:22px;height:22px;border-radius:2.5px;background:rgba(255,255,255,0.55)"></div><svg style="position:absolute;left:655.4px;top:485.2px;width:13.4px;height:13.4px" viewBox="-10 -10 20 20"><circle r="10" fill="#18181a"/><circle r="8.7" fill="none" stroke="#cfcfcf" stroke-width="0.7"/><circle cx="0" cy="-4.1" r="3.5" fill="none" stroke="#e4e4e4" stroke-width="1.5" stroke-dasharray="15.5 30" stroke-dashoffset="-2" transform="rotate(0)"/><circle cx="0" cy="-4.1" r="3.5" fill="none" stroke="#e4e4e4" stroke-width="1.5" stroke-dasharray="15.5 30" stroke-dashoffset="-2" transform="rotate(120)"/><circle cx="0" cy="-4.1" r="3.5" fill="none" stroke="#e4e4e4" stroke-width="1.5" stroke-dasharray="15.5 30" stroke-dashoffset="-2" transform="rotate(240)"/></svg><div style="position:absolute;left:658px;top:501.2px;width:8.4px;height:1.4px;border-radius:1px;background:#2f6fd6"></div><svg style="position:absolute;left:713.5px;top:489.6px;width:7px;height:4px" viewBox="0 0 7 4"><path d="M0.5 3.6 L3.5 0.6 L6.5 3.6" stroke="#222" stroke-width="0.8" fill="none"/></svg><svg style="position:absolute;left:731.6px;top:488.2px;width:10px;height:7px" viewBox="0 0 10 7"><path d="M2.4 6.4 A1.9 1.9 0 0 1 2.2 2.7 A2.9 2.9 0 0 1 7.6 2.5 A2 2 0 0 1 7.8 6.4 Z" fill="#d8d4cf" stroke="#444" stroke-width="0.8"/></svg><svg style="position:absolute;left:751.6px;top:487px;width:6.4px;height:10px" viewBox="0 0 6.4 10"><rect x="1.8" y="0.3" width="2.8" height="5.6" rx="1.4" fill="#6c8fe0" stroke="#3c62c8" stroke-width="0.5"/><path d="M0.5 4.6 A2.7 2.7 0 0 0 5.9 4.6 M3.2 7.4 V9.4" stroke="#3c62c8" stroke-width="0.8" fill="none"/></svg><span class="t" style="left:770.60px;top:484.34px;font-size:7.4px;color:#222;transform:scaleX(0.8921);">NLD</span><span class="t" style="left:770.40px;top:494.14px;font-size:7.4px;color:#222;transform:scaleX(0.8866);">INTL</span><svg style="position:absolute;left:795.4px;top:488px;width:9.6px;height:7.6px" viewBox="0 0 10 8"><g fill="none" stroke="#222" stroke-width="0.85"><path d="M0.6 2.8 A6.2 6.2 0 0 1 9.4 2.8"/><path d="M2.1 4.4 A4.1 4.1 0 0 1 7.9 4.4"/><path d="M3.5 5.9 A2.1 2.1 0 0 1 6.5 5.9"/></g><circle cx="5" cy="7.1" r="0.7" fill="#222"/></svg><svg style="position:absolute;left:809px;top:488px;width:10px;height:8px" viewBox="0 0 10 8"><path d="M0.5 2.8 H2 L4 1 V7 L2 5.2 H0.5 Z" fill="none" stroke="#222" stroke-width="0.7"/><g fill="none" stroke="#222" stroke-width="0.7"><path d="M5.2 2.8 A1.8 1.8 0 0 1 5.2 5.2"/><path d="M6.4 1.8 A3.2 3.2 0 0 1 6.4 6.2"/><path d="M7.6 0.8 A4.6 4.6 0 0 1 7.6 7.2"/></g></svg><svg style="position:absolute;left:823px;top:487.6px;width:10.4px;height:8.4px" viewBox="0 0 10.4 8.4"><rect x="0.4" y="2.4" width="8.6" height="5" rx="1" fill="#222"/><rect x="9.2" y="3.8" width="1" height="2.2" fill="#222"/><path d="M1 2.6 V1 H2.6 M2.2 0.4 L3.6 1.6 L2.2 2.6" stroke="#222" stroke-width="0.7" fill="none"/></svg><span class="t" style="left:857.60px;top:484.06px;font-size:7.6px;color:#222;transform:scaleX(0.9256);">12:32</span><span class="t" style="left:842.40px;top:493.86px;font-size:7.6px;color:#222;transform:scaleX(0.9473);">1-10-2025</span><svg style="position:absolute;left:880px;top:487.6px;width:8.6px;height:9.6px" viewBox="0 0 8.6 9.6"><path d="M1 6.8 Q2 5.6 2 3.6 A2.3 2.3 0 0 1 6.6 3.6 Q6.6 5.6 7.6 6.8 Z" fill="#222"/><rect x="3.4" y="7.4" width="1.8" height="1.4" rx="0.6" fill="#222"/><path d="M5.4 0.6 H7.6 L5.6 2.4 H7.8" stroke="#222" stroke-width="0.6" fill="none"/></svg><svg style="position:absolute;left:781px;top:355px;width:34px;height:34px;overflow:visible" viewBox="0 0 34 34"><path d="M6 20 Q5.4 9.6 14 8.9 Q20 7.4 26.6 9.6 Q32.6 12.6 32 22 L32.2 30.6 Q29.6 30 28.4 26 L10.6 26 Q9.6 30 6.6 30.8 Q5.6 26 6 20 Z" fill="#23323c" opacity="0.55" transform="translate(0.4 0.8)"/><path d="M1.4 1.9 L12.6 11.2 L9.4 16.4 L4.2 17.4 L2.8 14.6 Z" fill="#a6e0e9"/><path d="M1.4 1.9 L7.4 16.4" stroke="#7cc6d4" stroke-width="0.8" fill="none"/><path d="M6.2 20 Q5.6 9.8 14 9 Q20 7.6 26.4 9.8 Q32 12.6 31.6 22 L31.8 30.2 Q29.4 29.4 28.2 25.4 L27.4 20.4 Q19 17.4 11.2 20.6 L10.6 25.6 Q9.6 29.6 6.8 30.4 Q5.8 26 6.2 20 Z" fill="#8fd6e3"/><path d="M10.4 13 Q14 10.6 19 10.6" stroke="#b9ebf2" stroke-width="1.2" fill="none" opacity="0.8"/><path d="M11.2 20.6 Q19 16.6 27.4 20.4 L27.2 28 H11 Z" fill="#e6f5f8"/><path d="M12.6 23.4 Q14.4 21.6 16.2 23.4 M21.6 23.4 Q23.4 21.6 25.2 23.4" stroke="#4f8ea8" stroke-width="0.9" fill="none"/><path d="M17.4 25.4 H20.6" stroke="#e48a9a" stroke-width="0.8"/><rect x="8.8" y="27" width="16.6" height="4.6" rx="1.6" fill="#15161a"/><rect x="9.4" y="28.8" width="3.4" height="2.2" rx="1" fill="#fff"/><rect x="21.8" y="28.8" width="3.4" height="2.2" rx="1" fill="#fff"/><rect x="13.8" y="27.8" width="6.8" height="1.5" rx="0.6" fill="#bfe6ee"/><circle cx="28.2" cy="9.8" r="1.5" fill="#c0304c"/></svg></div></div><span class="t" style="left:6.30px;top:268.83px;font-size:7.2px;color:#80838d;transform:scaleX(0.9034);">45%</span><span class="t" style="left:28.00px;top:268.83px;font-size:7.2px;color:#80838d;transform:scaleX(0.9220);">Schaal naar het venster</span><svg style="position:absolute;left:108px;top:270.9px;width:5px;height:3px;overflow:visible" viewBox="0 0 5 3" ><path d="M0 0 H5 L2.5 3 Z" fill="#fff"/></svg><div style="position:absolute;left:0px;top:280px;width:898.6px;height:25px;background:#272a33;border-radius:3px;"></div><svg style="position:absolute;left:7.2px;top:288px;width:6.84px;height:8.46px;overflow:visible" viewBox="0 0 7.6 9.4" ><rect x="2.1" y="0" width="3.4" height="6" rx="1.7" fill="#fff"/><path d="M0.7 4.2 A3.1 3.1 0 0 0 6.9 4.2" fill="none" stroke="#fff" stroke-width="0.9"/><rect x="3.3" y="7" width="1" height="1.6" fill="#fff"/><rect x="1.6" y="8.4" width="4.4" height="0.9" fill="#fff"/></svg><span class="t" style="left:22.00px;top:289.19px;font-size:8.2px;color:#f2f2f2;transform:scaleX(1.0454);">fvbjnbfjf</span><div style="position:absolute;left:125px;top:282.8px;width:81px;height:19px;background:#3c404b;border-radius:2px;"></div><svg style="position:absolute;left:132.6px;top:288px;width:8.8px;height:8.8px;overflow:visible" viewBox="0 0 10 10" ><g transform="translate(5 5)"><rect x="-1.1" y="-5" width="2.2" height="2.4" rx="0.4" transform="rotate(0)" fill="#fff"/><rect x="-1.1" y="-5" width="2.2" height="2.4" rx="0.4" transform="rotate(45)" fill="#fff"/><rect x="-1.1" y="-5" width="2.2" height="2.4" rx="0.4" transform="rotate(90)" fill="#fff"/><rect x="-1.1" y="-5" width="2.2" height="2.4" rx="0.4" transform="rotate(135)" fill="#fff"/><rect x="-1.1" y="-5" width="2.2" height="2.4" rx="0.4" transform="rotate(180)" fill="#fff"/><rect x="-1.1" y="-5" width="2.2" height="2.4" rx="0.4" transform="rotate(225)" fill="#fff"/><rect x="-1.1" y="-5" width="2.2" height="2.4" rx="0.4" transform="rotate(270)" fill="#fff"/><rect x="-1.1" y="-5" width="2.2" height="2.4" rx="0.4" transform="rotate(315)" fill="#fff"/><circle r="3.7" fill="#fff"/><circle r="1.9" fill="#3c404b"/></g></svg><span class="t" style="left:142.70px;top:288.99px;font-size:8.2px;color:#f2f2f2;transform:scaleX(0.9565);">Eigenschappen</span><div style="position:absolute;left:209.3px;top:282.8px;width:48.4px;height:19px;background:#3c404b;border-radius:2px;"></div><svg style="position:absolute;left:217.2px;top:288.3px;width:8px;height:8.4px;overflow:visible" viewBox="0 0 8 8.4" ><rect x="0.5" y="0.5" width="7" height="7.4" rx="1.2" fill="none" stroke="#fff" stroke-width="1"/><rect x="1.4" y="1.4" width="2.6" height="5.6" fill="#fff"/><rect x="4" y="1.4" width="2.6" height="5.6" fill="#fff" opacity="0.35"/></svg><span class="t" style="left:227.30px;top:288.99px;font-size:8.2px;color:#f2f2f2;transform:scaleX(0.9598);">Filters</span><span class="t" style="left:266.70px;top:288.99px;font-size:8.2px;color:#f2f2f2;transform:scaleX(0.9719);">Apparaat</span><div style="position:absolute;left:302.7px;top:282.8px;width:353px;height:19px;background:#3c404b;border-radius:2px;"></div><span class="t" style="left:309.50px;top:288.99px;font-size:8.2px;color:#f2f2f2;transform:scaleX(0.9618);">Mikrofon (JBL Quantum350 Wireless)</span><svg style="position:absolute;left:645.2px;top:291.4px;width:5.4px;height:3px;overflow:visible" viewBox="0 0 5.4 3" ><path d="M0 0 H5.4 L2.7 3 Z" fill="#fff"/></svg><div style="position:absolute;left:0px;top:308px;width:176px;height:150.4px;background:#272a33;border-radius:2.5px;box-shadow:inset 0 0 0 0.8px #30333d;"></div><div style="position:absolute;left:0px;top:308px;width:176px;height:14.8px;background:#363944;border-radius:2.5px;border-bottom-left-radius:0;border-bottom-right-radius:0;"></div><span class="t" style="left:4.50px;top:312.49px;font-size:8.2px;color:#fff;transform:scaleX(0.8889);font-weight:bold;">Scènes</span><svg style="position:absolute;left:164.4px;top:310.5px;width:10.1px;height:9.6px;overflow:visible" viewBox="0 0 10.1 9.6" ><rect x="0.45" y="0.45" width="6.3" height="5" rx="0.9" fill="none" stroke="#fff" stroke-width="0.9"/><rect x="0.45" y="0.45" width="6.3" height="1.5" rx="0.5" fill="#fff"/><rect x="3.15" y="3.85" width="6.5" height="5.3" rx="0.9" fill="#363944" stroke="#fff" stroke-width="0.9"/><rect x="3.15" y="3.85" width="6.5" height="1.6" rx="0.5" fill="#fff"/></svg><div style="position:absolute;left:179px;top:308px;width:176.5px;height:150.4px;background:#272a33;border-radius:2.5px;box-shadow:inset 0 0 0 0.8px #30333d;"></div><div style="position:absolute;left:179px;top:308px;width:176.5px;height:14.8px;background:#363944;border-radius:2.5px;border-bottom-left-radius:0;border-bottom-right-radius:0;"></div><span class="t" style="left:183.40px;top:312.49px;font-size:8.2px;color:#fff;transform:scaleX(0.9622);font-weight:bold;">Bronnen</span><svg style="position:absolute;left:343.9px;top:310.5px;width:10.1px;height:9.6px;overflow:visible" viewBox="0 0 10.1 9.6" ><rect x="0.45" y="0.45" width="6.3" height="5" rx="0.9" fill="none" stroke="#fff" stroke-width="0.9"/><rect x="0.45" y="0.45" width="6.3" height="1.5" rx="0.5" fill="#fff"/><rect x="3.15" y="3.85" width="6.5" height="5.3" rx="0.9" fill="#363944" stroke="#fff" stroke-width="0.9"/><rect x="3.15" y="3.85" width="6.5" height="1.6" rx="0.5" fill="#fff"/></svg><div style="position:absolute;left:358.3px;top:308px;width:227.7px;height:150.4px;background:#272a33;border-radius:2.5px;box-shadow:inset 0 0 0 0.8px #30333d;"></div><div style="position:absolute;left:358.3px;top:308px;width:227.7px;height:14.8px;background:#363944;border-radius:2.5px;border-bottom-left-radius:0;border-bottom-right-radius:0;"></div><span class="t" style="left:362.50px;top:312.49px;font-size:8.2px;color:#fff;transform:scaleX(0.9745);font-weight:bold;">Audiomixer</span><svg style="position:absolute;left:574.4px;top:310.5px;width:10.1px;height:9.6px;overflow:visible" viewBox="0 0 10.1 9.6" ><rect x="0.45" y="0.45" width="6.3" height="5" rx="0.9" fill="none" stroke="#fff" stroke-width="0.9"/><rect x="0.45" y="0.45" width="6.3" height="1.5" rx="0.5" fill="#fff"/><rect x="3.15" y="3.85" width="6.5" height="5.3" rx="0.9" fill="#363944" stroke="#fff" stroke-width="0.9"/><rect x="3.15" y="3.85" width="6.5" height="1.6" rx="0.5" fill="#fff"/></svg><div style="position:absolute;left:589.3px;top:308px;width:118.90000000000009px;height:150.4px;background:#272a33;border-radius:2.5px;box-shadow:inset 0 0 0 0.8px #30333d;"></div><div style="position:absolute;left:589.3px;top:308px;width:118.90000000000009px;height:14.8px;background:#363944;border-radius:2.5px;border-bottom-left-radius:0;border-bottom-right-radius:0;"></div><span class="t" style="left:593.30px;top:312.49px;font-size:8.2px;color:#fff;transform:scaleX(0.9404);font-weight:bold;">Scène-overgangen</span><svg style="position:absolute;left:696.6px;top:310.5px;width:10.1px;height:9.6px;overflow:visible" viewBox="0 0 10.1 9.6" ><rect x="0.45" y="0.45" width="6.3" height="5" rx="0.9" fill="none" stroke="#fff" stroke-width="0.9"/><rect x="0.45" y="0.45" width="6.3" height="1.5" rx="0.5" fill="#fff"/><rect x="3.15" y="3.85" width="6.5" height="5.3" rx="0.9" fill="#363944" stroke="#fff" stroke-width="0.9"/><rect x="3.15" y="3.85" width="6.5" height="1.6" rx="0.5" fill="#fff"/></svg><div style="position:absolute;left:710.7px;top:308px;width:189.29999999999995px;height:150.4px;background:#272a33;border-radius:2.5px;box-shadow:inset 0 0 0 0.8px #30333d;"></div><div style="position:absolute;left:710.7px;top:308px;width:189.29999999999995px;height:14.8px;background:#363944;border-radius:2.5px;border-bottom-left-radius:0;border-bottom-right-radius:0;"></div><span class="t" style="left:715.50px;top:312.49px;font-size:8.2px;color:#fff;transform:scaleX(0.9723);font-weight:bold;">Bedieningselementen</span><svg style="position:absolute;left:887.8px;top:310.5px;width:10.1px;height:9.6px;overflow:visible" viewBox="0 0 10.1 9.6" ><rect x="0.45" y="0.45" width="6.3" height="5" rx="0.9" fill="none" stroke="#fff" stroke-width="0.9"/><rect x="0.45" y="0.45" width="6.3" height="1.5" rx="0.5" fill="#fff"/><rect x="3.15" y="3.85" width="6.5" height="5.3" rx="0.9" fill="#363944" stroke="#fff" stroke-width="0.9"/><rect x="3.15" y="3.85" width="6.5" height="1.6" rx="0.5" fill="#fff"/></svg><div style="position:absolute;left:2px;top:324.6px;width:172px;height:17.2px;background:#284cb8;border-radius:1.5px;"></div><span class="t" style="left:6.30px;top:329.99px;font-size:8.2px;color:#f2f2f2;transform:scaleX(0.8915);">Scène</span><div style="position:absolute;left:3.1px;top:442px;width:14.2px;height:13.8px;background:#363944;border-radius:1.5px;"></div><div style="position:absolute;left:20.2px;top:442px;width:14.2px;height:13.8px;background:#363944;border-radius:1.5px;"></div><div style="position:absolute;left:40.1px;top:442px;width:14.2px;height:13.8px;background:#363944;border-radius:1.5px;"></div><div style="position:absolute;left:61px;top:442px;width:14.2px;height:13.8px;background:#363944;border-radius:1.5px;"></div><div style="position:absolute;left:77.8px;top:442px;width:14.2px;height:13.8px;background:#363944;border-radius:1.5px;"></div><svg style="position:absolute;left:6.2px;top:445px;width:8px;height:8px;overflow:visible" viewBox="0 0 8 8" ><path d="M4 0.3 V7.7 M0.3 4 H7.7" stroke="#fff" stroke-width="1.3" fill="none"/></svg><svg style="position:absolute;left:23.3px;top:444.4px;width:8px;height:9px;overflow:visible" viewBox="0 0 8 9" ><path d="M0 1.5 H8" stroke="#fff" stroke-width="1"/><path d="M2.8 1.3 V0.5 H5.2 V1.3" stroke="#fff" stroke-width="0.9" fill="none"/><path d="M1.1 2 V7.6 Q1.1 8.5 2 8.5 H6 Q6.9 8.5 6.9 7.6 V2" stroke="#fff" stroke-width="1.1" fill="none"/><rect x="2.7" y="3" width="2.6" height="4" fill="#fff" opacity="0.55"/></svg><svg style="position:absolute;left:43.3px;top:444.8px;width:8px;height:8.4px;overflow:visible" viewBox="0 0 8 8.4" ><rect x="0.5" y="0.5" width="7" height="7.4" rx="1.2" fill="none" stroke="#fff" stroke-width="1"/><rect x="1.4" y="1.4" width="2.6" height="5.6" fill="#fff"/><rect x="4" y="1.4" width="2.6" height="5.6" fill="#fff" opacity="0.35"/></svg><svg style="position:absolute;left:64.1px;top:446.8px;width:8px;height:4.4px;overflow:visible" viewBox="0 0 8 4.4" ><path d="M0.5 4 L4 0.6 L7.5 4" stroke="#fff" stroke-width="1.1" fill="none"/></svg><svg style="position:absolute;left:80.9px;top:447px;width:8px;height:4.4px;overflow:visible" viewBox="0 0 8 4.4" ><path d="M0.5 0.4 L4 3.8 L7.5 0.4" stroke="#fff" stroke-width="1.1" fill="none"/></svg><div style="position:absolute;left:180.7px;top:342.9px;width:166.5px;height:18.8px;background:#284cb8;border-radius:1.5px;"></div><svg style="position:absolute;left:185px;top:328.8px;width:9.975px;height:9.450000000000001px;overflow:visible" viewBox="0 0 9.5 9" ><path d="M0 3 H2 L4.6 0.6 V8.4 L2 6 H0 Z" fill="#fff"/><path d="M5.8 2.6 A2.4 2.4 0 0 1 5.8 6.4" fill="none" stroke="#fff" stroke-width="1"/><path d="M7 0.9 A4.4 4.4 0 0 1 7 8.1" fill="none" stroke="#fff" stroke-width="1"/></svg><span class="t" style="left:195.60px;top:330.69px;font-size:8.2px;color:#f2f2f2;transform:scaleX(0.9929);">gnk;lbnkl</span><svg style="position:absolute;left:315.6px;top:329.3px;width:9.6px;height:7.8px;overflow:visible" viewBox="0 0 9.6 7.8" ><path d="M0 3.9 C1.6 -0.2 8 -0.2 9.6 3.9 C8 8 1.6 8 0 3.9 Z" fill="#fff"/><circle cx="4.8" cy="3.9" r="1.85" fill="#272a33"/><circle cx="4.8" cy="3.9" r="0.95" fill="#fff"/></svg><svg style="position:absolute;left:331.6px;top:329.3px;width:7.4px;height:8.7px;overflow:visible" viewBox="0 0 7.4 8.7" ><path d="M1.6 3.4 V2.5 A2 2 0 0 1 5.7 2.5 V4.4" fill="none" stroke="#9b9b9b" stroke-width="1.1"/><rect x="0.1" y="4.3" width="7.2" height="4.4" rx="0.5" fill="#9b9b9b"/></svg><svg style="position:absolute;left:186.2px;top:347.5px;width:7.6px;height:9.4px;overflow:visible" viewBox="0 0 7.6 9.4" ><rect x="2.1" y="0" width="3.4" height="6" rx="1.7" fill="#fff"/><path d="M0.7 4.2 A3.1 3.1 0 0 0 6.9 4.2" fill="none" stroke="#fff" stroke-width="0.9"/><rect x="3.3" y="7" width="1" height="1.6" fill="#fff"/><rect x="1.6" y="8.4" width="4.4" height="0.9" fill="#fff"/></svg><span class="t" style="left:195.60px;top:349.49px;font-size:8.2px;color:#f2f2f2;transform:scaleX(1.0277);">fvbjnbfjf</span><svg style="position:absolute;left:315.6px;top:348.1px;width:9.6px;height:7.8px;overflow:visible" viewBox="0 0 9.6 7.8" ><path d="M0 3.9 C1.6 -0.2 8 -0.2 9.6 3.9 C8 8 1.6 8 0 3.9 Z" fill="#fff"/><circle cx="4.8" cy="3.9" r="1.85" fill="#284cb8"/><circle cx="4.8" cy="3.9" r="0.95" fill="#fff"/></svg><svg style="position:absolute;left:331.6px;top:348.1px;width:7.4px;height:8.7px;overflow:visible" viewBox="0 0 7.4 8.7" ><path d="M1.6 3.4 V2.5 A2 2 0 0 1 5.7 2.5 V4.4" fill="none" stroke="#a39c84" stroke-width="1.1"/><rect x="0.1" y="4.3" width="7.2" height="4.4" rx="0.5" fill="#a39c84"/></svg><svg style="position:absolute;left:185.2px;top:366.70000000000005px;width:9.4px;height:8.8px;overflow:visible" viewBox="0 0 9.4 8.8" ><rect x="0.6" y="0.6" width="8.2" height="6.4" rx="1.2" fill="none" stroke="#fff" stroke-width="1.2"/><rect x="2.6" y="7.6" width="4.2" height="1" fill="#fff"/></svg><span class="t" style="left:195.60px;top:368.29px;font-size:8.2px;color:#f2f2f2;transform:scaleX(0.9811);">sdvbhvbh</span><svg style="position:absolute;left:315.6px;top:366.90000000000003px;width:9.6px;height:7.8px;overflow:visible" viewBox="0 0 9.6 7.8" ><path d="M0 3.9 C1.6 -0.2 8 -0.2 9.6 3.9 C8 8 1.6 8 0 3.9 Z" fill="#fff"/><circle cx="4.8" cy="3.9" r="1.85" fill="#272a33"/><circle cx="4.8" cy="3.9" r="0.95" fill="#fff"/></svg><svg style="position:absolute;left:331.6px;top:366.90000000000003px;width:7.4px;height:8.7px;overflow:visible" viewBox="0 0 7.4 8.7" ><path d="M1.6 3.4 V2.5 A2 2 0 0 1 5.7 2.5 V4.4" fill="none" stroke="#9b9b9b" stroke-width="1.1"/><rect x="0.1" y="4.3" width="7.2" height="4.4" rx="0.5" fill="#9b9b9b"/></svg><svg style="position:absolute;left:185.2px;top:385.6px;width:9.4px;height:8.8px;overflow:visible" viewBox="0 0 9.4 8.8" ><rect x="0.6" y="0.6" width="8.2" height="6.4" rx="1.2" fill="none" stroke="#fff" stroke-width="1.2"/><rect x="2.6" y="7.6" width="4.2" height="1" fill="#fff"/></svg><span class="t" style="left:195.60px;top:387.19px;font-size:8.2px;color:#f2f2f2;transform:scaleX(1.0243);">uiuirweuir</span><svg style="position:absolute;left:315.6px;top:385.8px;width:9.6px;height:7.8px;overflow:visible" viewBox="0 0 9.6 7.8" ><path d="M0 3.9 C1.6 -0.2 8 -0.2 9.6 3.9 C8 8 1.6 8 0 3.9 Z" fill="#fff"/><circle cx="4.8" cy="3.9" r="1.85" fill="#272a33"/><circle cx="4.8" cy="3.9" r="0.95" fill="#fff"/></svg><svg style="position:absolute;left:331.6px;top:385.8px;width:7.4px;height:8.7px;overflow:visible" viewBox="0 0 7.4 8.7" ><path d="M1.6 3.4 V2.5 A2 2 0 0 1 5.7 2.5 V4.4" fill="none" stroke="#9b9b9b" stroke-width="1.1"/><rect x="0.1" y="4.3" width="7.2" height="4.4" rx="0.5" fill="#9b9b9b"/></svg><svg style="position:absolute;left:187.8px;top:405.8px;width:3.8px;height:6px;overflow:visible" viewBox="0 0 3.8 6" ><path d="M0 0 L3.8 3 L0 6 Z" fill="#fff"/></svg><svg style="position:absolute;left:199px;top:404.2px;width:9.4px;height:8.8px;overflow:visible" viewBox="0 0 9.4 8.8" ><path d="M0.6 1.4 Q0.6 0.6 1.4 0.6 H3.4 L4.4 1.8 H7.6 Q8.4 1.8 8.4 2.6 V7.4 Q8.4 8.2 7.6 8.2 H1.4 Q0.6 8.2 0.6 7.4 Z" fill="none" stroke="#fff" stroke-width="1.2"/><path d="M2.6 4.2 H9.2 L8 8.2 H1.4 Z" fill="#fff"/></svg><span class="t" style="left:209.00px;top:405.99px;font-size:8.2px;color:#f2f2f2;transform:scaleX(1.0297);">ytfgtfgthtgftg</span><svg style="position:absolute;left:315.6px;top:404.6px;width:9.6px;height:7.8px;overflow:visible" viewBox="0 0 9.6 7.8" ><path d="M0 3.9 C1.6 -0.2 8 -0.2 9.6 3.9 C8 8 1.6 8 0 3.9 Z" fill="#fff"/><circle cx="4.8" cy="3.9" r="1.85" fill="#272a33"/><circle cx="4.8" cy="3.9" r="0.95" fill="#fff"/></svg><svg style="position:absolute;left:331.6px;top:404.6px;width:7.4px;height:8.7px;overflow:visible" viewBox="0 0 7.4 8.7" ><path d="M1.6 3.4 V2.5 A2 2 0 0 1 5.7 2.5 V4.4" fill="none" stroke="#9b9b9b" stroke-width="1.1"/><rect x="0.1" y="4.3" width="7.2" height="4.4" rx="0.5" fill="#9b9b9b"/></svg><svg style="position:absolute;left:185.2px;top:423.1px;width:9px;height:8.4px;overflow:visible" viewBox="0 0 9 8.4" ><path d="M0 2.4 Q0 1.6 0.8 1.6 H2.2 L3 0.3 H6 L6.8 1.6 H8.2 Q9 1.6 9 2.4 V7.4 Q9 8.2 8.2 8.2 H0.8 Q0 8.2 0 7.4 Z" fill="#fff"/><circle cx="4.5" cy="4.8" r="2.2" fill="#272a33"/><circle cx="4.5" cy="4.8" r="1.1" fill="#fff"/></svg><span class="t" style="left:195.60px;top:424.69px;font-size:8.2px;color:#f2f2f2;transform:scaleX(1.0118);">jniojnejn</span><svg style="position:absolute;left:315.6px;top:423.3px;width:9.6px;height:7.8px;overflow:visible" viewBox="0 0 9.6 7.8" ><path d="M0 3.9 C1.6 -0.2 8 -0.2 9.6 3.9 C8 8 1.6 8 0 3.9 Z" fill="#fff"/><circle cx="4.8" cy="3.9" r="1.85" fill="#272a33"/><circle cx="4.8" cy="3.9" r="0.95" fill="#fff"/></svg><svg style="position:absolute;left:331.6px;top:423.3px;width:7.4px;height:8.7px;overflow:visible" viewBox="0 0 7.4 8.7" ><path d="M1.6 3.4 V2.5 A2 2 0 0 1 5.7 2.5 V4.4" fill="none" stroke="#9b9b9b" stroke-width="1.1"/><rect x="0.1" y="4.3" width="7.2" height="4.4" rx="0.5" fill="#9b9b9b"/></svg><div style="position:absolute;left:349px;top:325.5px;width:3.6px;height:95px;background:#3c404b;border-radius:1.8px;"></div><div style="position:absolute;left:182px;top:442px;width:14.2px;height:13.8px;background:#363944;border-radius:1.5px;"></div><div style="position:absolute;left:199px;top:442px;width:14.2px;height:13.8px;background:#363944;border-radius:1.5px;"></div><div style="position:absolute;left:219.3px;top:442px;width:14.2px;height:13.8px;background:#363944;border-radius:1.5px;"></div><div style="position:absolute;left:239.5px;top:442px;width:14.2px;height:13.8px;background:#363944;border-radius:1.5px;"></div><div style="position:absolute;left:256.2px;top:442px;width:14.2px;height:13.8px;background:#363944;border-radius:1.5px;"></div><svg style="position:absolute;left:185.1px;top:445px;width:8px;height:8px;overflow:visible" viewBox="0 0 8 8" ><path d="M4 0.3 V7.7 M0.3 4 H7.7" stroke="#fff" stroke-width="1.3" fill="none"/></svg><svg style="position:absolute;left:202.1px;top:444.4px;width:8px;height:9px;overflow:visible" viewBox="0 0 8 9" ><path d="M0 1.5 H8" stroke="#fff" stroke-width="1"/><path d="M2.8 1.3 V0.5 H5.2 V1.3" stroke="#fff" stroke-width="0.9" fill="none"/><path d="M1.1 2 V7.6 Q1.1 8.5 2 8.5 H6 Q6.9 8.5 6.9 7.6 V2" stroke="#fff" stroke-width="1.1" fill="none"/><rect x="2.7" y="3" width="2.6" height="4" fill="#fff" opacity="0.55"/></svg><svg style="position:absolute;left:222px;top:444.5px;width:8.8px;height:8.8px;overflow:visible" viewBox="0 0 10 10" ><g transform="translate(5 5)"><rect x="-1.1" y="-5" width="2.2" height="2.4" rx="0.4" transform="rotate(0)" fill="#fff"/><rect x="-1.1" y="-5" width="2.2" height="2.4" rx="0.4" transform="rotate(45)" fill="#fff"/><rect x="-1.1" y="-5" width="2.2" height="2.4" rx="0.4" transform="rotate(90)" fill="#fff"/><rect x="-1.1" y="-5" width="2.2" height="2.4" rx="0.4" transform="rotate(135)" fill="#fff"/><rect x="-1.1" y="-5" width="2.2" height="2.4" rx="0.4" transform="rotate(180)" fill="#fff"/><rect x="-1.1" y="-5" width="2.2" height="2.4" rx="0.4" transform="rotate(225)" fill="#fff"/><rect x="-1.1" y="-5" width="2.2" height="2.4" rx="0.4" transform="rotate(270)" fill="#fff"/><rect x="-1.1" y="-5" width="2.2" height="2.4" rx="0.4" transform="rotate(315)" fill="#fff"/><circle r="3.7" fill="#fff"/><circle r="1.9" fill="#363944"/></g></svg><svg style="position:absolute;left:242.6px;top:446.8px;width:8px;height:4.4px;overflow:visible" viewBox="0 0 8 4.4" ><path d="M0.5 4 L4 0.6 L7.5 4" stroke="#fff" stroke-width="1.1" fill="none"/></svg><svg style="position:absolute;left:259.3px;top:447px;width:8px;height:4.4px;overflow:visible" viewBox="0 0 8 4.4" ><path d="M0.5 0.4 L4 3.8 L7.5 0.4" stroke="#fff" stroke-width="1.1" fill="none"/></svg><span class="t" style="left:362.60px;top:326.19px;font-size:8.2px;color:#f2f2f2;transform:scaleX(1.0419);">fvbjnbfjf</span><span class="t" style="left:559.00px;top:325.97px;font-size:7.8px;color:#6d707b;transform:scaleX(0.9846);">0.0 dB</span><div style="position:absolute;left:380.5px;top:336px;width:135.3px;height:3.4px;background:#276b2c;"></div><div style="position:absolute;left:515.8px;top:336px;width:37px;height:3.4px;background:#7a5c12;"></div><div style="position:absolute;left:552.8px;top:336px;width:29.2px;height:3.4px;background:#7c1f25;"></div><div style="position:absolute;left:479.4px;top:336px;width:1.3px;height:3.4px;background:#7ee57e;"></div><span class="t" style="left:379.35px;top:340.62px;font-size:6.1px;color:#f0f0f0;transform:scaleX(0.8965);">-60</span><div style="position:absolute;left:383.35px;top:338.90000000000003px;width:0.5px;height:1.5px;background:#7d7f88;"></div><span class="t" style="left:395.78px;top:340.62px;font-size:6.1px;color:#f0f0f0;transform:scaleX(0.8965);">-55</span><div style="position:absolute;left:399.78000000000003px;top:338.90000000000003px;width:0.5px;height:1.5px;background:#7d7f88;"></div><span class="t" style="left:412.21px;top:340.62px;font-size:6.1px;color:#f0f0f0;transform:scaleX(0.8965);">-50</span><div style="position:absolute;left:416.21000000000004px;top:338.90000000000003px;width:0.5px;height:1.5px;background:#7d7f88;"></div><span class="t" style="left:428.64px;top:340.62px;font-size:6.1px;color:#f0f0f0;transform:scaleX(0.8965);">-45</span><div style="position:absolute;left:432.64000000000004px;top:338.90000000000003px;width:0.5px;height:1.5px;background:#7d7f88;"></div><span class="t" style="left:445.07px;top:340.62px;font-size:6.1px;color:#f0f0f0;transform:scaleX(0.8965);">-40</span><div style="position:absolute;left:449.07000000000005px;top:338.90000000000003px;width:0.5px;height:1.5px;background:#7d7f88;"></div><span class="t" style="left:461.50px;top:340.62px;font-size:6.1px;color:#f0f0f0;transform:scaleX(0.8965);">-35</span><div style="position:absolute;left:465.5px;top:338.90000000000003px;width:0.5px;height:1.5px;background:#7d7f88;"></div><span class="t" style="left:477.93px;top:340.62px;font-size:6.1px;color:#f0f0f0;transform:scaleX(0.8965);">-30</span><div style="position:absolute;left:481.93px;top:338.90000000000003px;width:0.5px;height:1.5px;background:#7d7f88;"></div><span class="t" style="left:494.36px;top:340.62px;font-size:6.1px;color:#f0f0f0;transform:scaleX(0.8965);">-25</span><div style="position:absolute;left:498.36px;top:338.90000000000003px;width:0.5px;height:1.5px;background:#7d7f88;"></div><span class="t" style="left:510.79px;top:340.62px;font-size:6.1px;color:#f0f0f0;transform:scaleX(0.8965);">-20</span><div style="position:absolute;left:514.79px;top:338.90000000000003px;width:0.5px;height:1.5px;background:#7d7f88;"></div><span class="t" style="left:527.22px;top:340.62px;font-size:6.1px;color:#f0f0f0;transform:scaleX(0.8965);">-15</span><div style="position:absolute;left:531.22px;top:338.90000000000003px;width:0.5px;height:1.5px;background:#7d7f88;"></div><span class="t" style="left:543.65px;top:340.62px;font-size:6.1px;color:#f0f0f0;transform:scaleX(0.8965);">-10</span><div style="position:absolute;left:547.6500000000001px;top:338.90000000000003px;width:0.5px;height:1.5px;background:#7d7f88;"></div><span class="t" style="left:561.73px;top:340.62px;font-size:6.1px;color:#f0f0f0;transform:scaleX(0.8484);">-5</span><div style="position:absolute;left:564.08px;top:338.90000000000003px;width:0.5px;height:1.5px;background:#7d7f88;"></div><span class="t" style="left:578.90px;top:340.62px;font-size:6.1px;color:#f0f0f0;transform:scaleX(0.9143);">0</span><div style="position:absolute;left:580.51px;top:338.90000000000003px;width:0.5px;height:1.5px;background:#7d7f88;"></div><div style="position:absolute;left:363px;top:336px;width:13.4px;height:13.4px;background:#363944;border-radius:1.5px;"></div><svg style="position:absolute;left:368.62px;top:338.17px;width:2.16px;height:8.76px;overflow:visible" viewBox="0 0 2.16 8.76" ><circle cx="1.08" cy="1.08" r="1.08" fill="#fff"/><circle cx="1.08" cy="4.38" r="1.08" fill="#fff"/><circle cx="1.08" cy="7.68" r="1.08" fill="#fff"/></svg><div style="position:absolute;left:363px;top:351.4px;width:13.4px;height:13px;background:#363944;border-radius:1.5px;"></div><svg style="position:absolute;left:365px;top:353.6px;width:9.31px;height:8.82px;overflow:visible" viewBox="0 0 9.5 9" ><path d="M0 3 H2 L4.6 0.6 V8.4 L2 6 H0 Z" fill="#fff"/><path d="M5.8 2.6 A2.4 2.4 0 0 1 5.8 6.4" fill="none" stroke="#fff" stroke-width="1"/><path d="M7 0.9 A4.4 4.4 0 0 1 7 8.1" fill="none" stroke="#fff" stroke-width="1"/></svg><div style="position:absolute;left:380.5px;top:358.5px;width:195px;height:2px;background:#3f63d4;border-radius:1px;"></div><div style="position:absolute;left:389.6px;top:356.9px;width:0.5px;height:5.2px;background:rgba(150,160,200,0.22);"></div><div style="position:absolute;left:397.5px;top:356.9px;width:0.5px;height:5.2px;background:rgba(150,160,200,0.22);"></div><div style="position:absolute;left:405.4px;top:356.9px;width:0.5px;height:5.2px;background:rgba(150,160,200,0.22);"></div><div style="position:absolute;left:414.8px;top:356.9px;width:0.5px;height:5.2px;background:rgba(150,160,200,0.22);"></div><div style="position:absolute;left:426px;top:356.9px;width:0.5px;height:5.2px;background:rgba(150,160,200,0.22);"></div><div style="position:absolute;left:439.7px;top:356.9px;width:0.5px;height:5.2px;background:rgba(150,160,200,0.22);"></div><div style="position:absolute;left:457px;top:356.9px;width:0.5px;height:5.2px;background:rgba(150,160,200,0.22);"></div><div style="position:absolute;left:474px;top:356.9px;width:0.5px;height:5.2px;background:rgba(150,160,200,0.22);"></div><div style="position:absolute;left:492px;top:356.9px;width:0.5px;height:5.2px;background:rgba(150,160,200,0.22);"></div><div style="position:absolute;left:510px;top:356.9px;width:0.5px;height:5.2px;background:rgba(150,160,200,0.22);"></div><div style="position:absolute;left:530px;top:356.9px;width:0.5px;height:5.2px;background:rgba(150,160,200,0.22);"></div><div style="position:absolute;left:552px;top:356.9px;width:0.5px;height:5.2px;background:rgba(150,160,200,0.22);"></div><div style="position:absolute;left:570px;top:356.6px;width:12.2px;height:6.2px;background:#fff;border-radius:3.1px;"></div><div style="position:absolute;left:360px;top:367.6px;width:224.5px;height:0.6px;background:#33363f;"></div><span class="t" style="left:362.60px;top:371.79px;font-size:8.2px;color:#f2f2f2;transform:scaleX(0.9899);">gnk;lbnkl</span><span class="t" style="left:553.00px;top:371.57px;font-size:7.8px;color:#6d707b;transform:scaleX(0.9564);">-16.0 dB</span><div style="position:absolute;left:380.5px;top:380.5px;width:135.3px;height:4px;background:#276b2c;"></div><div style="position:absolute;left:515.8px;top:380.5px;width:37px;height:4px;background:#7a5c12;"></div><div style="position:absolute;left:552.8px;top:380.5px;width:29.2px;height:4px;background:#7c1f25;"></div><div style="position:absolute;left:383px;top:380.5px;width:85px;height:4px;background:#35d648;"></div><div style="position:absolute;left:468px;top:380.5px;width:2.1999999999999886px;height:4px;background:#0c0d10;"></div><div style="position:absolute;left:470.2px;top:380.5px;width:32.10000000000002px;height:4px;background:#35d648;"></div><div style="position:absolute;left:516px;top:380.5px;width:1.6px;height:4px;background:#f0b52a;"></div><div style="position:absolute;left:380.2px;top:380.5px;width:1.8px;height:4px;background:#f0506a;"></div><div style="position:absolute;left:380.5px;top:385.5px;width:135.3px;height:4px;background:#276b2c;"></div><div style="position:absolute;left:515.8px;top:385.5px;width:37px;height:4px;background:#7a5c12;"></div><div style="position:absolute;left:552.8px;top:385.5px;width:29.2px;height:4px;background:#7c1f25;"></div><div style="position:absolute;left:383px;top:385.5px;width:79px;height:4px;background:#35d648;"></div><div style="position:absolute;left:462px;top:385.5px;width:2px;height:4px;background:#0c0d10;"></div><div style="position:absolute;left:464px;top:385.5px;width:27.80000000000001px;height:4px;background:#35d648;"></div><div style="position:absolute;left:516px;top:385.5px;width:1.6px;height:4px;background:#f0b52a;"></div><div style="position:absolute;left:380.2px;top:385.5px;width:1.8px;height:4px;background:#f0506a;"></div><span class="t" style="left:379.35px;top:390.22px;font-size:6.1px;color:#f0f0f0;transform:scaleX(0.8965);">-60</span><div style="position:absolute;left:383.35px;top:388.5px;width:0.5px;height:1.5px;background:#7d7f88;"></div><span class="t" style="left:395.78px;top:390.22px;font-size:6.1px;color:#f0f0f0;transform:scaleX(0.8965);">-55</span><div style="position:absolute;left:399.78000000000003px;top:388.5px;width:0.5px;height:1.5px;background:#7d7f88;"></div><span class="t" style="left:412.21px;top:390.22px;font-size:6.1px;color:#f0f0f0;transform:scaleX(0.8965);">-50</span><div style="position:absolute;left:416.21000000000004px;top:388.5px;width:0.5px;height:1.5px;background:#7d7f88;"></div><span class="t" style="left:428.64px;top:390.22px;font-size:6.1px;color:#f0f0f0;transform:scaleX(0.8965);">-45</span><div style="position:absolute;left:432.64000000000004px;top:388.5px;width:0.5px;height:1.5px;background:#7d7f88;"></div><span class="t" style="left:445.07px;top:390.22px;font-size:6.1px;color:#f0f0f0;transform:scaleX(0.8965);">-40</span><div style="position:absolute;left:449.07000000000005px;top:388.5px;width:0.5px;height:1.5px;background:#7d7f88;"></div><span class="t" style="left:461.50px;top:390.22px;font-size:6.1px;color:#f0f0f0;transform:scaleX(0.8965);">-35</span><div style="position:absolute;left:465.5px;top:388.5px;width:0.5px;height:1.5px;background:#7d7f88;"></div><span class="t" style="left:477.93px;top:390.22px;font-size:6.1px;color:#f0f0f0;transform:scaleX(0.8965);">-30</span><div style="position:absolute;left:481.93px;top:388.5px;width:0.5px;height:1.5px;background:#7d7f88;"></div><span class="t" style="left:494.36px;top:390.22px;font-size:6.1px;color:#f0f0f0;transform:scaleX(0.8965);">-25</span><div style="position:absolute;left:498.36px;top:388.5px;width:0.5px;height:1.5px;background:#7d7f88;"></div><span class="t" style="left:510.79px;top:390.22px;font-size:6.1px;color:#f0f0f0;transform:scaleX(0.8965);">-20</span><div style="position:absolute;left:514.79px;top:388.5px;width:0.5px;height:1.5px;background:#7d7f88;"></div><span class="t" style="left:527.22px;top:390.22px;font-size:6.1px;color:#f0f0f0;transform:scaleX(0.8965);">-15</span><div style="position:absolute;left:531.22px;top:388.5px;width:0.5px;height:1.5px;background:#7d7f88;"></div><span class="t" style="left:543.65px;top:390.22px;font-size:6.1px;color:#f0f0f0;transform:scaleX(0.8965);">-10</span><div style="position:absolute;left:547.6500000000001px;top:388.5px;width:0.5px;height:1.5px;background:#7d7f88;"></div><span class="t" style="left:561.73px;top:390.22px;font-size:6.1px;color:#f0f0f0;transform:scaleX(0.8484);">-5</span><div style="position:absolute;left:564.08px;top:388.5px;width:0.5px;height:1.5px;background:#7d7f88;"></div><span class="t" style="left:578.90px;top:390.22px;font-size:6.1px;color:#f0f0f0;transform:scaleX(0.9143);">0</span><div style="position:absolute;left:580.51px;top:388.5px;width:0.5px;height:1.5px;background:#7d7f88;"></div><div style="position:absolute;left:363px;top:381.4px;width:13.4px;height:13.4px;background:#363944;border-radius:1.5px;"></div><svg style="position:absolute;left:368.62px;top:383.57px;width:2.16px;height:8.76px;overflow:visible" viewBox="0 0 2.16 8.76" ><circle cx="1.08" cy="1.08" r="1.08" fill="#fff"/><circle cx="1.08" cy="4.38" r="1.08" fill="#fff"/><circle cx="1.08" cy="7.68" r="1.08" fill="#fff"/></svg><div style="position:absolute;left:363px;top:396.8px;width:13.4px;height:13px;background:#363944;border-radius:1.5px;"></div><svg style="position:absolute;left:365px;top:399px;width:9.31px;height:8.82px;overflow:visible" viewBox="0 0 9.5 9" ><path d="M0 3 H2 L4.6 0.6 V8.4 L2 6 H0 Z" fill="#fff"/><path d="M5.8 2.6 A2.4 2.4 0 0 1 5.8 6.4" fill="none" stroke="#fff" stroke-width="1"/><path d="M7 0.9 A4.4 4.4 0 0 1 7 8.1" fill="none" stroke="#fff" stroke-width="1"/></svg><div style="position:absolute;left:380.5px;top:403.8px;width:201px;height:2px;background:#1f2128;border-radius:1px;"></div><div style="position:absolute;left:380.5px;top:403.8px;width:105px;height:2px;background:#3f63d4;border-radius:1px;"></div><div style="position:absolute;left:389.6px;top:402.2px;width:0.5px;height:5.2px;background:rgba(150,160,200,0.18);"></div><div style="position:absolute;left:397.5px;top:402.2px;width:0.5px;height:5.2px;background:rgba(150,160,200,0.18);"></div><div style="position:absolute;left:405.4px;top:402.2px;width:0.5px;height:5.2px;background:rgba(150,160,200,0.18);"></div><div style="position:absolute;left:414.8px;top:402.2px;width:0.5px;height:5.2px;background:rgba(150,160,200,0.18);"></div><div style="position:absolute;left:426px;top:402.2px;width:0.5px;height:5.2px;background:rgba(150,160,200,0.18);"></div><div style="position:absolute;left:439.7px;top:402.2px;width:0.5px;height:5.2px;background:rgba(150,160,200,0.18);"></div><div style="position:absolute;left:457px;top:402.2px;width:0.5px;height:5.2px;background:rgba(150,160,200,0.18);"></div><div style="position:absolute;left:474px;top:402.2px;width:0.5px;height:5.2px;background:rgba(150,160,200,0.18);"></div><div style="position:absolute;left:492px;top:402.2px;width:0.5px;height:5.2px;background:rgba(150,160,200,0.18);"></div><div style="position:absolute;left:510px;top:402.2px;width:0.5px;height:5.2px;background:rgba(150,160,200,0.18);"></div><div style="position:absolute;left:530px;top:402.2px;width:0.5px;height:5.2px;background:rgba(150,160,200,0.18);"></div><div style="position:absolute;left:552px;top:402.2px;width:0.5px;height:5.2px;background:rgba(150,160,200,0.18);"></div><div style="position:absolute;left:482.8px;top:401.8px;width:11.8px;height:6.2px;background:#fff;border-radius:3.1px;"></div><div style="position:absolute;left:358.3px;top:412.6px;width:227.7px;height:27.6px;background:#1c1e25;"></div><div style="position:absolute;left:358.3px;top:412.3px;width:227.7px;height:0.6px;background:#3a3d47;"></div><div style="position:absolute;left:361px;top:442px;width:14.4px;height:13.6px;background:#363944;border-radius:1.5px;"></div><svg style="position:absolute;left:363.2px;top:444.2px;width:10px;height:9.6px;overflow:visible" viewBox="0 0 10 9.6" ><g transform="translate(3.7 5.9)"><rect x="-0.75" y="-3.50" width="1.50" height="1.30" transform="rotate(0.0)" fill="#fff"/><rect x="-0.75" y="-3.50" width="1.50" height="1.30" transform="rotate(45.0)" fill="#fff"/><rect x="-0.75" y="-3.50" width="1.50" height="1.30" transform="rotate(90.0)" fill="#fff"/><rect x="-0.75" y="-3.50" width="1.50" height="1.30" transform="rotate(135.0)" fill="#fff"/><rect x="-0.75" y="-3.50" width="1.50" height="1.30" transform="rotate(180.0)" fill="#fff"/><rect x="-0.75" y="-3.50" width="1.50" height="1.30" transform="rotate(225.0)" fill="#fff"/><rect x="-0.75" y="-3.50" width="1.50" height="1.30" transform="rotate(270.0)" fill="#fff"/><rect x="-0.75" y="-3.50" width="1.50" height="1.30" transform="rotate(315.0)" fill="#fff"/><circle r="2.6" fill="#fff"/><circle r="1.25" fill="#363944"/></g><circle cx="8" cy="2.5" r="1.35" fill="none" stroke="#fff" stroke-width="1.1"/></svg><div style="position:absolute;left:382px;top:442px;width:14px;height:13.6px;background:#363944;border-radius:1.5px;"></div><svg style="position:absolute;left:387.92px;top:444.37px;width:2.16px;height:8.76px;overflow:visible" viewBox="0 0 2.16 8.76" ><circle cx="1.08" cy="1.08" r="1.08" fill="#fff"/><circle cx="1.08" cy="4.38" r="1.08" fill="#fff"/><circle cx="1.08" cy="7.68" r="1.08" fill="#fff"/></svg><div style="position:absolute;left:592.2px;top:326.2px;width:113.3px;height:17.8px;background:#3c404b;border-radius:2px;"></div><div style="position:absolute;left:690.6px;top:326.2px;width:0.5px;height:17.8px;background:#2b2e37;"></div><span class="t" style="left:598.00px;top:331.79px;font-size:8.2px;color:#f2f2f2;transform:scaleX(0.9535);">Vervagen</span><svg style="position:absolute;left:696px;top:334.3px;width:5.4px;height:3px;overflow:visible" viewBox="0 0 5.4 3" ><path d="M0 0 H5.4 L2.7 3 Z" fill="#fff"/></svg><span class="t" style="left:591.80px;top:351.79px;font-size:8.2px;color:#f2f2f2;transform:scaleX(0.9690);">Duur</span><div style="position:absolute;left:612px;top:346.7px;width:93.5px;height:17.4px;background:#3c404b;border-radius:2px;"></div><div style="position:absolute;left:690.6px;top:346.7px;width:0.5px;height:17.4px;background:#2b2e37;"></div><span class="t" style="left:618.80px;top:351.79px;font-size:8.2px;color:#f2f2f2;transform:scaleX(0.9531);">300 ms</span><svg style="position:absolute;left:695.6px;top:349.4px;width:5.6px;height:3.08px;overflow:visible" viewBox="0 0 8 4.4" ><path d="M0.5 4 L4 0.6 L7.5 4" stroke="#fff" stroke-width="1.1" fill="none"/></svg><svg style="position:absolute;left:695.6px;top:357.4px;width:5.6px;height:3.08px;overflow:visible" viewBox="0 0 8 4.4" ><path d="M0.5 0.4 L4 3.8 L7.5 0.4" stroke="#fff" stroke-width="1.1" fill="none"/></svg><div style="position:absolute;left:649.3px;top:365.8px;width:15px;height:15px;background:#363944;border-radius:1.5px;"></div><svg style="position:absolute;left:652.8px;top:369.3px;width:8px;height:8px;overflow:visible" viewBox="0 0 8 8" ><path d="M4 0.3 V7.7 M0.3 4 H7.7" stroke="#fff" stroke-width="1.3" fill="none"/></svg><svg style="position:absolute;left:673px;top:369px;width:8px;height:9px;overflow:visible" viewBox="0 0 8 9" ><path d="M0 1.5 H8" stroke="#fff" stroke-width="1"/><path d="M2.8 1.3 V0.5 H5.2 V1.3" stroke="#fff" stroke-width="0.9" fill="none"/><path d="M1.1 2 V7.6 Q1.1 8.5 2 8.5 H6 Q6.9 8.5 6.9 7.6 V2" stroke="#fff" stroke-width="1.1" fill="none"/><rect x="2.7" y="3" width="2.6" height="4" fill="#fff" opacity="0.55"/></svg><svg style="position:absolute;left:695.57px;top:368.97px;width:2.16px;height:8.76px;overflow:visible" viewBox="0 0 2.16 8.76" ><circle cx="1.08" cy="1.08" r="1.08" fill="#fff"/><circle cx="1.08" cy="4.38" r="1.08" fill="#fff"/><circle cx="1.08" cy="7.68" r="1.08" fill="#fff"/></svg><div style="position:absolute;left:715px;top:326.2px;width:181px;height:18px;background:#3c404b;border-radius:2px;"></div><span class="t" style="left:773.60px;top:332.39px;font-size:8.2px;color:#f2f2f2;transform:scaleX(0.9871);">Streamen starten</span><div style="position:absolute;left:715px;top:347.6px;width:181px;height:18px;background:#1a1b21;border-radius:2px;"></div><span class="t" style="left:776.00px;top:354.19px;font-size:8.2px;color:#f2f2f2;transform:scaleX(0.9963);">Opname starten</span><div style="position:absolute;left:715px;top:368.8px;width:159.4px;height:18px;background:#3c404b;border-radius:2px;"></div><span class="t" style="left:752.50px;top:375.39px;font-size:8.2px;color:#f2f2f2;transform:scaleX(0.9858);">Virtuele camera starten</span><div style="position:absolute;left:715px;top:390px;width:181px;height:18px;background:#3c404b;border-radius:2px;"></div><span class="t" style="left:781.60px;top:395.69px;font-size:8.2px;color:#f2f2f2;transform:scaleX(0.9917);">Studiomodus</span><div style="position:absolute;left:715px;top:411.2px;width:181px;height:18px;background:#3c404b;border-radius:2px;"></div><span class="t" style="left:784.60px;top:416.89px;font-size:8.2px;color:#f2f2f2;transform:scaleX(0.9995);">Instellingen</span><div style="position:absolute;left:715px;top:432.4px;width:181px;height:18px;background:#3c404b;border-radius:2px;"></div><span class="t" style="left:789.80px;top:438.09px;font-size:8.2px;color:#f2f2f2;transform:scaleX(0.9934);">Afsluiten</span><div style="position:absolute;left:877.3px;top:368.8px;width:18.7px;height:18px;background:#3c404b;border-radius:2px;"></div><svg style="position:absolute;left:882.3px;top:373.4px;width:8.8px;height:8.8px;overflow:visible" viewBox="0 0 10 10" ><g transform="translate(5 5)"><rect x="-1.1" y="-5" width="2.2" height="2.4" rx="0.4" transform="rotate(0)" fill="#fff"/><rect x="-1.1" y="-5" width="2.2" height="2.4" rx="0.4" transform="rotate(45)" fill="#fff"/><rect x="-1.1" y="-5" width="2.2" height="2.4" rx="0.4" transform="rotate(90)" fill="#fff"/><rect x="-1.1" y="-5" width="2.2" height="2.4" rx="0.4" transform="rotate(135)" fill="#fff"/><rect x="-1.1" y="-5" width="2.2" height="2.4" rx="0.4" transform="rotate(180)" fill="#fff"/><rect x="-1.1" y="-5" width="2.2" height="2.4" rx="0.4" transform="rotate(225)" fill="#fff"/><rect x="-1.1" y="-5" width="2.2" height="2.4" rx="0.4" transform="rotate(270)" fill="#fff"/><rect x="-1.1" y="-5" width="2.2" height="2.4" rx="0.4" transform="rotate(315)" fill="#fff"/><circle r="3.7" fill="#fff"/><circle r="1.9" fill="#3c404b"/></g></svg><div style="position:absolute;left:649.7px;top:458.5px;width:0.7px;height:19px;background:#15161b;"></div><div style="position:absolute;left:668.3px;top:458.5px;width:0.7px;height:19px;background:#15161b;"></div><div style="position:absolute;left:722.2px;top:458.5px;width:0.7px;height:19px;background:#15161b;"></div><div style="position:absolute;left:773.6px;top:458.5px;width:0.7px;height:19px;background:#15161b;"></div><div style="position:absolute;left:825.4px;top:458.5px;width:0.7px;height:19px;background:#15161b;"></div><svg style="position:absolute;left:654.6px;top:465.4px;width:8.4px;height:8px" viewBox="0 0 8 8"><g fill="#3c3f49"><rect x="0" y="5.6" width="1.5" height="2.4"/><rect x="2.1" y="3.8" width="1.5" height="4.2"/><rect x="4.2" y="2" width="1.5" height="6"/><rect x="6.3" y="0" width="1.5" height="8"/></g></svg><svg style="position:absolute;left:674.5px;top:466px;width:8px;height:6px" viewBox="0 0 8 6"><circle cx="4" cy="3" r="1.5" fill="#5d606a"/><path d="M1.6 0.6 A3.4 3.4 0 0 0 1.6 5.4 M6.4 0.6 A3.4 3.4 0 0 1 6.4 5.4" stroke="#5d606a" stroke-width="0.8" fill="none"/></svg><span class="t" style="left:686.80px;top:466.07px;font-size:7.8px;color:#5d606a;transform:scaleX(0.9948);">00:00:00</span><div style="position:absolute;left:727.6px;top:465.2px;width:7.6px;height:7.6px;background:#50535d;border-radius:3.8px;"></div><span class="t" style="left:740.00px;top:466.07px;font-size:7.8px;color:#5d606a;transform:scaleX(0.9882);">00:00:00</span><span class="t" style="left:782.60px;top:466.07px;font-size:7.8px;color:#f2f2f2;transform:scaleX(0.9332);">CPU: 1.5%</span><span class="t" style="left:830.80px;top:466.07px;font-size:7.8px;color:#f2f2f2;transform:scaleX(0.9609);">60.00 / 60.00 FPS</span><div style="position:absolute;left:0;top:477.5px;width:900px;height:28.5px;background:linear-gradient(90deg,#f4e8e0 0%,#f3e9e1 20%,#dff0ea 27%,#cdf0ea 36%,#dcefe2 46%,#eee9dc 55%,#f3e2d6 66%,#f4dfd2 76%,#d9ebe2 86%,#c2ebe5 100%)"></div><svg style="position:absolute;left:13.2px;top:485.4px;width:13px;height:12px" viewBox="0 0 13 12"><defs><linearGradient id="sun2" x1="0" y1="0" x2="1" y2="1"><stop offset="0" stop-color="#ffb62e"/><stop offset="1" stop-color="#ee6a12"/></linearGradient></defs><circle cx="5.8" cy="6" r="5.6" fill="url(#sun2)"/><path d="M5.2 9.6 A1.9 1.9 0 0 1 6 6.2 A2.3 2.3 0 0 1 10.2 6.4 A1.7 1.7 0 0 1 11.4 9.6 Z" fill="#c9dcf2"/></svg><span class="t" style="left:30.00px;top:484.16px;font-size:7.6px;color:#1c1c1c;transform:scaleX(0.8074);">13°C</span><span class="t" style="left:30.00px;top:493.56px;font-size:7.6px;color:#666;transform:scaleX(0.9397);">Meestal zonnig</span><svg style="position:absolute;left:188px;top:485.6px;width:13.6px;height:13.6px" viewBox="0 0 14 14"><defs><linearGradient id="wl2" x1="0" y1="0" x2="1" y2="1"><stop offset="0" stop-color="#55c6f5"/><stop offset="1" stop-color="#0a6fd0"/></linearGradient></defs><g fill="url(#wl2)"><rect x="0" y="0" width="6.6" height="6.6" rx="0.4"/><rect x="7.3" y="0" width="6.6" height="6.6" rx="0.4"/><rect x="0" y="7.3" width="6.6" height="6.6" rx="0.4"/><rect x="7.3" y="7.3" width="6.6" height="6.6" rx="0.4"/></g></svg><div style="position:absolute;left:210.6px;top:483px;width:126.6px;height:18.2px;background:rgba(255,255,255,0.72);border-radius:9.1px;"></div><svg style="position:absolute;left:216.2px;top:488px;width:8.6px;height:8.6px" viewBox="0 0 9 9"><circle cx="3.6" cy="3.6" r="2.9" fill="none" stroke="#222" stroke-width="1"/><path d="M5.8 5.8 L8.4 8.4" stroke="#222" stroke-width="1.1"/></svg><span class="t" style="left:230.80px;top:488.88px;font-size:8px;color:#555;transform:scaleX(1.0005);">Zoeken</span><svg style="position:absolute;left:344.6px;top:486.6px;width:13.4px;height:12px" viewBox="0 0 13.4 12"><rect x="3.4" y="0.4" width="9.6" height="8" rx="1" fill="#d9d9d9" stroke="#f4f4f4" stroke-width="0.6"/><rect x="0.4" y="3" width="9.6" height="8.4" rx="1" fill="#1c1c1c"/><rect x="3" y="3" width="7" height="5.6" fill="#c8c8c8"/><rect x="0.4" y="3" width="2.8" height="8.4" rx="0.8" fill="#1c1c1c"/><rect x="0.4" y="8.4" width="9.6" height="3" rx="0.8" fill="#1c1c1c"/></svg><svg style="position:absolute;left:371px;top:485.6px;width:14.6px;height:12.6px" viewBox="0 0 14.6 12.6"><path d="M0.3 1.2 Q0.3 0.3 1.2 0.3 H4.6 L6 1.8 H13.4 Q14.3 1.8 14.3 2.7 V11 Q14.3 11.9 13.4 11.9 H1.2 Q0.3 11.9 0.3 11 Z" fill="#f7b92a"/><path d="M0.3 3.4 H14.3 V11 Q14.3 11.9 13.4 11.9 H1.2 Q0.3 11.9 0.3 11 Z" fill="#fcd462"/><rect x="3.2" y="8.4" width="8.2" height="3.5" fill="#2f7fd8"/><rect x="3.2" y="8.4" width="8.2" height="1.2" fill="#1a5fb4"/></svg><div style="position:absolute;left:376.4px;top:501.6px;width:3.4px;height:1px;border-radius:1px;background:#777"></div><svg style="position:absolute;left:396.6px;top:486px;width:14.6px;height:13px" viewBox="0 0 14.6 13"><circle cx="11.6" cy="2.6" r="1.7" fill="#5b5fc7"/><rect x="9.2" y="4.8" width="5.2" height="6" rx="1.6" fill="#5b5fc7"/><circle cx="7.4" cy="2" r="2.1" fill="#7b83eb"/><rect x="4" y="4.6" width="7.4" height="7.8" rx="1.8" fill="#7b83eb"/><rect x="0.2" y="3.2" width="7" height="7" rx="0.9" fill="#4b53bc"/><path d="M2 5 H5.4 M3.7 5 V8.8" stroke="#fff" stroke-width="0.9"/></svg><svg style="position:absolute;left:422.2px;top:485.6px;width:14.4px;height:14.4px" viewBox="0 0 14.4 14.4"><defs><linearGradient id="eg2" x1="0" y1="0" x2="1" y2="0.6"><stop offset="0" stop-color="#1b6ec9"/><stop offset="0.6" stop-color="#2aa7d8"/><stop offset="1" stop-color="#5fd35a"/></linearGradient></defs><circle cx="7.2" cy="7.2" r="7" fill="url(#eg2)"/><path d="M1 9 A6.4 6.4 0 0 0 12.6 11 A4.6 4.6 0 0 1 5.4 8.4 Q5 6 7.4 5.6 Q4 4 1 9 Z" fill="#0f4fa8"/><path d="M6.6 8.4 A2.6 2.6 0 0 0 11.8 8.4 Q12 6.4 9.2 6.2 Q6.8 6.4 6.6 8.4 Z" fill="#e6f4f1"/></svg><svg style="position:absolute;left:447.8px;top:485.4px;width:14.6px;height:14.4px" viewBox="0 0 14.6 14.4"><path d="M4.6 3.4 V2 Q4.6 0.5 6 0.5 H8.6 Q10 0.5 10 2 V3.4" fill="none" stroke="#1c5cb0" stroke-width="1"/><rect x="0.4" y="3" width="13.8" height="11" rx="1.6" fill="#174f9e"/><rect x="0.4" y="3" width="13.8" height="3" rx="1.6" fill="#1f62b8"/><rect x="4.2" y="5.6" width="2.7" height="2.7" fill="#f25022"/><rect x="7.5" y="5.6" width="2.7" height="2.7" fill="#7fba00"/><rect x="4.2" y="8.9" width="2.7" height="2.7" fill="#00a4ef"/><rect x="7.5" y="8.9" width="2.7" height="2.7" fill="#ffb900"/></svg><svg style="position:absolute;left:473.8px;top:486px;width:14.4px;height:13.4px" viewBox="0 0 14.4 13.4"><path d="M0.3 0.8 L7.2 4 L14.1 0.8 V10.2 L7.2 13.2 L0.3 10.2 Z" fill="#c4212f"/><path d="M2.9 4.6 L7.2 6.7 L11.5 4.6 V8.8 L7.2 10.8 L2.9 8.8 Z" fill="#f3e6dc"/></svg><svg style="position:absolute;left:499.6px;top:485.6px;width:14.4px;height:14.4px" viewBox="-7.2 -7.2 14.4 14.4"><circle r="7" fill="#fbc116"/><path d="M0 0 L-6.06 -3.5 A7 7 0 0 1 6.06 -3.5 Z" fill="#e33b2e"/><path d="M0 0 L-6.06 -3.5 A7 7 0 0 0 0 7 L3 1 Z" fill="#2da94f"/><path d="M-6.06 -3.5 A7 7 0 0 1 6.06 -3.5 H0 Z" fill="#e33b2e"/><circle r="3.3" fill="#fff"/><circle r="2.6" fill="#3f86f4"/></svg><div style="position:absolute;left:505.2px;top:501.6px;width:3.4px;height:1px;border-radius:1px;background:#777"></div><svg style="position:absolute;left:525.2px;top:485.6px;width:14.4px;height:14.4px" viewBox="-7.2 -7.2 14.4 14.4"><circle r="6.4" fill="none" stroke="#e0435c" stroke-width="1.3"/><ellipse rx="3" ry="5.2" fill="none" stroke="#e0435c" stroke-width="1.1"/></svg><div style="position:absolute;left:530.8px;top:501.6px;width:3.4px;height:1px;border-radius:1px;background:#777"></div><svg style="position:absolute;left:551.2px;top:485.4px;width:14.4px;height:14.4px" viewBox="0 0 8 8"><rect width="8" height="8" fill="#4ea53a"/><rect x="1.4" y="1.6" width="1.9" height="1.9" fill="#0c1a0a"/><rect x="4.7" y="1.6" width="1.9" height="1.9" fill="#0c1a0a"/><rect x="3.1" y="3.4" width="1.8" height="2.6" fill="#0c1a0a"/><rect x="2.2" y="4.4" width="3.6" height="1.8" fill="#0c1a0a"/><rect x="2.2" y="6" width="1" height="0.9" fill="#0c1a0a"/><rect x="4.8" y="6" width="1" height="0.9" fill="#0c1a0a"/></svg><svg style="position:absolute;left:576.8px;top:485.4px;width:14.8px;height:14.8px" viewBox="0 0 14.8 14.8"><path d="M1 14 L1.9 10.6 A6.4 6.4 0 1 1 4.4 13 Z" fill="#f4f7f2" stroke="#1f8f54" stroke-width="1.5"/><path d="M5 4.6 Q5.8 4 6.2 5 L6.6 6 Q6.7 6.4 6.2 6.9 Q7 8.4 8.6 9 Q9.2 8.3 9.6 8.5 L10.6 9 Q11.2 9.4 10.6 10.2 Q9.6 11.2 7.8 10.2 Q5.6 9 4.8 7 Q4.2 5.4 5 4.6 Z" fill="#24955c"/></svg><div style="position:absolute;left:582.6px;top:501.6px;width:3.4px;height:1px;border-radius:1px;background:#777"></div><svg style="position:absolute;left:604.4px;top:486px;width:12.4px;height:13px" viewBox="0 0 12.4 13"><path d="M10.8 0.8 L2.4 11.6" stroke="#222" stroke-width="1.3"/><path d="M7.2 0.6 L3 5.2 H5.6 L2.6 9.6" stroke="#39a86a" stroke-width="1.2" fill="none"/><path d="M0.6 8.8 H3 M0.6 10.6 H2.2" stroke="#5aa0d8" stroke-width="0.8"/></svg><div style="position:absolute;left:608.6px;top:501.6px;width:3.4px;height:1px;border-radius:1px;background:#777"></div><svg style="position:absolute;left:628.6px;top:485px;width:14.8px;height:14.8px" viewBox="0 0 14.8 14.8"><defs><linearGradient id="orb2" x1="0" y1="0" x2="1" y2="1"><stop offset="0" stop-color="#4aa8f0"/><stop offset="0.55" stop-color="#7a5be0"/><stop offset="1" stop-color="#c66ad8"/></linearGradient></defs><circle cx="7.4" cy="7.4" r="7.2" fill="url(#orb2)"/><path d="M4.6 3.6 L7.4 11.4 L10.2 3.6 Q7.4 6 4.6 3.6 Z" fill="#3a4a8a" opacity="0.75"/><path d="M7.4 2 V7" stroke="#cfe0ff" stroke-width="0.8"/></svg><div style="position:absolute;left:634.4px;top:501.6px;width:3.4px;height:1px;border-radius:1px;background:#777"></div><div style="position:absolute;left:651px;top:481.4px;width:22px;height:22px;border-radius:2.5px;background:rgba(255,255,255,0.55)"></div><svg style="position:absolute;left:655.4px;top:485.2px;width:13.4px;height:13.4px" viewBox="-10 -10 20 20"><circle r="10" fill="#18181a"/><circle r="8.7" fill="none" stroke="#cfcfcf" stroke-width="0.7"/><circle cx="0" cy="-4.1" r="3.5" fill="none" stroke="#e4e4e4" stroke-width="1.5" stroke-dasharray="15.5 30" stroke-dashoffset="-2" transform="rotate(0)"/><circle cx="0" cy="-4.1" r="3.5" fill="none" stroke="#e4e4e4" stroke-width="1.5" stroke-dasharray="15.5 30" stroke-dashoffset="-2" transform="rotate(120)"/><circle cx="0" cy="-4.1" r="3.5" fill="none" stroke="#e4e4e4" stroke-width="1.5" stroke-dasharray="15.5 30" stroke-dashoffset="-2" transform="rotate(240)"/></svg><div style="position:absolute;left:658px;top:501.2px;width:8.4px;height:1.4px;border-radius:1px;background:#2f6fd6"></div><svg style="position:absolute;left:713.5px;top:489.6px;width:7px;height:4px" viewBox="0 0 7 4"><path d="M0.5 3.6 L3.5 0.6 L6.5 3.6" stroke="#222" stroke-width="0.8" fill="none"/></svg><svg style="position:absolute;left:731.6px;top:488.2px;width:10px;height:7px" viewBox="0 0 10 7"><path d="M2.4 6.4 A1.9 1.9 0 0 1 2.2 2.7 A2.9 2.9 0 0 1 7.6 2.5 A2 2 0 0 1 7.8 6.4 Z" fill="#d8d4cf" stroke="#444" stroke-width="0.8"/></svg><svg style="position:absolute;left:751.6px;top:487px;width:6.4px;height:10px" viewBox="0 0 6.4 10"><rect x="1.8" y="0.3" width="2.8" height="5.6" rx="1.4" fill="#6c8fe0" stroke="#3c62c8" stroke-width="0.5"/><path d="M0.5 4.6 A2.7 2.7 0 0 0 5.9 4.6 M3.2 7.4 V9.4" stroke="#3c62c8" stroke-width="0.8" fill="none"/></svg><span class="t" style="left:770.60px;top:484.34px;font-size:7.4px;color:#222;transform:scaleX(0.8921);">NLD</span><span class="t" style="left:770.40px;top:494.14px;font-size:7.4px;color:#222;transform:scaleX(0.8866);">INTL</span><svg style="position:absolute;left:795.4px;top:488px;width:9.6px;height:7.6px" viewBox="0 0 10 8"><g fill="none" stroke="#222" stroke-width="0.85"><path d="M0.6 2.8 A6.2 6.2 0 0 1 9.4 2.8"/><path d="M2.1 4.4 A4.1 4.1 0 0 1 7.9 4.4"/><path d="M3.5 5.9 A2.1 2.1 0 0 1 6.5 5.9"/></g><circle cx="5" cy="7.1" r="0.7" fill="#222"/></svg><svg style="position:absolute;left:809px;top:488px;width:10px;height:8px" viewBox="0 0 10 8"><path d="M0.5 2.8 H2 L4 1 V7 L2 5.2 H0.5 Z" fill="none" stroke="#222" stroke-width="0.7"/><g fill="none" stroke="#222" stroke-width="0.7"><path d="M5.2 2.8 A1.8 1.8 0 0 1 5.2 5.2"/><path d="M6.4 1.8 A3.2 3.2 0 0 1 6.4 6.2"/><path d="M7.6 0.8 A4.6 4.6 0 0 1 7.6 7.2"/></g></svg><svg style="position:absolute;left:823px;top:487.6px;width:10.4px;height:8.4px" viewBox="0 0 10.4 8.4"><rect x="0.4" y="2.4" width="8.6" height="5" rx="1" fill="#222"/><rect x="9.2" y="3.8" width="1" height="2.2" fill="#222"/><path d="M1 2.6 V1 H2.6 M2.2 0.4 L3.6 1.6 L2.2 2.6" stroke="#222" stroke-width="0.7" fill="none"/></svg><span class="t" style="left:857.60px;top:484.06px;font-size:7.6px;color:#222;transform:scaleX(0.9256);">12:32</span><span class="t" style="left:842.40px;top:493.86px;font-size:7.6px;color:#222;transform:scaleX(0.9473);">1-10-2025</span><svg style="position:absolute;left:880px;top:487.6px;width:8.6px;height:9.6px" viewBox="0 0 8.6 9.6"><path d="M1 6.8 Q2 5.6 2 3.6 A2.3 2.3 0 0 1 6.6 3.6 Q6.6 5.6 7.6 6.8 Z" fill="#222"/><rect x="3.4" y="7.4" width="1.8" height="1.4" rx="0.6" fill="#222"/><path d="M5.4 0.6 H7.6 L5.6 2.4 H7.8" stroke="#222" stroke-width="0.6" fill="none"/></svg><svg style="position:absolute;left:781px;top:355px;width:34px;height:34px;overflow:visible" viewBox="0 0 34 34"><path d="M6 20 Q5.4 9.6 14 8.9 Q20 7.4 26.6 9.6 Q32.6 12.6 32 22 L32.2 30.6 Q29.6 30 28.4 26 L10.6 26 Q9.6 30 6.6 30.8 Q5.6 26 6 20 Z" fill="#23323c" opacity="0.55" transform="translate(0.4 0.8)"/><path d="M1.4 1.9 L12.6 11.2 L9.4 16.4 L4.2 17.4 L2.8 14.6 Z" fill="#a6e0e9"/><path d="M1.4 1.9 L7.4 16.4" stroke="#7cc6d4" stroke-width="0.8" fill="none"/><path d="M6.2 20 Q5.6 9.8 14 9 Q20 7.6 26.4 9.8 Q32 12.6 31.6 22 L31.8 30.2 Q29.4 29.4 28.2 25.4 L27.4 20.4 Q19 17.4 11.2 20.6 L10.6 25.6 Q9.6 29.6 6.8 30.4 Q5.8 26 6.2 20 Z" fill="#8fd6e3"/><path d="M10.4 13 Q14 10.6 19 10.6" stroke="#b9ebf2" stroke-width="1.2" fill="none" opacity="0.8"/><path d="M11.2 20.6 Q19 16.6 27.4 20.4 L27.2 28 H11 Z" fill="#e6f5f8"/><path d="M12.6 23.4 Q14.4 21.6 16.2 23.4 M21.6 23.4 Q23.4 21.6 25.2 23.4" stroke="#4f8ea8" stroke-width="0.9" fill="none"/><path d="M17.4 25.4 H20.6" stroke="#e48a9a" stroke-width="0.8"/><rect x="8.8" y="27" width="16.6" height="4.6" rx="1.6" fill="#15161a"/><rect x="9.4" y="28.8" width="3.4" height="2.2" rx="1" fill="#fff"/><rect x="21.8" y="28.8" width="3.4" height="2.2" rx="1" fill="#fff"/><rect x="13.8" y="27.8" width="6.8" height="1.5" rx="0.6" fill="#bfe6ee"/><circle cx="28.2" cy="9.8" r="1.5" fill="#c0304c"/></svg></div></div><span class="t" style="left:6.30px;top:268.83px;font-size:7.2px;color:#80838d;transform:scaleX(0.9034);">45%</span><span class="t" style="left:28.00px;top:268.83px;font-size:7.2px;color:#80838d;transform:scaleX(0.9220);">Schaal naar het venster</span><svg style="position:absolute;left:108px;top:270.9px;width:5px;height:3px;overflow:visible" viewBox="0 0 5 3" ><path d="M0 0 H5 L2.5 3 Z" fill="#fff"/></svg><div style="position:absolute;left:0px;top:280px;width:898.6px;height:25px;background:#272a33;border-radius:3px;"></div><svg style="position:absolute;left:7.2px;top:288px;width:6.84px;height:8.46px;overflow:visible" viewBox="0 0 7.6 9.4" ><rect x="2.1" y="0" width="3.4" height="6" rx="1.7" fill="#fff"/><path d="M0.7 4.2 A3.1 3.1 0 0 0 6.9 4.2" fill="none" stroke="#fff" stroke-width="0.9"/><rect x="3.3" y="7" width="1" height="1.6" fill="#fff"/><rect x="1.6" y="8.4" width="4.4" height="0.9" fill="#fff"/></svg><span class="t" style="left:22.00px;top:289.19px;font-size:8.2px;color:#f2f2f2;transform:scaleX(1.0454);">fvbjnbfjf</span><div style="position:absolute;left:125px;top:282.8px;width:81px;height:19px;background:#3c404b;border-radius:2px;"></div><svg style="position:absolute;left:132.6px;top:288px;width:8.8px;height:8.8px;overflow:visible" viewBox="0 0 10 10" ><g transform="translate(5 5)"><rect x="-1.1" y="-5" width="2.2" height="2.4" rx="0.4" transform="rotate(0)" fill="#fff"/><rect x="-1.1" y="-5" width="2.2" height="2.4" rx="0.4" transform="rotate(45)" fill="#fff"/><rect x="-1.1" y="-5" width="2.2" height="2.4" rx="0.4" transform="rotate(90)" fill="#fff"/><rect x="-1.1" y="-5" width="2.2" height="2.4" rx="0.4" transform="rotate(135)" fill="#fff"/><rect x="-1.1" y="-5" width="2.2" height="2.4" rx="0.4" transform="rotate(180)" fill="#fff"/><rect x="-1.1" y="-5" width="2.2" height="2.4" rx="0.4" transform="rotate(225)" fill="#fff"/><rect x="-1.1" y="-5" width="2.2" height="2.4" rx="0.4" transform="rotate(270)" fill="#fff"/><rect x="-1.1" y="-5" width="2.2" height="2.4" rx="0.4" transform="rotate(315)" fill="#fff"/><circle r="3.7" fill="#fff"/><circle r="1.9" fill="#3c404b"/></g></svg><span class="t" style="left:142.70px;top:288.99px;font-size:8.2px;color:#f2f2f2;transform:scaleX(0.9565);">Eigenschappen</span><div style="position:absolute;left:209.3px;top:282.8px;width:48.4px;height:19px;background:#3c404b;border-radius:2px;"></div><svg style="position:absolute;left:217.2px;top:288.3px;width:8px;height:8.4px;overflow:visible" viewBox="0 0 8 8.4" ><rect x="0.5" y="0.5" width="7" height="7.4" rx="1.2" fill="none" stroke="#fff" stroke-width="1"/><rect x="1.4" y="1.4" width="2.6" height="5.6" fill="#fff"/><rect x="4" y="1.4" width="2.6" height="5.6" fill="#fff" opacity="0.35"/></svg><span class="t" style="left:227.30px;top:288.99px;font-size:8.2px;color:#f2f2f2;transform:scaleX(0.9598);">Filters</span><span class="t" style="left:266.70px;top:288.99px;font-size:8.2px;color:#f2f2f2;transform:scaleX(0.9719);">Apparaat</span><div style="position:absolute;left:302.7px;top:282.8px;width:353px;height:19px;background:#3c404b;border-radius:2px;"></div><span class="t" style="left:309.50px;top:288.99px;font-size:8.2px;color:#f2f2f2;transform:scaleX(0.9618);">Mikrofon (JBL Quantum350 Wireless)</span><svg style="position:absolute;left:645.2px;top:291.4px;width:5.4px;height:3px;overflow:visible" viewBox="0 0 5.4 3" ><path d="M0 0 H5.4 L2.7 3 Z" fill="#fff"/></svg><div style="position:absolute;left:0px;top:308px;width:176px;height:150.4px;background:#272a33;border-radius:2.5px;box-shadow:inset 0 0 0 0.8px #30333d;"></div><div style="position:absolute;left:0px;top:308px;width:176px;height:14.8px;background:#363944;border-radius:2.5px;border-bottom-left-radius:0;border-bottom-right-radius:0;"></div><span class="t" style="left:4.50px;top:312.49px;font-size:8.2px;color:#fff;transform:scaleX(0.8889);font-weight:bold;">Scènes</span><svg style="position:absolute;left:164.4px;top:310.5px;width:10.1px;height:9.6px;overflow:visible" viewBox="0 0 10.1 9.6" ><rect x="0.45" y="0.45" width="6.3" height="5" rx="0.9" fill="none" stroke="#fff" stroke-width="0.9"/><rect x="0.45" y="0.45" width="6.3" height="1.5" rx="0.5" fill="#fff"/><rect x="3.15" y="3.85" width="6.5" height="5.3" rx="0.9" fill="#363944" stroke="#fff" stroke-width="0.9"/><rect x="3.15" y="3.85" width="6.5" height="1.6" rx="0.5" fill="#fff"/></svg><div style="position:absolute;left:179px;top:308px;width:176.5px;height:150.4px;background:#272a33;border-radius:2.5px;box-shadow:inset 0 0 0 0.8px #30333d;"></div><div style="position:absolute;left:179px;top:308px;width:176.5px;height:14.8px;background:#363944;border-radius:2.5px;border-bottom-left-radius:0;border-bottom-right-radius:0;"></div><span class="t" style="left:183.40px;top:312.49px;font-size:8.2px;color:#fff;transform:scaleX(0.9622);font-weight:bold;">Bronnen</span><svg style="position:absolute;left:343.9px;top:310.5px;width:10.1px;height:9.6px;overflow:visible" viewBox="0 0 10.1 9.6" ><rect x="0.45" y="0.45" width="6.3" height="5" rx="0.9" fill="none" stroke="#fff" stroke-width="0.9"/><rect x="0.45" y="0.45" width="6.3" height="1.5" rx="0.5" fill="#fff"/><rect x="3.15" y="3.85" width="6.5" height="5.3" rx="0.9" fill="#363944" stroke="#fff" stroke-width="0.9"/><rect x="3.15" y="3.85" width="6.5" height="1.6" rx="0.5" fill="#fff"/></svg><div style="position:absolute;left:358.3px;top:308px;width:227.7px;height:150.4px;background:#272a33;border-radius:2.5px;box-shadow:inset 0 0 0 0.8px #30333d;"></div><div style="position:absolute;left:358.3px;top:308px;width:227.7px;height:14.8px;background:#363944;border-radius:2.5px;border-bottom-left-radius:0;border-bottom-right-radius:0;"></div><span class="t" style="left:362.50px;top:312.49px;font-size:8.2px;color:#fff;transform:scaleX(0.9745);font-weight:bold;">Audiomixer</span><svg style="position:absolute;left:574.4px;top:310.5px;width:10.1px;height:9.6px;overflow:visible" viewBox="0 0 10.1 9.6" ><rect x="0.45" y="0.45" width="6.3" height="5" rx="0.9" fill="none" stroke="#fff" stroke-width="0.9"/><rect x="0.45" y="0.45" width="6.3" height="1.5" rx="0.5" fill="#fff"/><rect x="3.15" y="3.85" width="6.5" height="5.3" rx="0.9" fill="#363944" stroke="#fff" stroke-width="0.9"/><rect x="3.15" y="3.85" width="6.5" height="1.6" rx="0.5" fill="#fff"/></svg><div style="position:absolute;left:589.3px;top:308px;width:118.90000000000009px;height:150.4px;background:#272a33;border-radius:2.5px;box-shadow:inset 0 0 0 0.8px #30333d;"></div><div style="position:absolute;left:589.3px;top:308px;width:118.90000000000009px;height:14.8px;background:#363944;border-radius:2.5px;border-bottom-left-radius:0;border-bottom-right-radius:0;"></div><span class="t" style="left:593.30px;top:312.49px;font-size:8.2px;color:#fff;transform:scaleX(0.9404);font-weight:bold;">Scène-overgangen</span><svg style="position:absolute;left:696.6px;top:310.5px;width:10.1px;height:9.6px;overflow:visible" viewBox="0 0 10.1 9.6" ><rect x="0.45" y="0.45" width="6.3" height="5" rx="0.9" fill="none" stroke="#fff" stroke-width="0.9"/><rect x="0.45" y="0.45" width="6.3" height="1.5" rx="0.5" fill="#fff"/><rect x="3.15" y="3.85" width="6.5" height="5.3" rx="0.9" fill="#363944" stroke="#fff" stroke-width="0.9"/><rect x="3.15" y="3.85" width="6.5" height="1.6" rx="0.5" fill="#fff"/></svg><div style="position:absolute;left:710.7px;top:308px;width:189.29999999999995px;height:150.4px;background:#272a33;border-radius:2.5px;box-shadow:inset 0 0 0 0.8px #30333d;"></div><div style="position:absolute;left:710.7px;top:308px;width:189.29999999999995px;height:14.8px;background:#363944;border-radius:2.5px;border-bottom-left-radius:0;border-bottom-right-radius:0;"></div><span class="t" style="left:715.50px;top:312.49px;font-size:8.2px;color:#fff;transform:scaleX(0.9723);font-weight:bold;">Bedieningselementen</span><svg style="position:absolute;left:887.8px;top:310.5px;width:10.1px;height:9.6px;overflow:visible" viewBox="0 0 10.1 9.6" ><rect x="0.45" y="0.45" width="6.3" height="5" rx="0.9" fill="none" stroke="#fff" stroke-width="0.9"/><rect x="0.45" y="0.45" width="6.3" height="1.5" rx="0.5" fill="#fff"/><rect x="3.15" y="3.85" width="6.5" height="5.3" rx="0.9" fill="#363944" stroke="#fff" stroke-width="0.9"/><rect x="3.15" y="3.85" width="6.5" height="1.6" rx="0.5" fill="#fff"/></svg><div style="position:absolute;left:2px;top:324.6px;width:172px;height:17.2px;background:#284cb8;border-radius:1.5px;"></div><span class="t" style="left:6.30px;top:329.99px;font-size:8.2px;color:#f2f2f2;transform:scaleX(0.8915);">Scène</span><div style="position:absolute;left:3.1px;top:442px;width:14.2px;height:13.8px;background:#363944;border-radius:1.5px;"></div><div style="position:absolute;left:20.2px;top:442px;width:14.2px;height:13.8px;background:#363944;border-radius:1.5px;"></div><div style="position:absolute;left:40.1px;top:442px;width:14.2px;height:13.8px;background:#363944;border-radius:1.5px;"></div><div style="position:absolute;left:61px;top:442px;width:14.2px;height:13.8px;background:#363944;border-radius:1.5px;"></div><div style="position:absolute;left:77.8px;top:442px;width:14.2px;height:13.8px;background:#363944;border-radius:1.5px;"></div><svg style="position:absolute;left:6.2px;top:445px;width:8px;height:8px;overflow:visible" viewBox="0 0 8 8" ><path d="M4 0.3 V7.7 M0.3 4 H7.7" stroke="#fff" stroke-width="1.3" fill="none"/></svg><svg style="position:absolute;left:23.3px;top:444.4px;width:8px;height:9px;overflow:visible" viewBox="0 0 8 9" ><path d="M0 1.5 H8" stroke="#fff" stroke-width="1"/><path d="M2.8 1.3 V0.5 H5.2 V1.3" stroke="#fff" stroke-width="0.9" fill="none"/><path d="M1.1 2 V7.6 Q1.1 8.5 2 8.5 H6 Q6.9 8.5 6.9 7.6 V2" stroke="#fff" stroke-width="1.1" fill="none"/><rect x="2.7" y="3" width="2.6" height="4" fill="#fff" opacity="0.55"/></svg><svg style="position:absolute;left:43.3px;top:444.8px;width:8px;height:8.4px;overflow:visible" viewBox="0 0 8 8.4" ><rect x="0.5" y="0.5" width="7" height="7.4" rx="1.2" fill="none" stroke="#fff" stroke-width="1"/><rect x="1.4" y="1.4" width="2.6" height="5.6" fill="#fff"/><rect x="4" y="1.4" width="2.6" height="5.6" fill="#fff" opacity="0.35"/></svg><svg style="position:absolute;left:64.1px;top:446.8px;width:8px;height:4.4px;overflow:visible" viewBox="0 0 8 4.4" ><path d="M0.5 4 L4 0.6 L7.5 4" stroke="#fff" stroke-width="1.1" fill="none"/></svg><svg style="position:absolute;left:80.9px;top:447px;width:8px;height:4.4px;overflow:visible" viewBox="0 0 8 4.4" ><path d="M0.5 0.4 L4 3.8 L7.5 0.4" stroke="#fff" stroke-width="1.1" fill="none"/></svg><div style="position:absolute;left:180.7px;top:342.9px;width:166.5px;height:18.8px;background:#284cb8;border-radius:1.5px;"></div><svg style="position:absolute;left:185px;top:328.8px;width:9.975px;height:9.450000000000001px;overflow:visible" viewBox="0 0 9.5 9" ><path d="M0 3 H2 L4.6 0.6 V8.4 L2 6 H0 Z" fill="#fff"/><path d="M5.8 2.6 A2.4 2.4 0 0 1 5.8 6.4" fill="none" stroke="#fff" stroke-width="1"/><path d="M7 0.9 A4.4 4.4 0 0 1 7 8.1" fill="none" stroke="#fff" stroke-width="1"/></svg><span class="t" style="left:195.60px;top:330.69px;font-size:8.2px;color:#f2f2f2;transform:scaleX(0.9929);">gnk;lbnkl</span><svg style="position:absolute;left:315.6px;top:329.3px;width:9.6px;height:7.8px;overflow:visible" viewBox="0 0 9.6 7.8" ><path d="M0 3.9 C1.6 -0.2 8 -0.2 9.6 3.9 C8 8 1.6 8 0 3.9 Z" fill="#fff"/><circle cx="4.8" cy="3.9" r="1.85" fill="#272a33"/><circle cx="4.8" cy="3.9" r="0.95" fill="#fff"/></svg><svg style="position:absolute;left:331.6px;top:329.3px;width:7.4px;height:8.7px;overflow:visible" viewBox="0 0 7.4 8.7" ><path d="M1.6 3.4 V2.5 A2 2 0 0 1 5.7 2.5 V4.4" fill="none" stroke="#9b9b9b" stroke-width="1.1"/><rect x="0.1" y="4.3" width="7.2" height="4.4" rx="0.5" fill="#9b9b9b"/></svg><svg style="position:absolute;left:186.2px;top:347.5px;width:7.6px;height:9.4px;overflow:visible" viewBox="0 0 7.6 9.4" ><rect x="2.1" y="0" width="3.4" height="6" rx="1.7" fill="#fff"/><path d="M0.7 4.2 A3.1 3.1 0 0 0 6.9 4.2" fill="none" stroke="#fff" stroke-width="0.9"/><rect x="3.3" y="7" width="1" height="1.6" fill="#fff"/><rect x="1.6" y="8.4" width="4.4" height="0.9" fill="#fff"/></svg><span class="t" style="left:195.60px;top:349.49px;font-size:8.2px;color:#f2f2f2;transform:scaleX(1.0277);">fvbjnbfjf</span><svg style="position:absolute;left:315.6px;top:348.1px;width:9.6px;height:7.8px;overflow:visible" viewBox="0 0 9.6 7.8" ><path d="M0 3.9 C1.6 -0.2 8 -0.2 9.6 3.9 C8 8 1.6 8 0 3.9 Z" fill="#fff"/><circle cx="4.8" cy="3.9" r="1.85" fill="#284cb8"/><circle cx="4.8" cy="3.9" r="0.95" fill="#fff"/></svg><svg style="position:absolute;left:331.6px;top:348.1px;width:7.4px;height:8.7px;overflow:visible" viewBox="0 0 7.4 8.7" ><path d="M1.6 3.4 V2.5 A2 2 0 0 1 5.7 2.5 V4.4" fill="none" stroke="#a39c84" stroke-width="1.1"/><rect x="0.1" y="4.3" width="7.2" height="4.4" rx="0.5" fill="#a39c84"/></svg><svg style="position:absolute;left:185.2px;top:366.70000000000005px;width:9.4px;height:8.8px;overflow:visible" viewBox="0 0 9.4 8.8" ><rect x="0.6" y="0.6" width="8.2" height="6.4" rx="1.2" fill="none" stroke="#fff" stroke-width="1.2"/><rect x="2.6" y="7.6" width="4.2" height="1" fill="#fff"/></svg><span class="t" style="left:195.60px;top:368.29px;font-size:8.2px;color:#f2f2f2;transform:scaleX(0.9811);">sdvbhvbh</span><svg style="position:absolute;left:315.6px;top:366.90000000000003px;width:9.6px;height:7.8px;overflow:visible" viewBox="0 0 9.6 7.8" ><path d="M0 3.9 C1.6 -0.2 8 -0.2 9.6 3.9 C8 8 1.6 8 0 3.9 Z" fill="#fff"/><circle cx="4.8" cy="3.9" r="1.85" fill="#272a33"/><circle cx="4.8" cy="3.9" r="0.95" fill="#fff"/></svg><svg style="position:absolute;left:331.6px;top:366.90000000000003px;width:7.4px;height:8.7px;overflow:visible" viewBox="0 0 7.4 8.7" ><path d="M1.6 3.4 V2.5 A2 2 0 0 1 5.7 2.5 V4.4" fill="none" stroke="#9b9b9b" stroke-width="1.1"/><rect x="0.1" y="4.3" width="7.2" height="4.4" rx="0.5" fill="#9b9b9b"/></svg><svg style="position:absolute;left:185.2px;top:385.6px;width:9.4px;height:8.8px;overflow:visible" viewBox="0 0 9.4 8.8" ><rect x="0.6" y="0.6" width="8.2" height="6.4" rx="1.2" fill="none" stroke="#fff" stroke-width="1.2"/><rect x="2.6" y="7.6" width="4.2" height="1" fill="#fff"/></svg><span class="t" style="left:195.60px;top:387.19px;font-size:8.2px;color:#f2f2f2;transform:scaleX(1.0243);">uiuirweuir</span><svg style="position:absolute;left:315.6px;top:385.8px;width:9.6px;height:7.8px;overflow:visible" viewBox="0 0 9.6 7.8" ><path d="M0 3.9 C1.6 -0.2 8 -0.2 9.6 3.9 C8 8 1.6 8 0 3.9 Z" fill="#fff"/><circle cx="4.8" cy="3.9" r="1.85" fill="#272a33"/><circle cx="4.8" cy="3.9" r="0.95" fill="#fff"/></svg><svg style="position:absolute;left:331.6px;top:385.8px;width:7.4px;height:8.7px;overflow:visible" viewBox="0 0 7.4 8.7" ><path d="M1.6 3.4 V2.5 A2 2 0 0 1 5.7 2.5 V4.4" fill="none" stroke="#9b9b9b" stroke-width="1.1"/><rect x="0.1" y="4.3" width="7.2" height="4.4" rx="0.5" fill="#9b9b9b"/></svg><svg style="position:absolute;left:187.8px;top:405.8px;width:3.8px;height:6px;overflow:visible" viewBox="0 0 3.8 6" ><path d="M0 0 L3.8 3 L0 6 Z" fill="#fff"/></svg><svg style="position:absolute;left:199px;top:404.2px;width:9.4px;height:8.8px;overflow:visible" viewBox="0 0 9.4 8.8" ><path d="M0.6 1.4 Q0.6 0.6 1.4 0.6 H3.4 L4.4 1.8 H7.6 Q8.4 1.8 8.4 2.6 V7.4 Q8.4 8.2 7.6 8.2 H1.4 Q0.6 8.2 0.6 7.4 Z" fill="none" stroke="#fff" stroke-width="1.2"/><path d="M2.6 4.2 H9.2 L8 8.2 H1.4 Z" fill="#fff"/></svg><span class="t" style="left:209.00px;top:405.99px;font-size:8.2px;color:#f2f2f2;transform:scaleX(1.0297);">ytfgtfgthtgftg</span><svg style="position:absolute;left:315.6px;top:404.6px;width:9.6px;height:7.8px;overflow:visible" viewBox="0 0 9.6 7.8" ><path d="M0 3.9 C1.6 -0.2 8 -0.2 9.6 3.9 C8 8 1.6 8 0 3.9 Z" fill="#fff"/><circle cx="4.8" cy="3.9" r="1.85" fill="#272a33"/><circle cx="4.8" cy="3.9" r="0.95" fill="#fff"/></svg><svg style="position:absolute;left:331.6px;top:404.6px;width:7.4px;height:8.7px;overflow:visible" viewBox="0 0 7.4 8.7" ><path d="M1.6 3.4 V2.5 A2 2 0 0 1 5.7 2.5 V4.4" fill="none" stroke="#9b9b9b" stroke-width="1.1"/><rect x="0.1" y="4.3" width="7.2" height="4.4" rx="0.5" fill="#9b9b9b"/></svg><svg style="position:absolute;left:185.2px;top:423.1px;width:9px;height:8.4px;overflow:visible" viewBox="0 0 9 8.4" ><path d="M0 2.4 Q0 1.6 0.8 1.6 H2.2 L3 0.3 H6 L6.8 1.6 H8.2 Q9 1.6 9 2.4 V7.4 Q9 8.2 8.2 8.2 H0.8 Q0 8.2 0 7.4 Z" fill="#fff"/><circle cx="4.5" cy="4.8" r="2.2" fill="#272a33"/><circle cx="4.5" cy="4.8" r="1.1" fill="#fff"/></svg><span class="t" style="left:195.60px;top:424.69px;font-size:8.2px;color:#f2f2f2;transform:scaleX(1.0118);">jniojnejn</span><svg style="position:absolute;left:315.6px;top:423.3px;width:9.6px;height:7.8px;overflow:visible" viewBox="0 0 9.6 7.8" ><path d="M0 3.9 C1.6 -0.2 8 -0.2 9.6 3.9 C8 8 1.6 8 0 3.9 Z" fill="#fff"/><circle cx="4.8" cy="3.9" r="1.85" fill="#272a33"/><circle cx="4.8" cy="3.9" r="0.95" fill="#fff"/></svg><svg style="position:absolute;left:331.6px;top:423.3px;width:7.4px;height:8.7px;overflow:visible" viewBox="0 0 7.4 8.7" ><path d="M1.6 3.4 V2.5 A2 2 0 0 1 5.7 2.5 V4.4" fill="none" stroke="#9b9b9b" stroke-width="1.1"/><rect x="0.1" y="4.3" width="7.2" height="4.4" rx="0.5" fill="#9b9b9b"/></svg><div style="position:absolute;left:349px;top:325.5px;width:3.6px;height:95px;background:#3c404b;border-radius:1.8px;"></div><div style="position:absolute;left:182px;top:442px;width:14.2px;height:13.8px;background:#363944;border-radius:1.5px;"></div><div style="position:absolute;left:199px;top:442px;width:14.2px;height:13.8px;background:#363944;border-radius:1.5px;"></div><div style="position:absolute;left:219.3px;top:442px;width:14.2px;height:13.8px;background:#363944;border-radius:1.5px;"></div><div style="position:absolute;left:239.5px;top:442px;width:14.2px;height:13.8px;background:#363944;border-radius:1.5px;"></div><div style="position:absolute;left:256.2px;top:442px;width:14.2px;height:13.8px;background:#363944;border-radius:1.5px;"></div><svg style="position:absolute;left:185.1px;top:445px;width:8px;height:8px;overflow:visible" viewBox="0 0 8 8" ><path d="M4 0.3 V7.7 M0.3 4 H7.7" stroke="#fff" stroke-width="1.3" fill="none"/></svg><svg style="position:absolute;left:202.1px;top:444.4px;width:8px;height:9px;overflow:visible" viewBox="0 0 8 9" ><path d="M0 1.5 H8" stroke="#fff" stroke-width="1"/><path d="M2.8 1.3 V0.5 H5.2 V1.3" stroke="#fff" stroke-width="0.9" fill="none"/><path d="M1.1 2 V7.6 Q1.1 8.5 2 8.5 H6 Q6.9 8.5 6.9 7.6 V2" stroke="#fff" stroke-width="1.1" fill="none"/><rect x="2.7" y="3" width="2.6" height="4" fill="#fff" opacity="0.55"/></svg><svg style="position:absolute;left:222px;top:444.5px;width:8.8px;height:8.8px;overflow:visible" viewBox="0 0 10 10" ><g transform="translate(5 5)"><rect x="-1.1" y="-5" width="2.2" height="2.4" rx="0.4" transform="rotate(0)" fill="#fff"/><rect x="-1.1" y="-5" width="2.2" height="2.4" rx="0.4" transform="rotate(45)" fill="#fff"/><rect x="-1.1" y="-5" width="2.2" height="2.4" rx="0.4" transform="rotate(90)" fill="#fff"/><rect x="-1.1" y="-5" width="2.2" height="2.4" rx="0.4" transform="rotate(135)" fill="#fff"/><rect x="-1.1" y="-5" width="2.2" height="2.4" rx="0.4" transform="rotate(180)" fill="#fff"/><rect x="-1.1" y="-5" width="2.2" height="2.4" rx="0.4" transform="rotate(225)" fill="#fff"/><rect x="-1.1" y="-5" width="2.2" height="2.4" rx="0.4" transform="rotate(270)" fill="#fff"/><rect x="-1.1" y="-5" width="2.2" height="2.4" rx="0.4" transform="rotate(315)" fill="#fff"/><circle r="3.7" fill="#fff"/><circle r="1.9" fill="#363944"/></g></svg><svg style="position:absolute;left:242.6px;top:446.8px;width:8px;height:4.4px;overflow:visible" viewBox="0 0 8 4.4" ><path d="M0.5 4 L4 0.6 L7.5 4" stroke="#fff" stroke-width="1.1" fill="none"/></svg><svg style="position:absolute;left:259.3px;top:447px;width:8px;height:4.4px;overflow:visible" viewBox="0 0 8 4.4" ><path d="M0.5 0.4 L4 3.8 L7.5 0.4" stroke="#fff" stroke-width="1.1" fill="none"/></svg><span class="t" style="left:362.60px;top:326.19px;font-size:8.2px;color:#f2f2f2;transform:scaleX(1.0419);">fvbjnbfjf</span><span class="t" style="left:559.00px;top:325.97px;font-size:7.8px;color:#6d707b;transform:scaleX(0.9846);">0.0 dB</span><div style="position:absolute;left:380.5px;top:336px;width:135.3px;height:3.4px;background:#276b2c;"></div><div style="position:absolute;left:515.8px;top:336px;width:37px;height:3.4px;background:#7a5c12;"></div><div style="position:absolute;left:552.8px;top:336px;width:29.2px;height:3.4px;background:#7c1f25;"></div><div style="position:absolute;left:479.4px;top:336px;width:1.3px;height:3.4px;background:#7ee57e;"></div><span class="t" style="left:379.35px;top:340.62px;font-size:6.1px;color:#f0f0f0;transform:scaleX(0.8965);">-60</span><div style="position:absolute;left:383.35px;top:338.90000000000003px;width:0.5px;height:1.5px;background:#7d7f88;"></div><span class="t" style="left:395.78px;top:340.62px;font-size:6.1px;color:#f0f0f0;transform:scaleX(0.8965);">-55</span><div style="position:absolute;left:399.78000000000003px;top:338.90000000000003px;width:0.5px;height:1.5px;background:#7d7f88;"></div><span class="t" style="left:412.21px;top:340.62px;font-size:6.1px;color:#f0f0f0;transform:scaleX(0.8965);">-50</span><div style="position:absolute;left:416.21000000000004px;top:338.90000000000003px;width:0.5px;height:1.5px;background:#7d7f88;"></div><span class="t" style="left:428.64px;top:340.62px;font-size:6.1px;color:#f0f0f0;transform:scaleX(0.8965);">-45</span><div style="position:absolute;left:432.64000000000004px;top:338.90000000000003px;width:0.5px;height:1.5px;background:#7d7f88;"></div><span class="t" style="left:445.07px;top:340.62px;font-size:6.1px;color:#f0f0f0;transform:scaleX(0.8965);">-40</span><div style="position:absolute;left:449.07000000000005px;top:338.90000000000003px;width:0.5px;height:1.5px;background:#7d7f88;"></div><span class="t" style="left:461.50px;top:340.62px;font-size:6.1px;color:#f0f0f0;transform:scaleX(0.8965);">-35</span><div style="position:absolute;left:465.5px;top:338.90000000000003px;width:0.5px;height:1.5px;background:#7d7f88;"></div><span class="t" style="left:477.93px;top:340.62px;font-size:6.1px;color:#f0f0f0;transform:scaleX(0.8965);">-30</span><div style="position:absolute;left:481.93px;top:338.90000000000003px;width:0.5px;height:1.5px;background:#7d7f88;"></div><span class="t" style="left:494.36px;top:340.62px;font-size:6.1px;color:#f0f0f0;transform:scaleX(0.8965);">-25</span><div style="position:absolute;left:498.36px;top:338.90000000000003px;width:0.5px;height:1.5px;background:#7d7f88;"></div><span class="t" style="left:510.79px;top:340.62px;font-size:6.1px;color:#f0f0f0;transform:scaleX(0.8965);">-20</span><div style="position:absolute;left:514.79px;top:338.90000000000003px;width:0.5px;height:1.5px;background:#7d7f88;"></div><span class="t" style="left:527.22px;top:340.62px;font-size:6.1px;color:#f0f0f0;transform:scaleX(0.8965);">-15</span><div style="position:absolute;left:531.22px;top:338.90000000000003px;width:0.5px;height:1.5px;background:#7d7f88;"></div><span class="t" style="left:543.65px;top:340.62px;font-size:6.1px;color:#f0f0f0;transform:scaleX(0.8965);">-10</span><div style="position:absolute;left:547.6500000000001px;top:338.90000000000003px;width:0.5px;height:1.5px;background:#7d7f88;"></div><span class="t" style="left:561.73px;top:340.62px;font-size:6.1px;color:#f0f0f0;transform:scaleX(0.8484);">-5</span><div style="position:absolute;left:564.08px;top:338.90000000000003px;width:0.5px;height:1.5px;background:#7d7f88;"></div><span class="t" style="left:578.90px;top:340.62px;font-size:6.1px;color:#f0f0f0;transform:scaleX(0.9143);">0</span><div style="position:absolute;left:580.51px;top:338.90000000000003px;width:0.5px;height:1.5px;background:#7d7f88;"></div><div style="position:absolute;left:363px;top:336px;width:13.4px;height:13.4px;background:#363944;border-radius:1.5px;"></div><svg style="position:absolute;left:368.62px;top:338.17px;width:2.16px;height:8.76px;overflow:visible" viewBox="0 0 2.16 8.76" ><circle cx="1.08" cy="1.08" r="1.08" fill="#fff"/><circle cx="1.08" cy="4.38" r="1.08" fill="#fff"/><circle cx="1.08" cy="7.68" r="1.08" fill="#fff"/></svg><div style="position:absolute;left:363px;top:351.4px;width:13.4px;height:13px;background:#363944;border-radius:1.5px;"></div><svg style="position:absolute;left:365px;top:353.6px;width:9.31px;height:8.82px;overflow:visible" viewBox="0 0 9.5 9" ><path d="M0 3 H2 L4.6 0.6 V8.4 L2 6 H0 Z" fill="#fff"/><path d="M5.8 2.6 A2.4 2.4 0 0 1 5.8 6.4" fill="none" stroke="#fff" stroke-width="1"/><path d="M7 0.9 A4.4 4.4 0 0 1 7 8.1" fill="none" stroke="#fff" stroke-width="1"/></svg><div style="position:absolute;left:380.5px;top:358.5px;width:195px;height:2px;background:#3f63d4;border-radius:1px;"></div><div style="position:absolute;left:389.6px;top:356.9px;width:0.5px;height:5.2px;background:rgba(150,160,200,0.22);"></div><div style="position:absolute;left:397.5px;top:356.9px;width:0.5px;height:5.2px;background:rgba(150,160,200,0.22);"></div><div style="position:absolute;left:405.4px;top:356.9px;width:0.5px;height:5.2px;background:rgba(150,160,200,0.22);"></div><div style="position:absolute;left:414.8px;top:356.9px;width:0.5px;height:5.2px;background:rgba(150,160,200,0.22);"></div><div style="position:absolute;left:426px;top:356.9px;width:0.5px;height:5.2px;background:rgba(150,160,200,0.22);"></div><div style="position:absolute;left:439.7px;top:356.9px;width:0.5px;height:5.2px;background:rgba(150,160,200,0.22);"></div><div style="position:absolute;left:457px;top:356.9px;width:0.5px;height:5.2px;background:rgba(150,160,200,0.22);"></div><div style="position:absolute;left:474px;top:356.9px;width:0.5px;height:5.2px;background:rgba(150,160,200,0.22);"></div><div style="position:absolute;left:492px;top:356.9px;width:0.5px;height:5.2px;background:rgba(150,160,200,0.22);"></div><div style="position:absolute;left:510px;top:356.9px;width:0.5px;height:5.2px;background:rgba(150,160,200,0.22);"></div><div style="position:absolute;left:530px;top:356.9px;width:0.5px;height:5.2px;background:rgba(150,160,200,0.22);"></div><div style="position:absolute;left:552px;top:356.9px;width:0.5px;height:5.2px;background:rgba(150,160,200,0.22);"></div><div style="position:absolute;left:570px;top:356.6px;width:12.2px;height:6.2px;background:#fff;border-radius:3.1px;"></div><div style="position:absolute;left:360px;top:367.6px;width:224.5px;height:0.6px;background:#33363f;"></div><span class="t" style="left:362.60px;top:371.79px;font-size:8.2px;color:#f2f2f2;transform:scaleX(0.9899);">gnk;lbnkl</span><span class="t" style="left:553.00px;top:371.57px;font-size:7.8px;color:#6d707b;transform:scaleX(0.9564);">-16.0 dB</span><div style="position:absolute;left:380.5px;top:380.5px;width:135.3px;height:4px;background:#276b2c;"></div><div style="position:absolute;left:515.8px;top:380.5px;width:37px;height:4px;background:#7a5c12;"></div><div style="position:absolute;left:552.8px;top:380.5px;width:29.2px;height:4px;background:#7c1f25;"></div><div style="position:absolute;left:383px;top:380.5px;width:85px;height:4px;background:#35d648;"></div><div style="position:absolute;left:468px;top:380.5px;width:2.1999999999999886px;height:4px;background:#0c0d10;"></div><div style="position:absolute;left:470.2px;top:380.5px;width:32.10000000000002px;height:4px;background:#35d648;"></div><div style="position:absolute;left:516px;top:380.5px;width:1.6px;height:4px;background:#f0b52a;"></div><div style="position:absolute;left:380.2px;top:380.5px;width:1.8px;height:4px;background:#f0506a;"></div><div style="position:absolute;left:380.5px;top:385.5px;width:135.3px;height:4px;background:#276b2c;"></div><div style="position:absolute;left:515.8px;top:385.5px;width:37px;height:4px;background:#7a5c12;"></div><div style="position:absolute;left:552.8px;top:385.5px;width:29.2px;height:4px;background:#7c1f25;"></div><div style="position:absolute;left:383px;top:385.5px;width:79px;height:4px;background:#35d648;"></div><div style="position:absolute;left:462px;top:385.5px;width:2px;height:4px;background:#0c0d10;"></div><div style="position:absolute;left:464px;top:385.5px;width:27.80000000000001px;height:4px;background:#35d648;"></div><div style="position:absolute;left:516px;top:385.5px;width:1.6px;height:4px;background:#f0b52a;"></div><div style="position:absolute;left:380.2px;top:385.5px;width:1.8px;height:4px;background:#f0506a;"></div><span class="t" style="left:379.35px;top:390.22px;font-size:6.1px;color:#f0f0f0;transform:scaleX(0.8965);">-60</span><div style="position:absolute;left:383.35px;top:388.5px;width:0.5px;height:1.5px;background:#7d7f88;"></div><span class="t" style="left:395.78px;top:390.22px;font-size:6.1px;color:#f0f0f0;transform:scaleX(0.8965);">-55</span><div style="position:absolute;left:399.78000000000003px;top:388.5px;width:0.5px;height:1.5px;background:#7d7f88;"></div><span class="t" style="left:412.21px;top:390.22px;font-size:6.1px;color:#f0f0f0;transform:scaleX(0.8965);">-50</span><div style="position:absolute;left:416.21000000000004px;top:388.5px;width:0.5px;height:1.5px;background:#7d7f88;"></div><span class="t" style="left:428.64px;top:390.22px;font-size:6.1px;color:#f0f0f0;transform:scaleX(0.8965);">-45</span><div style="position:absolute;left:432.64000000000004px;top:388.5px;width:0.5px;height:1.5px;background:#7d7f88;"></div><span class="t" style="left:445.07px;top:390.22px;font-size:6.1px;color:#f0f0f0;transform:scaleX(0.8965);">-40</span><div style="position:absolute;left:449.07000000000005px;top:388.5px;width:0.5px;height:1.5px;background:#7d7f88;"></div><span class="t" style="left:461.50px;top:390.22px;font-size:6.1px;color:#f0f0f0;transform:scaleX(0.8965);">-35</span><div style="position:absolute;left:465.5px;top:388.5px;width:0.5px;height:1.5px;background:#7d7f88;"></div><span class="t" style="left:477.93px;top:390.22px;font-size:6.1px;color:#f0f0f0;transform:scaleX(0.8965);">-30</span><div style="position:absolute;left:481.93px;top:388.5px;width:0.5px;height:1.5px;background:#7d7f88;"></div><span class="t" style="left:494.36px;top:390.22px;font-size:6.1px;color:#f0f0f0;transform:scaleX(0.8965);">-25</span><div style="position:absolute;left:498.36px;top:388.5px;width:0.5px;height:1.5px;background:#7d7f88;"></div><span class="t" style="left:510.79px;top:390.22px;font-size:6.1px;color:#f0f0f0;transform:scaleX(0.8965);">-20</span><div style="position:absolute;left:514.79px;top:388.5px;width:0.5px;height:1.5px;background:#7d7f88;"></div><span class="t" style="left:527.22px;top:390.22px;font-size:6.1px;color:#f0f0f0;transform:scaleX(0.8965);">-15</span><div style="position:absolute;left:531.22px;top:388.5px;width:0.5px;height:1.5px;background:#7d7f88;"></div><span class="t" style="left:543.65px;top:390.22px;font-size:6.1px;color:#f0f0f0;transform:scaleX(0.8965);">-10</span><div style="position:absolute;left:547.6500000000001px;top:388.5px;width:0.5px;height:1.5px;background:#7d7f88;"></div><span class="t" style="left:561.73px;top:390.22px;font-size:6.1px;color:#f0f0f0;transform:scaleX(0.8484);">-5</span><div style="position:absolute;left:564.08px;top:388.5px;width:0.5px;height:1.5px;background:#7d7f88;"></div><span class="t" style="left:578.90px;top:390.22px;font-size:6.1px;color:#f0f0f0;transform:scaleX(0.9143);">0</span><div style="position:absolute;left:580.51px;top:388.5px;width:0.5px;height:1.5px;background:#7d7f88;"></div><div style="position:absolute;left:363px;top:381.4px;width:13.4px;height:13.4px;background:#363944;border-radius:1.5px;"></div><svg style="position:absolute;left:368.62px;top:383.57px;width:2.16px;height:8.76px;overflow:visible" viewBox="0 0 2.16 8.76" ><circle cx="1.08" cy="1.08" r="1.08" fill="#fff"/><circle cx="1.08" cy="4.38" r="1.08" fill="#fff"/><circle cx="1.08" cy="7.68" r="1.08" fill="#fff"/></svg><div style="position:absolute;left:363px;top:396.8px;width:13.4px;height:13px;background:#363944;border-radius:1.5px;"></div><svg style="position:absolute;left:365px;top:399px;width:9.31px;height:8.82px;overflow:visible" viewBox="0 0 9.5 9" ><path d="M0 3 H2 L4.6 0.6 V8.4 L2 6 H0 Z" fill="#fff"/><path d="M5.8 2.6 A2.4 2.4 0 0 1 5.8 6.4" fill="none" stroke="#fff" stroke-width="1"/><path d="M7 0.9 A4.4 4.4 0 0 1 7 8.1" fill="none" stroke="#fff" stroke-width="1"/></svg><div style="position:absolute;left:380.5px;top:403.8px;width:201px;height:2px;background:#1f2128;border-radius:1px;"></div><div style="position:absolute;left:380.5px;top:403.8px;width:105px;height:2px;background:#3f63d4;border-radius:1px;"></div><div style="position:absolute;left:389.6px;top:402.2px;width:0.5px;height:5.2px;background:rgba(150,160,200,0.18);"></div><div style="position:absolute;left:397.5px;top:402.2px;width:0.5px;height:5.2px;background:rgba(150,160,200,0.18);"></div><div style="position:absolute;left:405.4px;top:402.2px;width:0.5px;height:5.2px;background:rgba(150,160,200,0.18);"></div><div style="position:absolute;left:414.8px;top:402.2px;width:0.5px;height:5.2px;background:rgba(150,160,200,0.18);"></div><div style="position:absolute;left:426px;top:402.2px;width:0.5px;height:5.2px;background:rgba(150,160,200,0.18);"></div><div style="position:absolute;left:439.7px;top:402.2px;width:0.5px;height:5.2px;background:rgba(150,160,200,0.18);"></div><div style="position:absolute;left:457px;top:402.2px;width:0.5px;height:5.2px;background:rgba(150,160,200,0.18);"></div><div style="position:absolute;left:474px;top:402.2px;width:0.5px;height:5.2px;background:rgba(150,160,200,0.18);"></div><div style="position:absolute;left:492px;top:402.2px;width:0.5px;height:5.2px;background:rgba(150,160,200,0.18);"></div><div style="position:absolute;left:510px;top:402.2px;width:0.5px;height:5.2px;background:rgba(150,160,200,0.18);"></div><div style="position:absolute;left:530px;top:402.2px;width:0.5px;height:5.2px;background:rgba(150,160,200,0.18);"></div><div style="position:absolute;left:552px;top:402.2px;width:0.5px;height:5.2px;background:rgba(150,160,200,0.18);"></div><div style="position:absolute;left:482.8px;top:401.8px;width:11.8px;height:6.2px;background:#fff;border-radius:3.1px;"></div><div style="position:absolute;left:358.3px;top:412.6px;width:227.7px;height:27.6px;background:#1c1e25;"></div><div style="position:absolute;left:358.3px;top:412.3px;width:227.7px;height:0.6px;background:#3a3d47;"></div><div style="position:absolute;left:361px;top:442px;width:14.4px;height:13.6px;background:#363944;border-radius:1.5px;"></div><svg style="position:absolute;left:363.2px;top:444.2px;width:10px;height:9.6px;overflow:visible" viewBox="0 0 10 9.6" ><g transform="translate(3.7 5.9)"><rect x="-0.75" y="-3.50" width="1.50" height="1.30" transform="rotate(0.0)" fill="#fff"/><rect x="-0.75" y="-3.50" width="1.50" height="1.30" transform="rotate(45.0)" fill="#fff"/><rect x="-0.75" y="-3.50" width="1.50" height="1.30" transform="rotate(90.0)" fill="#fff"/><rect x="-0.75" y="-3.50" width="1.50" height="1.30" transform="rotate(135.0)" fill="#fff"/><rect x="-0.75" y="-3.50" width="1.50" height="1.30" transform="rotate(180.0)" fill="#fff"/><rect x="-0.75" y="-3.50" width="1.50" height="1.30" transform="rotate(225.0)" fill="#fff"/><rect x="-0.75" y="-3.50" width="1.50" height="1.30" transform="rotate(270.0)" fill="#fff"/><rect x="-0.75" y="-3.50" width="1.50" height="1.30" transform="rotate(315.0)" fill="#fff"/><circle r="2.6" fill="#fff"/><circle r="1.25" fill="#363944"/></g><circle cx="8" cy="2.5" r="1.35" fill="none" stroke="#fff" stroke-width="1.1"/></svg><div style="position:absolute;left:382px;top:442px;width:14px;height:13.6px;background:#363944;border-radius:1.5px;"></div><svg style="position:absolute;left:387.92px;top:444.37px;width:2.16px;height:8.76px;overflow:visible" viewBox="0 0 2.16 8.76" ><circle cx="1.08" cy="1.08" r="1.08" fill="#fff"/><circle cx="1.08" cy="4.38" r="1.08" fill="#fff"/><circle cx="1.08" cy="7.68" r="1.08" fill="#fff"/></svg><div style="position:absolute;left:592.2px;top:326.2px;width:113.3px;height:17.8px;background:#3c404b;border-radius:2px;"></div><div style="position:absolute;left:690.6px;top:326.2px;width:0.5px;height:17.8px;background:#2b2e37;"></div><span class="t" style="left:598.00px;top:331.79px;font-size:8.2px;color:#f2f2f2;transform:scaleX(0.9535);">Vervagen</span><svg style="position:absolute;left:696px;top:334.3px;width:5.4px;height:3px;overflow:visible" viewBox="0 0 5.4 3" ><path d="M0 0 H5.4 L2.7 3 Z" fill="#fff"/></svg><span class="t" style="left:591.80px;top:351.79px;font-size:8.2px;color:#f2f2f2;transform:scaleX(0.9690);">Duur</span><div style="position:absolute;left:612px;top:346.7px;width:93.5px;height:17.4px;background:#3c404b;border-radius:2px;"></div><div style="position:absolute;left:690.6px;top:346.7px;width:0.5px;height:17.4px;background:#2b2e37;"></div><span class="t" style="left:618.80px;top:351.79px;font-size:8.2px;color:#f2f2f2;transform:scaleX(0.9531);">300 ms</span><svg style="position:absolute;left:695.6px;top:349.4px;width:5.6px;height:3.08px;overflow:visible" viewBox="0 0 8 4.4" ><path d="M0.5 4 L4 0.6 L7.5 4" stroke="#fff" stroke-width="1.1" fill="none"/></svg><svg style="position:absolute;left:695.6px;top:357.4px;width:5.6px;height:3.08px;overflow:visible" viewBox="0 0 8 4.4" ><path d="M0.5 0.4 L4 3.8 L7.5 0.4" stroke="#fff" stroke-width="1.1" fill="none"/></svg><div style="position:absolute;left:649.3px;top:365.8px;width:15px;height:15px;background:#363944;border-radius:1.5px;"></div><svg style="position:absolute;left:652.8px;top:369.3px;width:8px;height:8px;overflow:visible" viewBox="0 0 8 8" ><path d="M4 0.3 V7.7 M0.3 4 H7.7" stroke="#fff" stroke-width="1.3" fill="none"/></svg><svg style="position:absolute;left:673px;top:369px;width:8px;height:9px;overflow:visible" viewBox="0 0 8 9" ><path d="M0 1.5 H8" stroke="#fff" stroke-width="1"/><path d="M2.8 1.3 V0.5 H5.2 V1.3" stroke="#fff" stroke-width="0.9" fill="none"/><path d="M1.1 2 V7.6 Q1.1 8.5 2 8.5 H6 Q6.9 8.5 6.9 7.6 V2" stroke="#fff" stroke-width="1.1" fill="none"/><rect x="2.7" y="3" width="2.6" height="4" fill="#fff" opacity="0.55"/></svg><svg style="position:absolute;left:695.57px;top:368.97px;width:2.16px;height:8.76px;overflow:visible" viewBox="0 0 2.16 8.76" ><circle cx="1.08" cy="1.08" r="1.08" fill="#fff"/><circle cx="1.08" cy="4.38" r="1.08" fill="#fff"/><circle cx="1.08" cy="7.68" r="1.08" fill="#fff"/></svg><div style="position:absolute;left:715px;top:326.2px;width:181px;height:18px;background:#3c404b;border-radius:2px;"></div><span class="t" style="left:773.60px;top:332.39px;font-size:8.2px;color:#f2f2f2;transform:scaleX(0.9871);">Streamen starten</span><div style="position:absolute;left:715px;top:347.6px;width:181px;height:18px;background:#1a1b21;border-radius:2px;"></div><span class="t" style="left:776.00px;top:354.19px;font-size:8.2px;color:#f2f2f2;transform:scaleX(0.9963);">Opname starten</span><div style="position:absolute;left:715px;top:368.8px;width:159.4px;height:18px;background:#3c404b;border-radius:2px;"></div><span class="t" style="left:752.50px;top:375.39px;font-size:8.2px;color:#f2f2f2;transform:scaleX(0.9858);">Virtuele camera starten</span><div style="position:absolute;left:715px;top:390px;width:181px;height:18px;background:#3c404b;border-radius:2px;"></div><span class="t" style="left:781.60px;top:395.69px;font-size:8.2px;color:#f2f2f2;transform:scaleX(0.9917);">Studiomodus</span><div style="position:absolute;left:715px;top:411.2px;width:181px;height:18px;background:#3c404b;border-radius:2px;"></div><span class="t" style="left:784.60px;top:416.89px;font-size:8.2px;color:#f2f2f2;transform:scaleX(0.9995);">Instellingen</span><div style="position:absolute;left:715px;top:432.4px;width:181px;height:18px;background:#3c404b;border-radius:2px;"></div><span class="t" style="left:789.80px;top:438.09px;font-size:8.2px;color:#f2f2f2;transform:scaleX(0.9934);">Afsluiten</span><div style="position:absolute;left:877.3px;top:368.8px;width:18.7px;height:18px;background:#3c404b;border-radius:2px;"></div><svg style="position:absolute;left:882.3px;top:373.4px;width:8.8px;height:8.8px;overflow:visible" viewBox="0 0 10 10" ><g transform="translate(5 5)"><rect x="-1.1" y="-5" width="2.2" height="2.4" rx="0.4" transform="rotate(0)" fill="#fff"/><rect x="-1.1" y="-5" width="2.2" height="2.4" rx="0.4" transform="rotate(45)" fill="#fff"/><rect x="-1.1" y="-5" width="2.2" height="2.4" rx="0.4" transform="rotate(90)" fill="#fff"/><rect x="-1.1" y="-5" width="2.2" height="2.4" rx="0.4" transform="rotate(135)" fill="#fff"/><rect x="-1.1" y="-5" width="2.2" height="2.4" rx="0.4" transform="rotate(180)" fill="#fff"/><rect x="-1.1" y="-5" width="2.2" height="2.4" rx="0.4" transform="rotate(225)" fill="#fff"/><rect x="-1.1" y="-5" width="2.2" height="2.4" rx="0.4" transform="rotate(270)" fill="#fff"/><rect x="-1.1" y="-5" width="2.2" height="2.4" rx="0.4" transform="rotate(315)" fill="#fff"/><circle r="3.7" fill="#fff"/><circle r="1.9" fill="#3c404b"/></g></svg><div style="position:absolute;left:649.7px;top:458.5px;width:0.7px;height:19px;background:#15161b;"></div><div style="position:absolute;left:668.3px;top:458.5px;width:0.7px;height:19px;background:#15161b;"></div><div style="position:absolute;left:722.2px;top:458.5px;width:0.7px;height:19px;background:#15161b;"></div><div style="position:absolute;left:773.6px;top:458.5px;width:0.7px;height:19px;background:#15161b;"></div><div style="position:absolute;left:825.4px;top:458.5px;width:0.7px;height:19px;background:#15161b;"></div><svg style="position:absolute;left:654.6px;top:465.4px;width:8.4px;height:8px" viewBox="0 0 8 8"><g fill="#3c3f49"><rect x="0" y="5.6" width="1.5" height="2.4"/><rect x="2.1" y="3.8" width="1.5" height="4.2"/><rect x="4.2" y="2" width="1.5" height="6"/><rect x="6.3" y="0" width="1.5" height="8"/></g></svg><svg style="position:absolute;left:674.5px;top:466px;width:8px;height:6px" viewBox="0 0 8 6"><circle cx="4" cy="3" r="1.5" fill="#5d606a"/><path d="M1.6 0.6 A3.4 3.4 0 0 0 1.6 5.4 M6.4 0.6 A3.4 3.4 0 0 1 6.4 5.4" stroke="#5d606a" stroke-width="0.8" fill="none"/></svg><span class="t" style="left:686.80px;top:466.07px;font-size:7.8px;color:#5d606a;transform:scaleX(0.9948);">00:00:00</span><div style="position:absolute;left:727.6px;top:465.2px;width:7.6px;height:7.6px;background:#50535d;border-radius:3.8px;"></div><span class="t" style="left:740.00px;top:466.07px;font-size:7.8px;color:#5d606a;transform:scaleX(0.9882);">00:00:00</span><span class="t" style="left:782.60px;top:466.07px;font-size:7.8px;color:#f2f2f2;transform:scaleX(0.9332);">CPU: 1.5%</span><span class="t" style="left:830.80px;top:466.07px;font-size:7.8px;color:#f2f2f2;transform:scaleX(0.9609);">60.00 / 60.00 FPS</span><div style="position:absolute;left:0;top:477.5px;width:900px;height:28.5px;background:linear-gradient(90deg,#f4e8e0 0%,#f3e9e1 20%,#dff0ea 27%,#cdf0ea 36%,#dcefe2 46%,#eee9dc 55%,#f3e2d6 66%,#f4dfd2 76%,#d9ebe2 86%,#c2ebe5 100%)"></div><svg style="position:absolute;left:13.2px;top:485.4px;width:13px;height:12px" viewBox="0 0 13 12"><defs><linearGradient id="sun3" x1="0" y1="0" x2="1" y2="1"><stop offset="0" stop-color="#ffb62e"/><stop offset="1" stop-color="#ee6a12"/></linearGradient></defs><circle cx="5.8" cy="6" r="5.6" fill="url(#sun3)"/><path d="M5.2 9.6 A1.9 1.9 0 0 1 6 6.2 A2.3 2.3 0 0 1 10.2 6.4 A1.7 1.7 0 0 1 11.4 9.6 Z" fill="#c9dcf2"/></svg><span class="t" style="left:30.00px;top:484.16px;font-size:7.6px;color:#1c1c1c;transform:scaleX(0.8074);">13°C</span><span class="t" style="left:30.00px;top:493.56px;font-size:7.6px;color:#666;transform:scaleX(0.9397);">Meestal zonnig</span><svg style="position:absolute;left:188px;top:485.6px;width:13.6px;height:13.6px" viewBox="0 0 14 14"><defs><linearGradient id="wl3" x1="0" y1="0" x2="1" y2="1"><stop offset="0" stop-color="#55c6f5"/><stop offset="1" stop-color="#0a6fd0"/></linearGradient></defs><g fill="url(#wl3)"><rect x="0" y="0" width="6.6" height="6.6" rx="0.4"/><rect x="7.3" y="0" width="6.6" height="6.6" rx="0.4"/><rect x="0" y="7.3" width="6.6" height="6.6" rx="0.4"/><rect x="7.3" y="7.3" width="6.6" height="6.6" rx="0.4"/></g></svg><div style="position:absolute;left:210.6px;top:483px;width:126.6px;height:18.2px;background:rgba(255,255,255,0.72);border-radius:9.1px;"></div><svg style="position:absolute;left:216.2px;top:488px;width:8.6px;height:8.6px" viewBox="0 0 9 9"><circle cx="3.6" cy="3.6" r="2.9" fill="none" stroke="#222" stroke-width="1"/><path d="M5.8 5.8 L8.4 8.4" stroke="#222" stroke-width="1.1"/></svg><span class="t" style="left:230.80px;top:488.88px;font-size:8px;color:#555;transform:scaleX(1.0005);">Zoeken</span><svg style="position:absolute;left:344.6px;top:486.6px;width:13.4px;height:12px" viewBox="0 0 13.4 12"><rect x="3.4" y="0.4" width="9.6" height="8" rx="1" fill="#d9d9d9" stroke="#f4f4f4" stroke-width="0.6"/><rect x="0.4" y="3" width="9.6" height="8.4" rx="1" fill="#1c1c1c"/><rect x="3" y="3" width="7" height="5.6" fill="#c8c8c8"/><rect x="0.4" y="3" width="2.8" height="8.4" rx="0.8" fill="#1c1c1c"/><rect x="0.4" y="8.4" width="9.6" height="3" rx="0.8" fill="#1c1c1c"/></svg><svg style="position:absolute;left:371px;top:485.6px;width:14.6px;height:12.6px" viewBox="0 0 14.6 12.6"><path d="M0.3 1.2 Q0.3 0.3 1.2 0.3 H4.6 L6 1.8 H13.4 Q14.3 1.8 14.3 2.7 V11 Q14.3 11.9 13.4 11.9 H1.2 Q0.3 11.9 0.3 11 Z" fill="#f7b92a"/><path d="M0.3 3.4 H14.3 V11 Q14.3 11.9 13.4 11.9 H1.2 Q0.3 11.9 0.3 11 Z" fill="#fcd462"/><rect x="3.2" y="8.4" width="8.2" height="3.5" fill="#2f7fd8"/><rect x="3.2" y="8.4" width="8.2" height="1.2" fill="#1a5fb4"/></svg><div style="position:absolute;left:376.4px;top:501.6px;width:3.4px;height:1px;border-radius:1px;background:#777"></div><svg style="position:absolute;left:396.6px;top:486px;width:14.6px;height:13px" viewBox="0 0 14.6 13"><circle cx="11.6" cy="2.6" r="1.7" fill="#5b5fc7"/><rect x="9.2" y="4.8" width="5.2" height="6" rx="1.6" fill="#5b5fc7"/><circle cx="7.4" cy="2" r="2.1" fill="#7b83eb"/><rect x="4" y="4.6" width="7.4" height="7.8" rx="1.8" fill="#7b83eb"/><rect x="0.2" y="3.2" width="7" height="7" rx="0.9" fill="#4b53bc"/><path d="M2 5 H5.4 M3.7 5 V8.8" stroke="#fff" stroke-width="0.9"/></svg><svg style="position:absolute;left:422.2px;top:485.6px;width:14.4px;height:14.4px" viewBox="0 0 14.4 14.4"><defs><linearGradient id="eg3" x1="0" y1="0" x2="1" y2="0.6"><stop offset="0" stop-color="#1b6ec9"/><stop offset="0.6" stop-color="#2aa7d8"/><stop offset="1" stop-color="#5fd35a"/></linearGradient></defs><circle cx="7.2" cy="7.2" r="7" fill="url(#eg3)"/><path d="M1 9 A6.4 6.4 0 0 0 12.6 11 A4.6 4.6 0 0 1 5.4 8.4 Q5 6 7.4 5.6 Q4 4 1 9 Z" fill="#0f4fa8"/><path d="M6.6 8.4 A2.6 2.6 0 0 0 11.8 8.4 Q12 6.4 9.2 6.2 Q6.8 6.4 6.6 8.4 Z" fill="#e6f4f1"/></svg><svg style="position:absolute;left:447.8px;top:485.4px;width:14.6px;height:14.4px" viewBox="0 0 14.6 14.4"><path d="M4.6 3.4 V2 Q4.6 0.5 6 0.5 H8.6 Q10 0.5 10 2 V3.4" fill="none" stroke="#1c5cb0" stroke-width="1"/><rect x="0.4" y="3" width="13.8" height="11" rx="1.6" fill="#174f9e"/><rect x="0.4" y="3" width="13.8" height="3" rx="1.6" fill="#1f62b8"/><rect x="4.2" y="5.6" width="2.7" height="2.7" fill="#f25022"/><rect x="7.5" y="5.6" width="2.7" height="2.7" fill="#7fba00"/><rect x="4.2" y="8.9" width="2.7" height="2.7" fill="#00a4ef"/><rect x="7.5" y="8.9" width="2.7" height="2.7" fill="#ffb900"/></svg><svg style="position:absolute;left:473.8px;top:486px;width:14.4px;height:13.4px" viewBox="0 0 14.4 13.4"><path d="M0.3 0.8 L7.2 4 L14.1 0.8 V10.2 L7.2 13.2 L0.3 10.2 Z" fill="#c4212f"/><path d="M2.9 4.6 L7.2 6.7 L11.5 4.6 V8.8 L7.2 10.8 L2.9 8.8 Z" fill="#f3e6dc"/></svg><svg style="position:absolute;left:499.6px;top:485.6px;width:14.4px;height:14.4px" viewBox="-7.2 -7.2 14.4 14.4"><circle r="7" fill="#fbc116"/><path d="M0 0 L-6.06 -3.5 A7 7 0 0 1 6.06 -3.5 Z" fill="#e33b2e"/><path d="M0 0 L-6.06 -3.5 A7 7 0 0 0 0 7 L3 1 Z" fill="#2da94f"/><path d="M-6.06 -3.5 A7 7 0 0 1 6.06 -3.5 H0 Z" fill="#e33b2e"/><circle r="3.3" fill="#fff"/><circle r="2.6" fill="#3f86f4"/></svg><div style="position:absolute;left:505.2px;top:501.6px;width:3.4px;height:1px;border-radius:1px;background:#777"></div><svg style="position:absolute;left:525.2px;top:485.6px;width:14.4px;height:14.4px" viewBox="-7.2 -7.2 14.4 14.4"><circle r="6.4" fill="none" stroke="#e0435c" stroke-width="1.3"/><ellipse rx="3" ry="5.2" fill="none" stroke="#e0435c" stroke-width="1.1"/></svg><div style="position:absolute;left:530.8px;top:501.6px;width:3.4px;height:1px;border-radius:1px;background:#777"></div><svg style="position:absolute;left:551.2px;top:485.4px;width:14.4px;height:14.4px" viewBox="0 0 8 8"><rect width="8" height="8" fill="#4ea53a"/><rect x="1.4" y="1.6" width="1.9" height="1.9" fill="#0c1a0a"/><rect x="4.7" y="1.6" width="1.9" height="1.9" fill="#0c1a0a"/><rect x="3.1" y="3.4" width="1.8" height="2.6" fill="#0c1a0a"/><rect x="2.2" y="4.4" width="3.6" height="1.8" fill="#0c1a0a"/><rect x="2.2" y="6" width="1" height="0.9" fill="#0c1a0a"/><rect x="4.8" y="6" width="1" height="0.9" fill="#0c1a0a"/></svg><svg style="position:absolute;left:576.8px;top:485.4px;width:14.8px;height:14.8px" viewBox="0 0 14.8 14.8"><path d="M1 14 L1.9 10.6 A6.4 6.4 0 1 1 4.4 13 Z" fill="#f4f7f2" stroke="#1f8f54" stroke-width="1.5"/><path d="M5 4.6 Q5.8 4 6.2 5 L6.6 6 Q6.7 6.4 6.2 6.9 Q7 8.4 8.6 9 Q9.2 8.3 9.6 8.5 L10.6 9 Q11.2 9.4 10.6 10.2 Q9.6 11.2 7.8 10.2 Q5.6 9 4.8 7 Q4.2 5.4 5 4.6 Z" fill="#24955c"/></svg><div style="position:absolute;left:582.6px;top:501.6px;width:3.4px;height:1px;border-radius:1px;background:#777"></div><svg style="position:absolute;left:604.4px;top:486px;width:12.4px;height:13px" viewBox="0 0 12.4 13"><path d="M10.8 0.8 L2.4 11.6" stroke="#222" stroke-width="1.3"/><path d="M7.2 0.6 L3 5.2 H5.6 L2.6 9.6" stroke="#39a86a" stroke-width="1.2" fill="none"/><path d="M0.6 8.8 H3 M0.6 10.6 H2.2" stroke="#5aa0d8" stroke-width="0.8"/></svg><div style="position:absolute;left:608.6px;top:501.6px;width:3.4px;height:1px;border-radius:1px;background:#777"></div><svg style="position:absolute;left:628.6px;top:485px;width:14.8px;height:14.8px" viewBox="0 0 14.8 14.8"><defs><linearGradient id="orb3" x1="0" y1="0" x2="1" y2="1"><stop offset="0" stop-color="#4aa8f0"/><stop offset="0.55" stop-color="#7a5be0"/><stop offset="1" stop-color="#c66ad8"/></linearGradient></defs><circle cx="7.4" cy="7.4" r="7.2" fill="url(#orb3)"/><path d="M4.6 3.6 L7.4 11.4 L10.2 3.6 Q7.4 6 4.6 3.6 Z" fill="#3a4a8a" opacity="0.75"/><path d="M7.4 2 V7" stroke="#cfe0ff" stroke-width="0.8"/></svg><div style="position:absolute;left:634.4px;top:501.6px;width:3.4px;height:1px;border-radius:1px;background:#777"></div><div style="position:absolute;left:651px;top:481.4px;width:22px;height:22px;border-radius:2.5px;background:rgba(255,255,255,0.55)"></div><svg style="position:absolute;left:655.4px;top:485.2px;width:13.4px;height:13.4px" viewBox="-10 -10 20 20"><circle r="10" fill="#18181a"/><circle r="8.7" fill="none" stroke="#cfcfcf" stroke-width="0.7"/><circle cx="0" cy="-4.1" r="3.5" fill="none" stroke="#e4e4e4" stroke-width="1.5" stroke-dasharray="15.5 30" stroke-dashoffset="-2" transform="rotate(0)"/><circle cx="0" cy="-4.1" r="3.5" fill="none" stroke="#e4e4e4" stroke-width="1.5" stroke-dasharray="15.5 30" stroke-dashoffset="-2" transform="rotate(120)"/><circle cx="0" cy="-4.1" r="3.5" fill="none" stroke="#e4e4e4" stroke-width="1.5" stroke-dasharray="15.5 30" stroke-dashoffset="-2" transform="rotate(240)"/></svg><div style="position:absolute;left:658px;top:501.2px;width:8.4px;height:1.4px;border-radius:1px;background:#2f6fd6"></div><svg style="position:absolute;left:713.5px;top:489.6px;width:7px;height:4px" viewBox="0 0 7 4"><path d="M0.5 3.6 L3.5 0.6 L6.5 3.6" stroke="#222" stroke-width="0.8" fill="none"/></svg><svg style="position:absolute;left:731.6px;top:488.2px;width:10px;height:7px" viewBox="0 0 10 7"><path d="M2.4 6.4 A1.9 1.9 0 0 1 2.2 2.7 A2.9 2.9 0 0 1 7.6 2.5 A2 2 0 0 1 7.8 6.4 Z" fill="#d8d4cf" stroke="#444" stroke-width="0.8"/></svg><svg style="position:absolute;left:751.6px;top:487px;width:6.4px;height:10px" viewBox="0 0 6.4 10"><rect x="1.8" y="0.3" width="2.8" height="5.6" rx="1.4" fill="#6c8fe0" stroke="#3c62c8" stroke-width="0.5"/><path d="M0.5 4.6 A2.7 2.7 0 0 0 5.9 4.6 M3.2 7.4 V9.4" stroke="#3c62c8" stroke-width="0.8" fill="none"/></svg><span class="t" style="left:770.60px;top:484.34px;font-size:7.4px;color:#222;transform:scaleX(0.8921);">NLD</span><span class="t" style="left:770.40px;top:494.14px;font-size:7.4px;color:#222;transform:scaleX(0.8866);">INTL</span><svg style="position:absolute;left:795.4px;top:488px;width:9.6px;height:7.6px" viewBox="0 0 10 8"><g fill="none" stroke="#222" stroke-width="0.85"><path d="M0.6 2.8 A6.2 6.2 0 0 1 9.4 2.8"/><path d="M2.1 4.4 A4.1 4.1 0 0 1 7.9 4.4"/><path d="M3.5 5.9 A2.1 2.1 0 0 1 6.5 5.9"/></g><circle cx="5" cy="7.1" r="0.7" fill="#222"/></svg><svg style="position:absolute;left:809px;top:488px;width:10px;height:8px" viewBox="0 0 10 8"><path d="M0.5 2.8 H2 L4 1 V7 L2 5.2 H0.5 Z" fill="none" stroke="#222" stroke-width="0.7"/><g fill="none" stroke="#222" stroke-width="0.7"><path d="M5.2 2.8 A1.8 1.8 0 0 1 5.2 5.2"/><path d="M6.4 1.8 A3.2 3.2 0 0 1 6.4 6.2"/><path d="M7.6 0.8 A4.6 4.6 0 0 1 7.6 7.2"/></g></svg><svg style="position:absolute;left:823px;top:487.6px;width:10.4px;height:8.4px" viewBox="0 0 10.4 8.4"><rect x="0.4" y="2.4" width="8.6" height="5" rx="1" fill="#222"/><rect x="9.2" y="3.8" width="1" height="2.2" fill="#222"/><path d="M1 2.6 V1 H2.6 M2.2 0.4 L3.6 1.6 L2.2 2.6" stroke="#222" stroke-width="0.7" fill="none"/></svg><span class="t" style="left:857.60px;top:484.06px;font-size:7.6px;color:#222;transform:scaleX(0.9256);">12:32</span><span class="t" style="left:842.40px;top:493.86px;font-size:7.6px;color:#222;transform:scaleX(0.9473);">1-10-2025</span><svg style="position:absolute;left:880px;top:487.6px;width:8.6px;height:9.6px" viewBox="0 0 8.6 9.6"><path d="M1 6.8 Q2 5.6 2 3.6 A2.3 2.3 0 0 1 6.6 3.6 Q6.6 5.6 7.6 6.8 Z" fill="#222"/><rect x="3.4" y="7.4" width="1.8" height="1.4" rx="0.6" fill="#222"/><path d="M5.4 0.6 H7.6 L5.6 2.4 H7.8" stroke="#222" stroke-width="0.6" fill="none"/></svg><svg style="position:absolute;left:781px;top:355px;width:34px;height:34px;overflow:visible" viewBox="0 0 34 34"><path d="M6 20 Q5.4 9.6 14 8.9 Q20 7.4 26.6 9.6 Q32.6 12.6 32 22 L32.2 30.6 Q29.6 30 28.4 26 L10.6 26 Q9.6 30 6.6 30.8 Q5.6 26 6 20 Z" fill="#23323c" opacity="0.55" transform="translate(0.4 0.8)"/><path d="M1.4 1.9 L12.6 11.2 L9.4 16.4 L4.2 17.4 L2.8 14.6 Z" fill="#a6e0e9"/><path d="M1.4 1.9 L7.4 16.4" stroke="#7cc6d4" stroke-width="0.8" fill="none"/><path d="M6.2 20 Q5.6 9.8 14 9 Q20 7.6 26.4 9.8 Q32 12.6 31.6 22 L31.8 30.2 Q29.4 29.4 28.2 25.4 L27.4 20.4 Q19 17.4 11.2 20.6 L10.6 25.6 Q9.6 29.6 6.8 30.4 Q5.8 26 6.2 20 Z" fill="#8fd6e3"/><path d="M10.4 13 Q14 10.6 19 10.6" stroke="#b9ebf2" stroke-width="1.2" fill="none" opacity="0.8"/><path d="M11.2 20.6 Q19 16.6 27.4 20.4 L27.2 28 H11 Z" fill="#e6f5f8"/><path d="M12.6 23.4 Q14.4 21.6 16.2 23.4 M21.6 23.4 Q23.4 21.6 25.2 23.4" stroke="#4f8ea8" stroke-width="0.9" fill="none"/><path d="M17.4 25.4 H20.6" stroke="#e48a9a" stroke-width="0.8"/><rect x="8.8" y="27" width="16.6" height="4.6" rx="1.6" fill="#15161a"/><rect x="9.4" y="28.8" width="3.4" height="2.2" rx="1" fill="#fff"/><rect x="21.8" y="28.8" width="3.4" height="2.2" rx="1" fill="#fff"/><rect x="13.8" y="27.8" width="6.8" height="1.5" rx="0.6" fill="#bfe6ee"/><circle cx="28.2" cy="9.8" r="1.5" fill="#c0304c"/></svg></div></body></html>
